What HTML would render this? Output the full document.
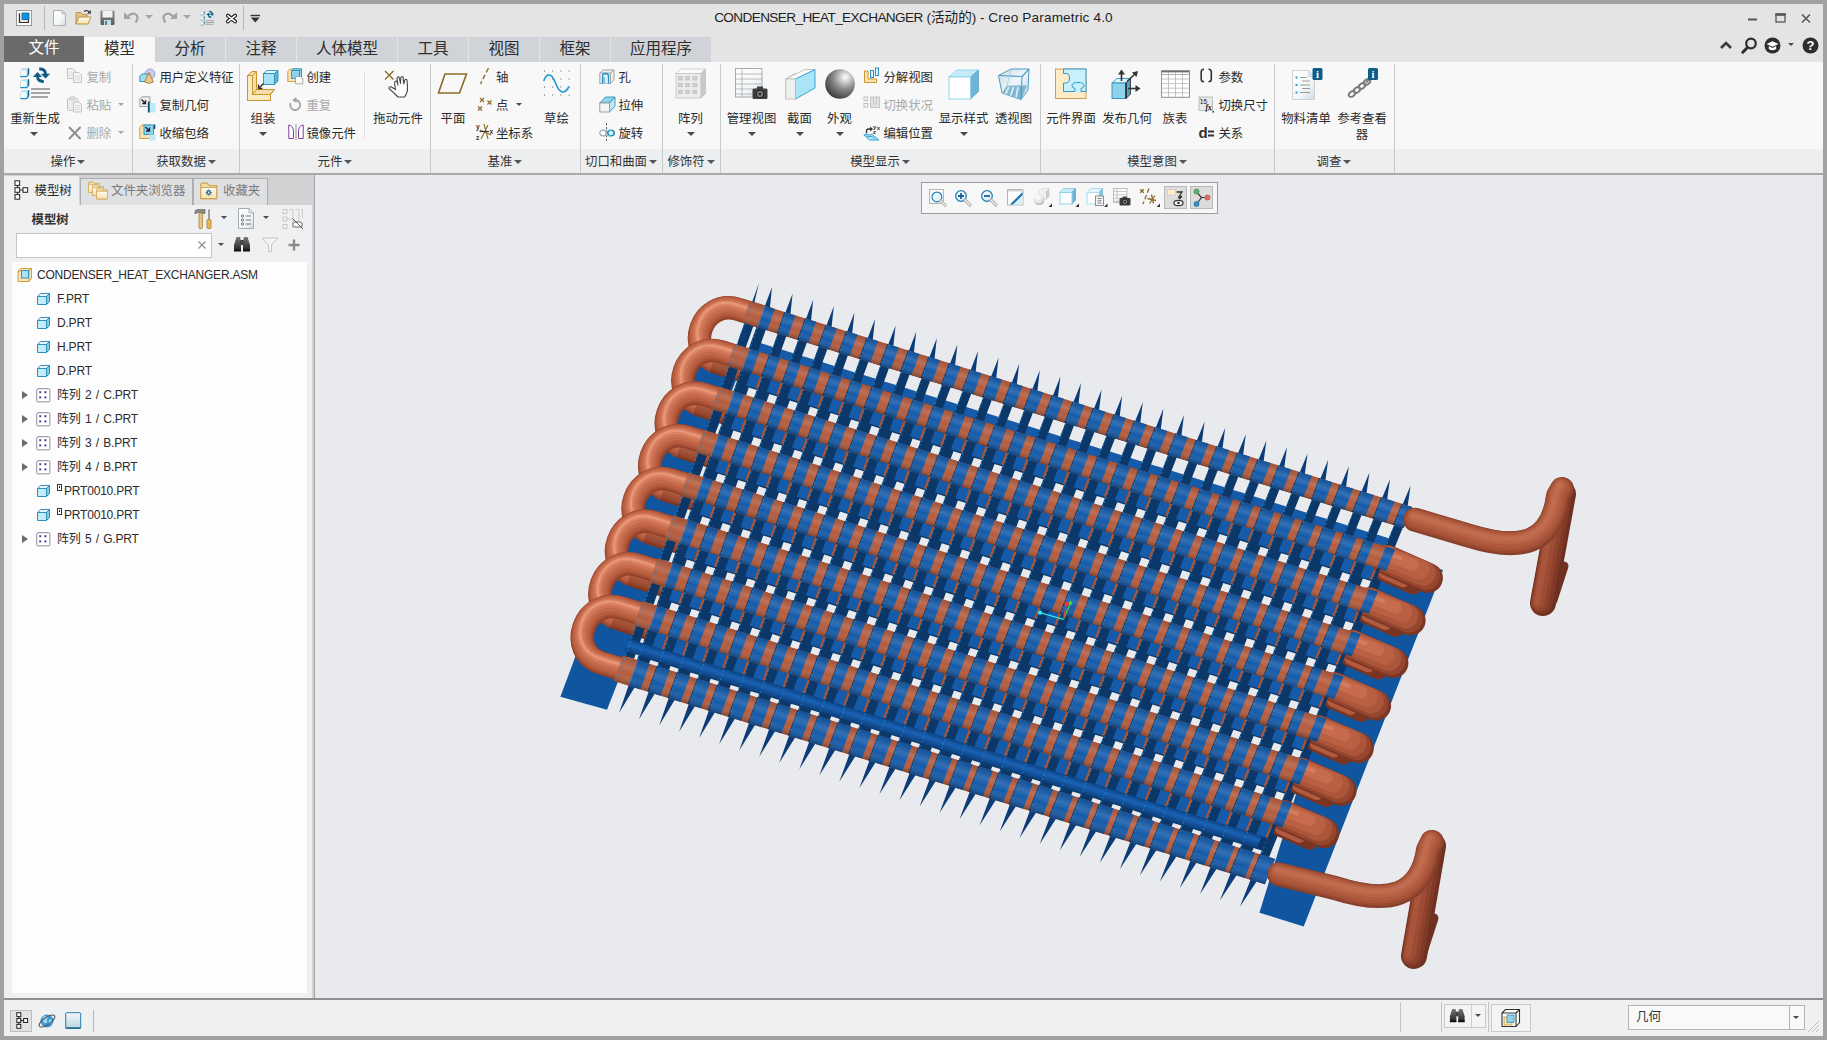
<!DOCTYPE html>
<html lang="zh"><head><meta charset="utf-8"><title>Creo Parametric</title>
<style>
*{box-sizing:border-box;margin:0;padding:0}
html,body{width:1827px;height:1040px;overflow:hidden;background:#a1a1a1}
body{font-family:"Liberation Sans","Noto Sans CJK SC",sans-serif;font-size:12px;color:#2b2b2b;position:relative}
.abs{position:absolute}
#win{position:absolute;left:4px;top:4px;width:1819px;height:1032px;background:#e4e4e4;overflow:hidden}
#title{position:absolute;left:0;top:0;width:1819px;height:32px;background:#e4e4e4}
#title .t{position:absolute;left:0;width:1819px;top:4px;text-align:center;font-size:13.6px;line-height:20px;color:#1e1e1e}
#tabs{position:absolute;left:0;top:32px;width:1819px;height:26px}
.tab{position:absolute;top:1px;height:25px;background:#d0d4d8;font-size:15.5px;color:#2d2d2d;text-align:center;line-height:23px}
.tab.file{background:#6a6a6a;color:#fff;top:0;height:26px;line-height:24px}
.tab.act{background:#f8f8f8;top:1px;height:26px}
#ribbon{position:absolute;left:0;top:58px;width:1819px;height:87px;background:#f8f8f8}
#riblab{position:absolute;left:0;top:145px;width:1819px;height:24px;background:#edeef0}
#ribline{position:absolute;left:0;top:169px;width:1819px;height:2px;background:#a9a9a9}
.gsep{position:absolute;top:60px;width:1px;height:109px;background:#c9c9c9}
.glab{position:absolute;top:149.5px;height:16px;line-height:16px;font-size:12.4px;color:#333;text-align:center;white-space:nowrap}
.glab i{display:inline-block;width:0;height:0;border-left:4px solid transparent;border-right:4px solid transparent;border-top:4px solid #555;margin-left:2px;vertical-align:2px}
.bl{position:absolute;white-space:nowrap;text-align:center;font-size:12.4px;line-height:16px;color:#2b2b2b}
.sl{position:absolute;white-space:nowrap;font-size:12.4px;line-height:16px;color:#2b2b2b}
.dis{color:#a9a9a9}
.dd{position:absolute;width:0;height:0;border-left:4px solid transparent;border-right:4px solid transparent;border-top:4px solid #4a4a4a}
.dd.g{border-top-color:#a5a5a5}
.ic{position:absolute;overflow:visible}
#left{position:absolute;left:0;top:171px;width:310px;height:823px;background:#d1d2d4}
#leftin{position:absolute;left:0;top:30px;width:308px;height:793px;background:#eff0f2}
#sash{position:absolute;left:310px;top:171px;width:1px;height:823px;background:#a4a4a4}
#gfx{position:absolute;left:311px;top:171px;width:1508px;height:823px;background:#e9eaee;overflow:hidden}
#botline{position:absolute;left:0;top:994px;width:1819px;height:2px;background:#8f8f8f}
#status{position:absolute;left:0;top:996px;width:1819px;height:36px;background:#eff0f2}
.ltab{position:absolute;top:3px;height:27px;font-size:12px;line-height:26px;color:#777;background:#dee0e2;border:1px solid #adaeb0;border-bottom:none;white-space:nowrap}
.ltab.act{background:#eff0f2;color:#2b2b2b;border:none;top:1px;height:30px}
#tree{position:absolute;left:8px;top:87px;width:295px;height:731px;background:#fdfdfd}
.tr{position:absolute;left:0;height:24px;line-height:24px;font-size:12px;color:#2b2b2b;white-space:nowrap;letter-spacing:-0.2px;word-spacing:1.2px}
.tri{position:absolute;width:0;height:0;border-top:4.5px solid transparent;border-bottom:4.5px solid transparent;border-left:6px solid #6a6a6a}
</style></head>
<body>
<div id="win">
<div id="title"><div class="t"><span style="letter-spacing:-0.62px">CONDENSER_HEAT_EXCHANGER</span> (活动的) - <span style="letter-spacing:0.15px">Creo Parametric 4.0</span></div><svg width="0" height="0" style="position:absolute"><defs>
<linearGradient id="gCube" x1="0" y1="0" x2="1" y2="1"><stop offset="0" stop-color="#e9f8fd"/><stop offset="1" stop-color="#9fdcf0"/></linearGradient>
<linearGradient id="gPaper" x1="0" y1="0" x2="1" y2="1"><stop offset="0" stop-color="#ffffff"/><stop offset="0.6" stop-color="#f4f7f9"/><stop offset="1" stop-color="#cfdde6"/></linearGradient>
<linearGradient id="gFold" x1="0" y1="0" x2="0" y2="1"><stop offset="0" stop-color="#fffdf7"/><stop offset="1" stop-color="#f7dfa8"/></linearGradient>
<linearGradient id="gSave" x1="0" y1="0" x2="0" y2="1"><stop offset="0" stop-color="#8a8a8a"/><stop offset="1" stop-color="#5c5c5c"/></linearGradient>
<radialGradient id="gBall" cx="0.68" cy="0.27" r="0.8"><stop offset="0" stop-color="#ffffff"/><stop offset="0.12" stop-color="#e4e4e4"/><stop offset="0.5" stop-color="#8a8a8a"/><stop offset="1" stop-color="#3a3a3a"/></radialGradient>
<radialGradient id="gBallW" cx="0.4" cy="0.3" r="0.8"><stop offset="0" stop-color="#ffffff"/><stop offset="0.6" stop-color="#e2e2e2"/><stop offset="1" stop-color="#9a9a9a"/></radialGradient>
<linearGradient id="gBino" x1="0" y1="0" x2="0" y2="1"><stop offset="0" stop-color="#777"/><stop offset="1" stop-color="#222"/></linearGradient>
<linearGradient id="gGlass" x1="0" y1="0" x2="1" y2="1"><stop offset="0" stop-color="#ffffff"/><stop offset="1" stop-color="#d4ecf8"/></linearGradient>
<linearGradient id="gSq" x1="0" y1="0" x2="0" y2="1"><stop offset="0" stop-color="#f4f8fb"/><stop offset="1" stop-color="#bcd4e0"/></linearGradient>
</defs></svg><svg class="ic" style="left:12px;top:6px" width="16" height="16" viewBox="0 0 16 16"><rect x="0.5" y="0.5" width="15" height="15" fill="#fff" stroke="#9a9a9a"/><path d="M3.5 3.5 V12.5 H12.5" fill="none" stroke="#333" stroke-width="1.2"/><rect x="3.5" y="9" width="9" height="3.5" fill="#e8e4dc" stroke="none"/><path d="M3.5 3.5 V12.5 H12.5 V9" fill="none" stroke="#333" stroke-width="1.2"/><rect x="6" y="3" width="7" height="6.5" fill="#0d93dc" stroke="#1a5f96" stroke-width="0.8"/></svg><div class="abs" style="left:40px;top:2px;width:1px;height:24px;background:#b5b5b5"></div><svg class="ic" style="left:49px;top:6px" width="14" height="16" viewBox="0 0 14 16"><path d="M0.5 0.5 H9 L12.5 4 V15.5 H0.5 Z" fill="url(#gPaper)" stroke="#a9b1b7"/><path d="M9 0.5 V4 H12.5 Z" fill="#cfe0ec" stroke="#a9b1b7" stroke-width="0.7"/></svg><svg class="ic" style="left:71px;top:5px" width="17" height="17" viewBox="0 0 17 17"><path d="M1 15 V4.5 Q1 3.5 2 3.5 H6 L7.5 5.5 H12 V8" fill="#e3c47f" stroke="#b8924a"/><path d="M1 15 L4 8 H16 L13 15 Z" fill="url(#gFold)" stroke="#b8924a"/><path d="M9 2.5 Q12 0.5 14.5 3" fill="none" stroke="#3a3a3a" stroke-width="1.3"/><path d="M15.8 1 V4.8 H12 Z" fill="#3a3a3a"/></svg><svg class="ic" style="left:96px;top:6px" width="15" height="16" viewBox="0 0 15 16"><rect x="0.5" y="0.5" width="14" height="14.5" rx="1" fill="url(#gSave)"/><rect x="2.5" y="0.5" width="10" height="7" fill="#f2f2f2"/><rect x="4" y="10" width="7" height="5" fill="#b9dff0"/><rect x="5" y="11" width="2" height="4" fill="#777"/></svg><svg class="ic" style="left:119px;top:7px" width="17" height="13" viewBox="0 0 17 13"><path d="M1 1 V8 H8 Z" fill="#a3a3a3"/><path d="M4 6.5 Q9 0.5 13.5 4 Q16 7 12.5 11.5" fill="none" stroke="#a3a3a3" stroke-width="2.2"/></svg><div class="dd g" style="left:141px;top:11px;border-left-width:4px;border-right-width:4px;border-top-width:4px"></div><svg class="ic" style="left:157px;top:7px" width="17" height="13" viewBox="0 0 17 13"><path d="M16 1 V8 H9 Z" fill="#a3a3a3"/><path d="M13 6.5 Q8 0.5 3.5 4 Q1 7 4.5 11.5" fill="none" stroke="#a3a3a3" stroke-width="2.2"/></svg><div class="dd g" style="left:179px;top:11px;border-left-width:4px;border-right-width:4px;border-top-width:4px"></div><svg class="ic" style="left:195px;top:6.5px" width="16" height="17" viewBox="0 0 16 17"><g transform="scale(0.46)"><g transform="translate(3 0)"><path d="M0.5 2.5 L2.5 0.5 H8.5 L6.5 2.5 Z" fill="#a8e6fa"/><path d="M6.5 2.5 L8.5 0.5 V6.5 L6.5 8.5 Z" fill="#7fbcd9"/><rect x="0.5" y="2.5" width="6" height="6" fill="#f2fcff"/><path d="M0.5 8.5 V2.5 L2.5 0.5 H8.5" fill="none" stroke="#d9cfcf" stroke-width="0.8"/><path d="M0.3 8.6 H6.5 L8.6 6.5" fill="none" stroke="#1a8fc4" stroke-width="1.2"/><path d="M8.6 0.3 V6.5" stroke="#0d5c86" stroke-width="1.2"/></g><g transform="translate(3 11)"><path d="M0.5 2.5 L2.5 0.5 H8.5 L6.5 2.5 Z" fill="#a8e6fa"/><path d="M6.5 2.5 L8.5 0.5 V6.5 L6.5 8.5 Z" fill="#7fbcd9"/><rect x="0.5" y="2.5" width="6" height="6" fill="#f2fcff"/><path d="M0.5 8.5 V2.5 L2.5 0.5 H8.5" fill="none" stroke="#d9cfcf" stroke-width="0.8"/><path d="M0.3 8.6 H6.5 L8.6 6.5" fill="none" stroke="#1a8fc4" stroke-width="1.2"/><path d="M8.6 0.3 V6.5" stroke="#0d5c86" stroke-width="1.2"/></g><g transform="translate(3 22)"><path d="M0.5 2.5 L2.5 0.5 H8.5 L6.5 2.5 Z" fill="#a8e6fa"/><path d="M6.5 2.5 L8.5 0.5 V6.5 L6.5 8.5 Z" fill="#7fbcd9"/><rect x="0.5" y="2.5" width="6" height="6" fill="#f2fcff"/><path d="M0.5 8.5 V2.5 L2.5 0.5 H8.5" fill="none" stroke="#d9cfcf" stroke-width="0.8"/><path d="M0.3 8.6 H6.5 L8.6 6.5" fill="none" stroke="#1a8fc4" stroke-width="1.2"/><path d="M8.6 0.3 V6.5" stroke="#0d5c86" stroke-width="1.2"/></g><path d="M20.5 4 L25.2 8.9 H15.8 Z" fill="#0d5c86"/><path d="M20.6 8.5 Q20.3 13.6 26.8 13.4" fill="none" stroke="#0d5c86" stroke-width="3"/><path d="M28.5 10.6 L23.8 5.7 H33.2 Z" fill="#0d5c86"/><path d="M28.4 6 Q28.7 0.9 22.2 1.1" fill="none" stroke="#0d5c86" stroke-width="3"/><g stroke="#9a9a9a" stroke-width="1.8"><path d="M14.1 21 H33"/><path d="M14.1 25 H33"/><path d="M14.1 29 H31"/></g></g></svg><svg class="ic" style="left:221px;top:9px" width="13" height="11" viewBox="0 0 13 11"><path d="M2.8 2.6 L10.2 8.6 M10.2 2.6 L2.8 8.6" stroke="#222" stroke-width="3.8" stroke-linecap="round"/><path d="M2.8 2.6 L10.2 8.6 M10.2 2.6 L2.8 8.6" stroke="#fff" stroke-width="1.5" stroke-linecap="round"/></svg><div class="abs" style="left:239px;top:2px;width:1px;height:24px;background:#b5b5b5"></div><svg class="ic" style="left:246px;top:10px" width="11" height="9" viewBox="0 0 11 9"><rect x="0.5" y="0.8" width="9.5" height="1.4" fill="#333"/><path d="M0.8 3.5 H9.7 L5.25 8.5 Z" fill="#333"/></svg><svg class="ic" style="left:1742px;top:9px" width="60" height="14" viewBox="0 0 60 14"><rect x="2" y="5.5" width="9" height="2" fill="#555"/><rect x="30" y="1" width="9" height="8" fill="none" stroke="#555" stroke-width="1.3"/><rect x="29.4" y="0.4" width="10.2" height="2.4" fill="#555"/><path d="M56 1.5 L64 9.5 M64 1.5 L56 9.5" stroke="#555" stroke-width="1.6"/></svg></div>
<div id="tabs"><div class="tab file" style="left:0px;width:80px">文件</div><div class="tab act" style="left:80px;width:71px">模型</div><div class="tab " style="left:151px;width:70px">分析</div><div class="tab " style="left:222px;width:70px">注释</div><div class="tab " style="left:293px;width:100px">人体模型</div><div class="tab " style="left:394px;width:70px">工具</div><div class="tab " style="left:465px;width:70px">视图</div><div class="tab " style="left:536px;width:70px">框架</div><div class="tab " style="left:607px;width:100px">应用程序</div><svg class="ic" style="left:1715px;top:4px" width="14" height="10" viewBox="0 0 14 10"><path d="M2 8 L7 3 L12 8" fill="none" stroke="#3a3a3a" stroke-width="2.6"/></svg><svg class="ic" style="left:1737px;top:1px" width="17" height="17" viewBox="0 0 17 17"><circle cx="10" cy="6.5" r="4.8" fill="#e4e4e4" stroke="#2d2d2d" stroke-width="2.2"/><path d="M6.5 10.5 L1.8 15.2" stroke="#2d2d2d" stroke-width="3" stroke-linecap="round"/></svg><svg class="ic" style="left:1760px;top:1px" width="17" height="17" viewBox="0 0 17 17"><circle cx="8.5" cy="8.5" r="8" fill="#2d2d2d"/><path d="M2.5 7 L8.5 4.2 L14.5 7 L8.5 9.8 Z" fill="#fff"/><path d="M4.8 9 V12 Q8.5 14.5 12.2 12 V9 L8.5 10.9 Z" fill="#fff"/></svg><div class="dd" style="left:1783.5px;top:7px;border-left-width:3.5px;border-right-width:3.5px;border-top-width:3.5px"></div><svg class="ic" style="left:1798px;top:1px" width="17" height="17" viewBox="0 0 17 17"><circle cx="8.5" cy="8.5" r="8" fill="#2d2d2d"/><text x="8.5" y="13.2" font-family="Liberation Sans,sans-serif" font-weight="bold" font-size="13" fill="#fff" text-anchor="middle">?</text></svg></div>
<div id="ribbon"></div><div id="riblab"></div><div id="ribline"></div>
<div class="gsep" style="left:128px"></div><div class="gsep" style="left:235px"></div><div class="gsep" style="left:426px"></div><div class="gsep" style="left:576px"></div><div class="gsep" style="left:658px"></div><div class="gsep" style="left:716px"></div><div class="gsep" style="left:1036px"></div><div class="gsep" style="left:1270px"></div><div class="gsep" style="left:1390px"></div>
<div class="glab" style="left:4px;width:120px">操作<i></i></div><div class="glab" style="left:122px;width:120px">获取数据<i></i></div><div class="glab" style="left:271px;width:120px">元件<i></i></div><div class="glab" style="left:441px;width:120px">基准<i></i></div><div class="glab" style="left:557px;width:120px">切口和曲面<i></i></div><div class="glab" style="left:627px;width:120px">修饰符<i></i></div><div class="glab" style="left:816px;width:120px">模型显示<i></i></div><div class="glab" style="left:1093px;width:120px">模型意图<i></i></div><div class="glab" style="left:1270px;width:120px">调查<i></i></div>
<svg class="ic" style="left:13px;top:64px" width="34" height="34" viewBox="0 0 34 34"><g transform="scale(1.0)"><g transform="translate(3 0)"><path d="M0.5 2.5 L2.5 0.5 H8.5 L6.5 2.5 Z" fill="#a8e6fa"/><path d="M6.5 2.5 L8.5 0.5 V6.5 L6.5 8.5 Z" fill="#7fbcd9"/><rect x="0.5" y="2.5" width="6" height="6" fill="#f2fcff"/><path d="M0.5 8.5 V2.5 L2.5 0.5 H8.5" fill="none" stroke="#d9cfcf" stroke-width="0.8"/><path d="M0.3 8.6 H6.5 L8.6 6.5" fill="none" stroke="#1a8fc4" stroke-width="1.2"/><path d="M8.6 0.3 V6.5" stroke="#0d5c86" stroke-width="1.2"/></g><g transform="translate(3 11)"><path d="M0.5 2.5 L2.5 0.5 H8.5 L6.5 2.5 Z" fill="#a8e6fa"/><path d="M6.5 2.5 L8.5 0.5 V6.5 L6.5 8.5 Z" fill="#7fbcd9"/><rect x="0.5" y="2.5" width="6" height="6" fill="#f2fcff"/><path d="M0.5 8.5 V2.5 L2.5 0.5 H8.5" fill="none" stroke="#d9cfcf" stroke-width="0.8"/><path d="M0.3 8.6 H6.5 L8.6 6.5" fill="none" stroke="#1a8fc4" stroke-width="1.2"/><path d="M8.6 0.3 V6.5" stroke="#0d5c86" stroke-width="1.2"/></g><g transform="translate(3 22)"><path d="M0.5 2.5 L2.5 0.5 H8.5 L6.5 2.5 Z" fill="#a8e6fa"/><path d="M6.5 2.5 L8.5 0.5 V6.5 L6.5 8.5 Z" fill="#7fbcd9"/><rect x="0.5" y="2.5" width="6" height="6" fill="#f2fcff"/><path d="M0.5 8.5 V2.5 L2.5 0.5 H8.5" fill="none" stroke="#d9cfcf" stroke-width="0.8"/><path d="M0.3 8.6 H6.5 L8.6 6.5" fill="none" stroke="#1a8fc4" stroke-width="1.2"/><path d="M8.6 0.3 V6.5" stroke="#0d5c86" stroke-width="1.2"/></g><path d="M20.5 4 L25.2 8.9 H15.8 Z" fill="#0d5c86"/><path d="M20.6 8.5 Q20.3 13.6 26.8 13.4" fill="none" stroke="#0d5c86" stroke-width="3"/><path d="M28.5 10.6 L23.8 5.7 H33.2 Z" fill="#0d5c86"/><path d="M28.4 6 Q28.7 0.9 22.2 1.1" fill="none" stroke="#0d5c86" stroke-width="3"/><g stroke="#9a9a9a" stroke-width="1.8"><path d="M14.1 21 H33"/><path d="M14.1 25 H33"/><path d="M14.1 29 H31"/></g></g></svg><div class="bl " style="left:-19px;top:106.7px;width:100px">重新生成</div><div class="dd" style="left:26px;top:128px;border-left-width:4px;border-right-width:4px;border-top-width:4px"></div><svg class="ic" style="left:63px;top:64px" width="16" height="16" viewBox="0 0 16 16"><g><path d="M0.5 0.5 H6 L8.5 3 V10.5 H0.5 Z" fill="#f4f4f4" stroke="#c4c4c4"/><path d="M2 4 H7 M2 6 H7 M2 8 H7" stroke="#d5d5d5" stroke-width="0.8"/></g><g transform="translate(6 4)"><path d="M0.5 0.5 H6 L8.5 3 V10.5 H0.5 Z" fill="#f4f4f4" stroke="#c4c4c4"/><path d="M2 4 H7 M2 6 H7 M2 8 H7" stroke="#d5d5d5" stroke-width="0.8"/></g></svg><div class="sl dis" style="left:82.4px;top:65.6px">复制</div><svg class="ic" style="left:63px;top:92px" width="16" height="17" viewBox="0 0 16 17"><rect x="0.5" y="2.5" width="10" height="12" rx="1" fill="#ececec" stroke="#c4c4c4"/><rect x="3" y="0.8" width="5" height="3" rx="1" fill="#e0e0e0" stroke="#c4c4c4" stroke-width="0.8"/><g transform="translate(6 5.5)"><path d="M0.5 0.5 H6 L8.5 3 V10.5 H0.5 Z" fill="#f4f4f4" stroke="#c4c4c4"/><path d="M2 4 H7 M2 6 H7 M2 8 H7" stroke="#d5d5d5" stroke-width="0.8"/></g></svg><div class="sl dis" style="left:82.4px;top:93.6px">粘贴</div><div class="dd g" style="left:113.5px;top:99px;border-left-width:3.5px;border-right-width:3.5px;border-top-width:3.5px"></div><svg class="ic" style="left:64px;top:122px" width="14" height="14" viewBox="0 0 14 14"><path d="M1.5 1.5 L12 12.5 M12 1.5 L1.5 12.5" stroke="#8f8f8f" stroke-width="2" stroke-linecap="round"/></svg><div class="sl dis" style="left:82.4px;top:121.6px">删除</div><div class="dd g" style="left:113.5px;top:127px;border-left-width:3.5px;border-right-width:3.5px;border-top-width:3.5px"></div><svg class="ic" style="left:135px;top:64px" width="17" height="17" viewBox="0 0 17 17"><circle cx="11" cy="6" r="5" fill="#c9cdf0" stroke="#8a8fd0" stroke-width="0.8"/><path d="M0.8 8 L3 6 H9 V11.5 L7 13.5 H0.8 Z" fill="#9fdcf0" stroke="#2a8fbd" stroke-width="0.9"/><path d="M5.5 14 L10 4.5 L14.5 14 Q10 16.5 5.5 14 Z" fill="#e8c98a" stroke="#a57c2e" stroke-width="0.9"/></svg><div class="sl " style="left:155.4px;top:65.6px">用户定义特征</div><svg class="ic" style="left:135px;top:92px" width="17" height="17" viewBox="0 0 17 17"><path d="M0.8 3 L3 0.8 H11 V8 L8.5 10.5 H0.8 Z" fill="#ededed" stroke="#9a9a9a" stroke-width="0.9"/><path d="M2.5 3.5 L6.5 7.5 M6.5 4.2 V7.5 H3.2" fill="none" stroke="#222" stroke-width="1.3"/><rect x="9" y="7" width="7.5" height="9.5" fill="#bfe9f7"/><path d="M9.8 5.5 V16.5" stroke="#0d4e6e" stroke-width="1.8"/></svg><div class="sl " style="left:155.4px;top:93.6px">复制几何</div><svg class="ic" style="left:135px;top:120px" width="17" height="17" viewBox="0 0 17 17"><path d="M0.8 3.5 L3 1 H12 V12 L10 14.5 H0.8 Z" fill="#f9e4b5" stroke="#c9952f" stroke-width="0.9"/><rect x="5" y="1" width="9.5" height="9.5" fill="#8fd3ea" stroke="#2a8fbd" stroke-width="0.9"/><path d="M15.5 0.5 V5" stroke="#0d4e6e" stroke-width="1.5"/><path d="M6.5 3 L10.5 7 M10.5 3.6 V7 H7.1" fill="none" stroke="#222" stroke-width="1.3"/><rect x="10.5" y="10.5" width="6" height="6" fill="#bfe9f7"/></svg><div class="sl " style="left:155.4px;top:121.6px">收缩包络</div><svg class="ic" style="left:243px;top:65px" width="32" height="32" viewBox="0 0 32 32"><path d="M0.5 6.5 L5 2.5 H9.5 V20.5 H27.5 L23.5 25 V31.5 H0.5 Z" fill="#f6dca6" stroke="#c9952f"/><path d="M0.5 6.5 H5.5 V25.5 H23.5 V31.5 H0.5 Z" fill="#fbe9c2" stroke="#c9952f"/><path d="M5.5 6.5 L9.5 2.5 M5.5 25.5 L9.5 20.5 M23.5 25.5 L27.5 20.5" stroke="#c9952f" fill="none"/><path d="M16.5 4.5 L20 1.5 H31 L27.5 4.5 Z" fill="#e9f8fd" stroke="#2a8fbd" stroke-width="0.9"/><path d="M27.5 4.5 L31 1.5 V12 L27.5 15.5 Z" fill="#5fb4d6" stroke="#2a8fbd" stroke-width="0.9"/><rect x="16.5" y="4.5" width="11" height="11" fill="#a9e2f5" stroke="#2a8fbd" stroke-width="0.9"/><path d="M16.5 14.5 L11.5 19.5 M11.5 15.5 V19.5 H15.5" fill="none" stroke="#333" stroke-width="1.4"/></svg><div class="bl " style="left:209px;top:106.7px;width:100px">组装</div><div class="dd" style="left:254.5px;top:128px;border-left-width:4px;border-right-width:4px;border-top-width:4px"></div><svg class="ic" style="left:283px;top:64px" width="17" height="17" viewBox="0 0 17 17"><path d="M0.8 3.5 L3 1 H10 V11 L8 13.5 H0.8 Z" fill="#f9e4b5" stroke="#c9952f" stroke-width="0.9"/><path d="M4.5 2.5 L6.5 0.8 H14.5 V8.5 L12.5 10.5 H4.5 Z" fill="#8fd3ea" stroke="#2a8fbd" stroke-width="0.9"/><path d="M4.5 2.5 H12.5 V10.5 M12.5 2.5 L14.5 0.8" fill="none" stroke="#2a8fbd" stroke-width="0.9"/><path d="M8.5 8.5 H13.5 L15.8 10.8 V15.8 H8.5 Z" fill="#fafafa" stroke="#9a9a9a" stroke-width="0.8"/></svg><div class="sl " style="left:302.4px;top:65.6px">创建</div><svg class="ic" style="left:284px;top:93px" width="14" height="15" viewBox="0 0 14 15"><path d="M7.5 3 A5 5 0 1 1 2.6 6" fill="none" stroke="#a3a3a3" stroke-width="1.8"/><path d="M8.5 0 V6 L4.2 3 Z" fill="#a3a3a3"/></svg><div class="sl dis" style="left:302.4px;top:93.6px">重复</div><svg class="ic" style="left:284px;top:120px" width="16" height="16" viewBox="0 0 16 16"><path d="M8 0 V16" stroke="#888" stroke-width="0.9"/><path d="M0.8 1 Q5.5 1.5 5.5 8 V14.5 H0.8 Z" fill="#fff" stroke="#7d3f9b" stroke-width="1"/><path d="M15.2 1 Q10.5 1.5 10.5 8 V14.5 H15.2 Z" fill="#fff" stroke="#7d3f9b" stroke-width="1"/></svg><div class="sl " style="left:302.4px;top:121.6px">镜像元件</div><div class="abs" style="left:360px;top:68px;width:1px;height:67px;background:#e0e0e0"></div><svg class="ic" style="left:380px;top:66px" width="28" height="29" viewBox="0 0 28 29"><path d="M1 1 L9.5 9.5 M9.5 1 L1 9.5" stroke="#8e6b25" stroke-width="1.4"/><path d="M10.5 13 Q11 10.5 12.8 11.3 L14 15 L13 8.5 Q13.2 6.5 15 7 L16.5 13.5 L16.8 7.8 Q17.5 6 19 7 L19.8 14 L20.8 9.8 Q22 8.5 23 10 L23.5 17 Q24 22 20.5 27 H14 Q8 21 5 18.5 Q4.8 16.5 7 16.8 L11.5 19.5 Z" fill="#fff" stroke="#444" stroke-width="1.1" stroke-linejoin="round"/></svg><div class="bl " style="left:344px;top:106.7px;width:100px">拖动元件</div><svg class="ic" style="left:433px;top:68px" width="31" height="23" viewBox="0 0 31 23"><path d="M8 2 H29.5 L22.5 21 H1.5 Z" fill="none" stroke="#8e6b25" stroke-width="1.6"/></svg><div class="bl " style="left:399px;top:106.7px;width:100px">平面</div><svg class="ic" style="left:475px;top:63px" width="11" height="18" viewBox="0 0 11 18"><path d="M9.5 1 L1.5 17" stroke="#8e6b25" stroke-width="1.4" stroke-dasharray="5 2.5"/></svg><div class="sl " style="left:491.9px;top:65.6px">轴</div><svg class="ic" style="left:472px;top:93px" width="17" height="15" viewBox="0 0 17 15"><g stroke="#8e6b25" stroke-width="1.2"><path d="M4 1 L8 5 M8 1 L4 5"/><path d="M11.5 3.5 L15.5 7.5 M15.5 3.5 L11.5 7.5"/><path d="M2 9.5 L6 13.5 M6 9.5 L2 13.5"/></g></svg><div class="sl " style="left:491.9px;top:93.6px">点</div><div class="dd" style="left:512.0px;top:99px;border-left-width:3.5px;border-right-width:3.5px;border-top-width:3.5px"></div><svg class="ic" style="left:472px;top:119px" width="18" height="18" viewBox="0 0 18 18"><path d="M8 1 L12 16 M4 7 L15 12 M12 2 L5 16" stroke="#8e6b25" stroke-width="1.1" fill="none"/><path d="M3.5 8.5 H13" stroke="#333" stroke-width="1.1"/><text x="0" y="5.5" font-size="6.5" font-family="Liberation Sans,sans-serif" font-weight="bold" fill="#333">y</text><text x="0" y="16.5" font-size="6.5" font-family="Liberation Sans,sans-serif" font-weight="bold" fill="#333">z</text><text x="13.5" y="10.5" font-size="6.5" font-family="Liberation Sans,sans-serif" font-weight="bold" fill="#333">x</text></svg><div class="sl " style="left:491.9px;top:121.6px">坐标系</div><svg class="ic" style="left:539px;top:66px" width="27" height="27" viewBox="0 0 27 27"><rect x="1.0" y="0.5" width="1" height="1" fill="#555"/><rect x="1.0" y="8.5" width="1" height="1" fill="#555"/><rect x="1.0" y="16.5" width="1" height="1" fill="#555"/><rect x="1.0" y="24.5" width="1" height="1" fill="#555"/><rect x="9.2" y="0.5" width="1" height="1" fill="#555"/><rect x="9.2" y="8.5" width="1" height="1" fill="#555"/><rect x="9.2" y="16.5" width="1" height="1" fill="#555"/><rect x="9.2" y="24.5" width="1" height="1" fill="#555"/><rect x="17.4" y="0.5" width="1" height="1" fill="#555"/><rect x="17.4" y="8.5" width="1" height="1" fill="#555"/><rect x="17.4" y="16.5" width="1" height="1" fill="#555"/><rect x="17.4" y="24.5" width="1" height="1" fill="#555"/><rect x="25.6" y="0.5" width="1" height="1" fill="#555"/><rect x="25.6" y="8.5" width="1" height="1" fill="#555"/><rect x="25.6" y="16.5" width="1" height="1" fill="#555"/><rect x="25.6" y="24.5" width="1" height="1" fill="#555"/><path d="M0.8 11 C3.5 2.5 8.5 2.5 12.5 13 S21.5 25 26 16.5" fill="none" stroke="#2b9dd4" stroke-width="1.7"/></svg><div class="bl " style="left:502.5px;top:106.7px;width:100px">草绘</div><svg class="ic" style="left:595px;top:65px" width="16" height="16" viewBox="0 0 16 16"><path d="M0.8 4 L4 1 H15 V11 L11.5 14.5 H0.8 Z" fill="#f0f0f0" stroke="#9a9a9a" stroke-width="0.9"/><path d="M0.8 4 H11.5 V14.5 M11.5 4 L15 1" fill="none" stroke="#9a9a9a" stroke-width="0.9"/><path d="M3.5 14.5 V7 Q3.5 4.5 6.5 4.5 Q9.5 4.5 9.5 7 V14.5" fill="#dff4fb" stroke="#2a8fbd" stroke-width="1.3"/><path d="M5.2 14.5 V8" stroke="#2a8fbd" stroke-width="0.9"/></svg><div class="sl " style="left:614.4px;top:65.6px">孔</div><svg class="ic" style="left:595px;top:92px" width="17" height="17" viewBox="0 0 17 17"><path d="M0.8 7 L6.5 1 H16 L10.5 7 Z" fill="#8fd3ea" stroke="#2a8fbd" stroke-width="0.9"/><path d="M10.5 7 L16 1 V10 L10.5 16 Z" fill="#bfe9f7" stroke="#2a8fbd" stroke-width="0.9"/><rect x="0.8" y="7" width="9.7" height="9" fill="#f4f4f4" stroke="#9a9a9a" stroke-width="0.9"/></svg><div class="sl " style="left:614.4px;top:93.6px">拉伸</div><svg class="ic" style="left:595px;top:119px" width="17" height="18" viewBox="0 0 17 18"><path d="M7.5 0 V18" stroke="#555" stroke-width="0.9" stroke-dasharray="2.5 1.5"/><ellipse cx="4" cy="10" rx="3.2" ry="2.8" fill="#fff" stroke="#a9a9a9" stroke-width="1.2"/><ellipse cx="12" cy="10" rx="3.2" ry="2.8" fill="#dff4fb" stroke="#2a8fbd" stroke-width="1.6"/><path d="M4 7.2 H12 M4 12.8 H12" stroke="#7fc4e0" stroke-width="0.8"/></svg><div class="sl " style="left:614.4px;top:121.6px">旋转</div><svg class="ic" style="left:671px;top:64px" width="32" height="32" viewBox="0 0 32 32"><path d="M1 5.5 L5.5 1 H30.5 L26 5.5 Z" fill="#fafafa" stroke="#c4c4c4" stroke-width="0.8"/><path d="M26 5.5 L30.5 1 V25.5 L26 30 Z" fill="#c9c9c9" stroke="#c0c0c0" stroke-width="0.8"/><rect x="1" y="5.5" width="25" height="24.5" fill="#ececec" stroke="#c4c4c4" stroke-width="0.8"/><rect x="3.5" y="8.5" width="4" height="3.5" fill="#cfcfcf" stroke="#b5b5b5" stroke-width="0.5"/><rect x="3.5" y="15.3" width="4" height="3.5" fill="#cfcfcf" stroke="#b5b5b5" stroke-width="0.5"/><rect x="3.5" y="22.1" width="4" height="3.5" fill="#cfcfcf" stroke="#b5b5b5" stroke-width="0.5"/><rect x="10.7" y="8.5" width="4" height="3.5" fill="#cfcfcf" stroke="#b5b5b5" stroke-width="0.5"/><rect x="10.7" y="15.3" width="4" height="3.5" fill="#cfcfcf" stroke="#b5b5b5" stroke-width="0.5"/><rect x="10.7" y="22.1" width="4" height="3.5" fill="#cfcfcf" stroke="#b5b5b5" stroke-width="0.5"/><rect x="17.9" y="8.5" width="4" height="3.5" fill="#cfcfcf" stroke="#b5b5b5" stroke-width="0.5"/><rect x="17.9" y="15.3" width="4" height="3.5" fill="#cfcfcf" stroke="#b5b5b5" stroke-width="0.5"/><rect x="17.9" y="22.1" width="4" height="3.5" fill="#cfcfcf" stroke="#b5b5b5" stroke-width="0.5"/></svg><div class="bl " style="left:636.5px;top:106.7px;width:100px">阵列</div><div class="dd" style="left:682.5px;top:128px;border-left-width:4px;border-right-width:4px;border-top-width:4px"></div><svg class="ic" style="left:731px;top:64px" width="34" height="32" viewBox="0 0 34 32"><rect x="0.5" y="0.5" width="26.5" height="28.5" fill="url(#gPaper)" stroke="#a0a0a0" stroke-width="0.9"/><path d="M0.5 6 H27" stroke="#a9a9a9" stroke-width="0.8"/><path d="M0.5 11 H27" stroke="#a9a9a9" stroke-width="0.8"/><path d="M0.5 16 H27" stroke="#a9a9a9" stroke-width="0.8"/><path d="M0.5 21 H27" stroke="#a9a9a9" stroke-width="0.8"/><path d="M0.5 26 H27" stroke="#a9a9a9" stroke-width="0.8"/><path d="M7 0.5 V29" stroke="#a9a9a9" stroke-width="0.8"/><rect x="17.5" y="20.5" width="15" height="10.5" rx="1.5" fill="#3c3c3c"/><rect x="22" y="18.5" width="6" height="3" fill="#3c3c3c"/><circle cx="25" cy="26" r="3.6" fill="#8a8a8a" stroke="#1e1e1e" stroke-width="1"/><circle cx="25" cy="26" r="1.6" fill="#2a2a2a"/></svg><div class="bl " style="left:697.5px;top:106.7px;width:100px">管理视图</div><div class="dd" style="left:743.5px;top:128px;border-left-width:4px;border-right-width:4px;border-top-width:4px"></div><svg class="ic" style="left:781px;top:64px" width="31" height="32" viewBox="0 0 31 32"><path d="M0.8 11 L10.5 5 V26.5 L0.8 31 Z" fill="#ededed" stroke="#b9b9b9" stroke-width="0.8"/><path d="M0.8 11 L20 1.5 L30 1.5 L10.5 11 Z" fill="#fafafa" stroke="#b9b9b9" stroke-width="0.8"/><path d="M10.5 11 L30 1.5 V20 L10.5 31 Z" fill="#a9e4f7" stroke="#3aa6d0" stroke-width="1"/><rect x="0.8" y="11" width="9.7" height="20" fill="#efefef" stroke="#b9b9b9" stroke-width="0.8"/></svg><div class="bl " style="left:745.5px;top:106.7px;width:100px">截面</div><div class="dd" style="left:791.5px;top:128px;border-left-width:4px;border-right-width:4px;border-top-width:4px"></div><svg class="ic" style="left:821px;top:65px" width="30" height="30" viewBox="0 0 30 30"><circle cx="15" cy="15" r="14.8" fill="url(#gBall)"/></svg><div class="bl " style="left:785.5px;top:106.7px;width:100px">外观</div><div class="dd" style="left:831.5px;top:128px;border-left-width:4px;border-right-width:4px;border-top-width:4px"></div><svg class="ic" style="left:859px;top:63px" width="18" height="18" viewBox="0 0 18 18"><path d="M1.5 4 V15.5 H13.5 V12 H5 V4 Z" fill="#f9e4b5" stroke="#c9952f" stroke-width="1"/><rect x="7.5" y="3.5" width="3" height="7" fill="#dff4fb" stroke="#2a8fbd" stroke-width="1"/><rect x="12.5" y="1" width="3" height="7.5" fill="#dff4fb" stroke="#2a8fbd" stroke-width="1"/></svg><div class="sl " style="left:879.4px;top:65.6px">分解视图</div><svg class="ic" style="left:859px;top:92px" width="18" height="14" viewBox="0 0 18 14"><rect x="1" y="1" width="3.6" height="3.6" fill="none" stroke="#bdbdbd"/><rect x="1" y="7.5" width="3.6" height="3.6" fill="none" stroke="#bdbdbd"/><rect x="7.5" y="1" width="9" height="10.5" fill="#e4e4e4" stroke="#c4c4c4"/><path d="M10.5 1 V8 H13.5 V1" fill="none" stroke="#c4c4c4"/></svg><div class="sl dis" style="left:879.4px;top:93.6px">切换状况</div><svg class="ic" style="left:859px;top:120px" width="18" height="17" viewBox="0 0 18 17"><path d="M3.5 9.5 V7 Q3.5 5 5.5 5 H8" fill="none" stroke="#333" stroke-width="1.3"/><path d="M7.2 2.6 L10 5 L7.2 7.4 Z" fill="#333"/><text x="10" y="4.6" font-size="6" font-weight="bold" font-family="Liberation Sans,sans-serif" fill="#333">y</text><text x="13.8" y="6" font-size="6" font-weight="bold" font-family="Liberation Sans,sans-serif" fill="#333">x</text><text x="10" y="10" font-size="6" font-weight="bold" font-family="Liberation Sans,sans-serif" fill="#333">z</text><path d="M0.8 10.8 H9.5 L15.8 16 H6.5 Z" fill="#bfe9f7" stroke="#2b9dd4" stroke-width="1"/><path d="M3.8 12.6 H9 L11.5 14.6" fill="none" stroke="#2b9dd4" stroke-width="1"/></svg><div class="sl " style="left:879.4px;top:121.6px">编辑位置</div><svg class="ic" style="left:944px;top:65px" width="32" height="31" viewBox="0 0 32 31"><path d="M1 8 L9 1 H30.5 L22.5 8 Z" fill="#c7ecf9" stroke="#7fcbe6" stroke-width="0.8"/><path d="M22.5 8 L30.5 1 V22.5 L22.5 30 Z" fill="#6fb4d6" stroke="#5fa8cc" stroke-width="0.8"/><rect x="1" y="8" width="21.5" height="22" fill="#fff" stroke="#8fd3ea" stroke-width="1"/></svg><div class="bl " style="left:909.5px;top:106.7px;width:100px">显示样式</div><div class="dd" style="left:955.5px;top:128px;border-left-width:4px;border-right-width:4px;border-top-width:4px"></div><svg class="ic" style="left:993px;top:64px" width="33" height="33" viewBox="0 0 33 33"><defs><linearGradient id="gPv" x1="0" y1="0" x2="1" y2="1"><stop offset="0" stop-color="#c9dbe4"/><stop offset="0.5" stop-color="#eef6fa"/><stop offset="1" stop-color="#b9d9e8"/></linearGradient></defs><path d="M1.5 7.5 L14 1 H32 L31 22 L24 31.5 L5 25 Z" fill="url(#gPv)" stroke="#4f9cc0" stroke-width="1"/><path d="M10 18 L30 17.5 L24 31.5 L5 25 Z" fill="#7fb6cf"/><path d="M12 19 L8.5 26 M16.5 19 L13.5 27.8 M21 19 L19 29.6" stroke="#d4ecf5" stroke-width="1.8"/><path d="M1.5 7.5 L25 8.5 L24 31.5 M25 8.5 L32 1" fill="none" stroke="#4f9cc0" stroke-width="1.1"/><path d="M14 1 L10 18 L5 25 M10 18 L30 17.5" fill="none" stroke="#9cc8dc" stroke-width="0.8"/></svg><div class="bl " style="left:959.5px;top:106.7px;width:100px">透视图</div><svg class="ic" style="left:1051px;top:64px" width="32" height="32" viewBox="0 0 32 32"><rect x="0.5" y="1" width="30.5" height="29.5" fill="#fdebc8" stroke="#c9a05a" stroke-width="1"/><path d="M8.5 1 H31 V23.5 H8.5 V15 Q14.5 16 14.5 10 Q14.5 4.5 8.5 5.5 Z" fill="#c9effb" stroke="#2b9dd4" stroke-width="1"/><path d="M20 23.5 V20.5 Q17 20 17 17.5 Q17 14.5 23 14.5 Q29 14.5 29 17.5 Q29 20 26 20.5 V23.5" fill="#c9effb" stroke="#2b9dd4" stroke-width="1"/><path d="M20.5 23.5 H25.5" stroke="#c9effb" stroke-width="1.4"/></svg><div class="bl " style="left:1017px;top:106.7px;width:100px">元件界面</div><svg class="ic" style="left:1107px;top:65px" width="31" height="31" viewBox="0 0 31 31"><path d="M1 14 L6 9.5 H19.5 L15 14 Z" fill="#dff4fb" stroke="#2a8fbd" stroke-width="0.9"/><rect x="1" y="14" width="14" height="15.5" fill="#8fd3ea" stroke="#2a8fbd" stroke-width="0.9"/><path d="M15 14 L19.5 9.5 V25 L15 29.5 Z" fill="#4fa3c6" stroke="#333" stroke-width="0.9"/><path d="M15 29.5 V14" stroke="#333" stroke-width="1.6"/><path d="M10.5 12 V2" stroke="#333" stroke-width="1.6"/><path d="M7 5.5 L10.5 0.5 L14 5.5 Z" fill="#333"/><path d="M17 19.5 H26" stroke="#333" stroke-width="1.6"/><path d="M24.5 16 L29.5 19.5 L24.5 23 Z" fill="#333"/><path d="M16 12.5 L24 5" stroke="#333" stroke-width="1.6"/><path d="M21 3.5 L27 2 L25.5 8 Z" fill="#333"/></svg><div class="bl " style="left:1073px;top:106.7px;width:100px">发布几何</div><svg class="ic" style="left:1157px;top:66px" width="30" height="29" viewBox="0 0 30 29"><rect x="0.5" y="0.8" width="28" height="26.5" fill="#fff" stroke="#8f8f8f" stroke-width="1"/><path d="M0.5 9.0 H28.5" stroke="#b5b5b5" stroke-width="0.8"/><path d="M0.5 13.6 H28.5" stroke="#b5b5b5" stroke-width="0.8"/><path d="M0.5 18.2 H28.5" stroke="#b5b5b5" stroke-width="0.8"/><path d="M0.5 22.8 H28.5" stroke="#b5b5b5" stroke-width="0.8"/><path d="M7.5 2.5 V27" stroke="#b5b5b5" stroke-width="0.8"/><path d="M14.5 2.5 V27" stroke="#b5b5b5" stroke-width="0.8"/><path d="M21.5 2.5 V27" stroke="#b5b5b5" stroke-width="0.8"/><path d="M0.5 1.5 H28.5" stroke="#6f6f6f" stroke-width="1.8"/><path d="M0.5 4.5 H28.5" stroke="#9a9a9a" stroke-width="0.8"/></svg><div class="bl " style="left:1121px;top:106.7px;width:100px">族表</div><svg class="ic" style="left:1195px;top:64px" width="16" height="16" viewBox="0 0 16 16"><path d="M5 1.2 Q2.2 1.2 2.2 4 V11 Q2.2 13.8 5 13.8 M9.5 1.2 Q12.3 1.2 12.3 4 V11 Q12.3 13.8 9.5 13.8" fill="none" stroke="#333" stroke-width="1.6"/></svg><div class="sl " style="left:1214.4px;top:65.6px">参数</div><svg class="ic" style="left:1194px;top:92px" width="18" height="18" viewBox="0 0 18 18"><rect x="1" y="1" width="13.5" height="13.5" fill="#e9e9e9" stroke="#b0b0b0" stroke-width="0.8"/><path d="M1 1 L14.5 14.5" stroke="#b0b0b0" stroke-width="0.8"/><text x="1.8" y="7.5" font-size="6.5" font-family="Liberation Sans,sans-serif" fill="#222">15</text><text x="7.5" y="14" font-size="7.5" font-style="italic" font-weight="bold" font-family="Liberation Serif,serif" fill="#222">fx</text><rect x="14.5" y="15" width="1.6" height="1.6" fill="#0d4e6e"/></svg><div class="sl " style="left:1214.4px;top:93.6px">切换尺寸</div><svg class="ic" style="left:1194px;top:120px" width="18" height="16" viewBox="0 0 18 16"><text x="0.5" y="13.5" font-size="15" font-weight="bold" font-family="Liberation Sans,sans-serif" fill="#333">d</text><path d="M10 7.5 H16 M10 11.5 H16" stroke="#333" stroke-width="1.8"/></svg><div class="sl " style="left:1214.4px;top:121.6px">关系</div><svg class="ic" style="left:1287px;top:63px" width="33" height="34" viewBox="0 0 33 34"><path d="M1.5 3.5 H17.5 L23.5 9.5 V32.5 H1.5 Z" fill="url(#gPaper)" stroke="#c9ced2" stroke-width="0.9"/><path d="M17.5 3.5 V9.5 H23.5 Z" fill="#dbe6ee" stroke="#c9ced2" stroke-width="0.7"/><g fill="#2b9dd4"><rect x="4.5" y="9.5" width="2" height="2"/><rect x="4.5" y="17" width="2" height="2"/><rect x="4.5" y="24.5" width="2" height="2"/></g><g stroke="#8f8f8f" stroke-width="0.9"><path d="M9 10.5 H16 M11 14 H19 M9 18 H19 M11 21.5 H19 M9 25.5 H19"/></g><rect x="21.5" y="1" width="10" height="12" rx="1.5" fill="#0f5e85"/><text x="26.5" y="11" font-size="10.5" font-weight="bold" font-family="Liberation Serif,serif" fill="#fff" text-anchor="middle">i</text></svg><div class="bl " style="left:1252px;top:106.7px;width:100px">物料清单</div><svg class="ic" style="left:1342px;top:63px" width="33" height="34" viewBox="0 0 33 34"><ellipse cx="6" cy="27" rx="3.6" ry="2.4" fill="none" stroke="#7a7a7a" stroke-width="1.9" transform="rotate(-38 6 27)"/><ellipse cx="11" cy="23" rx="3.6" ry="2.4" fill="none" stroke="#7a7a7a" stroke-width="1.9" transform="rotate(-38 11 23)"/><ellipse cx="16" cy="19" rx="3.6" ry="2.4" fill="none" stroke="#7a7a7a" stroke-width="1.9" transform="rotate(-38 16 19)"/><ellipse cx="21" cy="15" rx="3.6" ry="2.4" fill="none" stroke="#7a7a7a" stroke-width="1.9" transform="rotate(-38 21 15)"/><path d="M20 16 L25 10" stroke="#7a7a7a" stroke-width="1.8"/><rect x="22" y="1" width="10" height="12" rx="1.5" fill="#0f5e85"/><text x="27" y="11" font-size="10.5" font-weight="bold" font-family="Liberation Serif,serif" fill="#fff" text-anchor="middle">i</text></svg><div class="bl " style="left:1308px;top:106.7px;width:100px">参考查看</div><div class="bl " style="left:1308px;top:122.7px;width:100px">器</div><div id="left"><div id="leftin"></div><div class="ltab act" style="left:0;width:75px"></div><svg class="ic" style="left:10px;top:5px" width="16" height="21" viewBox="0 0 16 21"><g fill="#fff" stroke="#333" stroke-width="1.1"><path d="M3.5 5 V16 M3.5 10 H9" fill="none"/><rect x="1" y="0.8" width="4.6" height="4.6"/><rect x="1" y="7.7" width="4.6" height="4.6"/><rect x="1" y="14.6" width="4.6" height="4.6"/><rect x="9" y="7.7" width="4.6" height="4.6"/></g></svg><div class="abs" style="left:30.6px;top:7px;line-height:18px;font-size:12.4px;color:#2b2b2b">模型树</div><div class="ltab" style="left:76px;width:113px"></div><svg class="ic" style="left:84px;top:6px" width="22" height="19" viewBox="0 0 22 19"><g transform="translate(0 0) scale(1.0)"><path d="M0.5 11.5 V2 Q0.5 0.8 1.8 0.8 H5 L6.5 2.5 H11.5 V11.5 Z" fill="#f1dcaa" stroke="#cfa757" stroke-width="0.8"/><rect x="0.5" y="3.8" width="11" height="7.7" rx="0.8" fill="url(#gFold)" stroke="#cfa757" stroke-width="0.8"/></g><g transform="translate(4 3) scale(1.0)"><path d="M0.5 11.5 V2 Q0.5 0.8 1.8 0.8 H5 L6.5 2.5 H11.5 V11.5 Z" fill="#f1dcaa" stroke="#cfa757" stroke-width="0.8"/><rect x="0.5" y="3.8" width="11" height="7.7" rx="0.8" fill="url(#gFold)" stroke="#cfa757" stroke-width="0.8"/></g><g transform="translate(8 6.5) scale(1.0)"><path d="M0.5 11.5 V2 Q0.5 0.8 1.8 0.8 H5 L6.5 2.5 H11.5 V11.5 Z" fill="#f1dcaa" stroke="#cfa757" stroke-width="0.8"/><rect x="0.5" y="3.8" width="11" height="7.7" rx="0.8" fill="url(#gFold)" stroke="#cfa757" stroke-width="0.8"/></g></svg><div class="abs" style="left:107px;top:7px;line-height:18px;font-size:12.4px;color:#7a7a7a">文件夹浏览器</div><div class="ltab" style="left:189px;width:75px"></div><svg class="ic" style="left:196px;top:7px" width="19" height="17" viewBox="0 0 19 17"><g transform="translate(0 0) scale(1.45)"><path d="M0.5 11.5 V2 Q0.5 0.8 1.8 0.8 H5 L6.5 2.5 H11.5 V11.5 Z" fill="#f1dcaa" stroke="#cfa757" stroke-width="0.8"/><rect x="0.5" y="3.8" width="11" height="7.7" rx="0.8" fill="url(#gFold)" stroke="#cfa757" stroke-width="0.8"/></g><g stroke="#0d5c86" stroke-width="1.1"><path d="M8.7 7.5 V13.5 M5.7 10.5 H11.7 M6.6 8.4 L10.8 12.6 M10.8 8.4 L6.6 12.6"/></g><circle cx="8.7" cy="10.5" r="1" fill="#fff7e0"/></svg><div class="abs" style="left:219px;top:7px;line-height:18px;font-size:12.4px;color:#7a7a7a">收藏夹</div><div class="abs" style="left:27.5px;top:36.599999999999994px;line-height:17px;font-size:12.4px;font-weight:bold;color:#333">模型树</div><svg class="ic" style="left:190px;top:33px" width="20" height="22" viewBox="0 0 20 22"><path d="M1 4 Q1 1.5 4 1.5 H11 V5.5 H8.5 V4.5 H4 Q2.5 4.5 1 6 Z" fill="#8a8a8a" stroke="#555" stroke-width="0.6"/><rect x="5" y="5" width="3.4" height="15.5" rx="1" fill="#e8c98a" stroke="#a57c2e" stroke-width="0.8"/><rect x="14.2" y="1.5" width="1.6" height="10" fill="#8a8a8a"/><rect x="13" y="11.5" width="4" height="9" rx="1" fill="#e3b85a" stroke="#a57c2e" stroke-width="0.8"/></svg><div class="dd" style="left:216.5px;top:41px;border-left-width:3.5px;border-right-width:3.5px;border-top-width:3.5px"></div><svg class="ic" style="left:234px;top:33px" width="17" height="22" viewBox="0 0 17 22"><path d="M0.5 0.5 H11 L15.5 5 V20.5 H0.5 Z" fill="url(#gPaper)" stroke="#9aa2a8" stroke-width="0.9"/><path d="M11 0.5 V5 H15.5" fill="none" stroke="#9aa2a8" stroke-width="0.8"/><g fill="none" stroke="#555" stroke-width="0.8"><circle cx="4.5" cy="8" r="1.2"/><circle cx="4.5" cy="12" r="1.2"/><circle cx="4.5" cy="16" r="1.2"/><path d="M7.5 8 H13 M7.5 12 H13 M7.5 16 H13"/></g></svg><div class="dd" style="left:258.5px;top:41px;border-left-width:3.5px;border-right-width:3.5px;border-top-width:3.5px"></div><svg class="ic" style="left:278px;top:33px" width="22" height="23" viewBox="0 0 22 23"><g fill="none" stroke="#c9c9c9" stroke-width="1"><rect x="1" y="1.5" width="4" height="4"/><rect x="1" y="9" width="4" height="4"/><rect x="1" y="16.5" width="4" height="4"/><path d="M7.5 1.5 H11 V20 M13.5 1.5 H17 V14 M19 1.5 H20.5 V10 M5 11 H9"/></g><ellipse cx="15.5" cy="16.5" rx="4.8" ry="2.7" fill="#fff" stroke="#9a9a9a" stroke-width="1.6"/><path d="M10.5 10.5 L21 21" stroke="#444" stroke-width="0.9"/></svg><div class="abs" style="left:12px;top:58px;width:196px;height:25px;background:#fff;border:1px solid #c3c4c6"></div><svg class="ic" style="left:193px;top:65px" width="10" height="10" viewBox="0 0 10 10"><path d="M1.5 1.5 L8.5 8.5 M8.5 1.5 L1.5 8.5" stroke="#8f8f8f" stroke-width="1.2"/></svg><div class="dd" style="left:213.5px;top:68px;border-left-width:3.5px;border-right-width:3.5px;border-top-width:3.5px"></div><svg class="ic" style="left:229px;top:61px" width="19" height="17" viewBox="0 0 19 17"><g transform="scale(1.0)"><path d="M3.5 1 H7 L8 5 V15 H1 V9 Z" fill="url(#gBino)"/><path d="M14.5 1 H11 L10 5 V15 H17 V9 Z" fill="url(#gBino)"/><rect x="7.5" y="4" width="3" height="5" fill="#444"/><rect x="1" y="13.5" width="7" height="2" fill="#111"/><rect x="10" y="13.5" width="7" height="2" fill="#111"/></g></svg><svg class="ic" style="left:257px;top:62px" width="18" height="16" viewBox="0 0 18 16"><path d="M1 1 H17 L10.5 8 V14.5 H7.5 V8 Z" fill="#f4f4f4" stroke="#c4c4c4" stroke-width="1"/></svg><svg class="ic" style="left:283px;top:63px" width="14" height="14" viewBox="0 0 14 14"><path d="M7 1.5 V12.5 M1.5 7 H12.5" stroke="#8a8a8a" stroke-width="2.4"/></svg><div id="tree"><svg class="ic" style="left:5px;top:5px" width="16" height="16" viewBox="0 0 16 16"><path d="M1 4 L3.5 1.5 H14.5 V11.5 L12 14.5 H1 Z" fill="#f9e4b5" stroke="#c9952f" stroke-width="0.9"/><path d="M1 4 H12 V14.5 M12 4 L14.5 1.5" fill="none" stroke="#c9952f" stroke-width="0.9"/><rect x="4.5" y="3.5" width="7" height="7.5" fill="#a9e2f5" stroke="#2a8fbd" stroke-width="0.9"/></svg><div class="tr" style="left:25px;top:1px">CONDENSER_HEAT_EXCHANGER.ASM</div><svg class="ic" style="left:25px;top:31px" width="14" height="13" viewBox="0 0 14 13"><g transform="translate(0 0) scale(1.0)" stroke="#2a8fbd" stroke-width="1.00" stroke-linejoin="round"><path d="M0.5 3.5 L3.5 0.5 H12.5 L9.5 3.5 Z" fill="#e6f8fd"/><path d="M9.5 3.5 L12.5 0.5 V8.5 L9.5 11.5 Z" fill="#7fcbe6"/><rect x="0.5" y="3.5" width="9" height="8" fill="#c3ebf8"/></g></svg><div class="tr" style="left:45px;top:25px">F.PRT</div><svg class="ic" style="left:25px;top:55px" width="14" height="13" viewBox="0 0 14 13"><g transform="translate(0 0) scale(1.0)" stroke="#2a8fbd" stroke-width="1.00" stroke-linejoin="round"><path d="M0.5 3.5 L3.5 0.5 H12.5 L9.5 3.5 Z" fill="#e6f8fd"/><path d="M9.5 3.5 L12.5 0.5 V8.5 L9.5 11.5 Z" fill="#7fcbe6"/><rect x="0.5" y="3.5" width="9" height="8" fill="#c3ebf8"/></g></svg><div class="tr" style="left:45px;top:49px">D.PRT</div><svg class="ic" style="left:25px;top:79px" width="14" height="13" viewBox="0 0 14 13"><g transform="translate(0 0) scale(1.0)" stroke="#2a8fbd" stroke-width="1.00" stroke-linejoin="round"><path d="M0.5 3.5 L3.5 0.5 H12.5 L9.5 3.5 Z" fill="#e6f8fd"/><path d="M9.5 3.5 L12.5 0.5 V8.5 L9.5 11.5 Z" fill="#7fcbe6"/><rect x="0.5" y="3.5" width="9" height="8" fill="#c3ebf8"/></g></svg><div class="tr" style="left:45px;top:73px">H.PRT</div><svg class="ic" style="left:25px;top:103px" width="14" height="13" viewBox="0 0 14 13"><g transform="translate(0 0) scale(1.0)" stroke="#2a8fbd" stroke-width="1.00" stroke-linejoin="round"><path d="M0.5 3.5 L3.5 0.5 H12.5 L9.5 3.5 Z" fill="#e6f8fd"/><path d="M9.5 3.5 L12.5 0.5 V8.5 L9.5 11.5 Z" fill="#7fcbe6"/><rect x="0.5" y="3.5" width="9" height="8" fill="#c3ebf8"/></g></svg><div class="tr" style="left:45px;top:97px">D.PRT</div><div class="tri" style="left:10px;top:128.5px"></div><svg class="ic" style="left:24px;top:126px" width="15" height="15" viewBox="0 0 15 15"><rect x="0.7" y="0.7" width="13.2" height="13.2" rx="1.5" fill="#fff" stroke="#8a8a8a" stroke-width="1"/><rect x="3.2" y="3.2" width="2" height="2" fill="#5b3a9b"/><rect x="3.2" y="8.4" width="2" height="2" fill="#5b3a9b"/><rect x="8.4" y="3.2" width="2" height="2" fill="#5b3a9b"/><rect x="8.4" y="8.4" width="2" height="2" fill="#5b3a9b"/></svg><div class="tr" style="left:45px;top:121px">阵列 2 / C.PRT</div><div class="tri" style="left:10px;top:152.5px"></div><svg class="ic" style="left:24px;top:150px" width="15" height="15" viewBox="0 0 15 15"><rect x="0.7" y="0.7" width="13.2" height="13.2" rx="1.5" fill="#fff" stroke="#8a8a8a" stroke-width="1"/><rect x="3.2" y="3.2" width="2" height="2" fill="#5b3a9b"/><rect x="3.2" y="8.4" width="2" height="2" fill="#5b3a9b"/><rect x="8.4" y="3.2" width="2" height="2" fill="#5b3a9b"/><rect x="8.4" y="8.4" width="2" height="2" fill="#5b3a9b"/></svg><div class="tr" style="left:45px;top:145px">阵列 1 / C.PRT</div><div class="tri" style="left:10px;top:176.5px"></div><svg class="ic" style="left:24px;top:174px" width="15" height="15" viewBox="0 0 15 15"><rect x="0.7" y="0.7" width="13.2" height="13.2" rx="1.5" fill="#fff" stroke="#8a8a8a" stroke-width="1"/><rect x="3.2" y="3.2" width="2" height="2" fill="#5b3a9b"/><rect x="3.2" y="8.4" width="2" height="2" fill="#5b3a9b"/><rect x="8.4" y="3.2" width="2" height="2" fill="#5b3a9b"/><rect x="8.4" y="8.4" width="2" height="2" fill="#5b3a9b"/></svg><div class="tr" style="left:45px;top:169px">阵列 3 / B.PRT</div><div class="tri" style="left:10px;top:200.5px"></div><svg class="ic" style="left:24px;top:198px" width="15" height="15" viewBox="0 0 15 15"><rect x="0.7" y="0.7" width="13.2" height="13.2" rx="1.5" fill="#fff" stroke="#8a8a8a" stroke-width="1"/><rect x="3.2" y="3.2" width="2" height="2" fill="#5b3a9b"/><rect x="3.2" y="8.4" width="2" height="2" fill="#5b3a9b"/><rect x="8.4" y="3.2" width="2" height="2" fill="#5b3a9b"/><rect x="8.4" y="8.4" width="2" height="2" fill="#5b3a9b"/></svg><div class="tr" style="left:45px;top:193px">阵列 4 / B.PRT</div><svg class="ic" style="left:25px;top:223px" width="14" height="13" viewBox="0 0 14 13"><g transform="translate(0 0) scale(1.0)" stroke="#2a8fbd" stroke-width="1.00" stroke-linejoin="round"><path d="M0.5 3.5 L3.5 0.5 H12.5 L9.5 3.5 Z" fill="#e6f8fd"/><path d="M9.5 3.5 L12.5 0.5 V8.5 L9.5 11.5 Z" fill="#7fcbe6"/><rect x="0.5" y="3.5" width="9" height="8" fill="#c3ebf8"/></g></svg><div class="abs" style="left:45px;top:222px;width:5px;height:7px;border:1px solid #333"></div><div class="abs" style="left:47px;top:224px;width:1px;height:2px;background:#333"></div><div class="tr" style="left:52px;top:217px">PRT0010.PRT</div><svg class="ic" style="left:25px;top:247px" width="14" height="13" viewBox="0 0 14 13"><g transform="translate(0 0) scale(1.0)" stroke="#2a8fbd" stroke-width="1.00" stroke-linejoin="round"><path d="M0.5 3.5 L3.5 0.5 H12.5 L9.5 3.5 Z" fill="#e6f8fd"/><path d="M9.5 3.5 L12.5 0.5 V8.5 L9.5 11.5 Z" fill="#7fcbe6"/><rect x="0.5" y="3.5" width="9" height="8" fill="#c3ebf8"/></g></svg><div class="abs" style="left:45px;top:246px;width:5px;height:7px;border:1px solid #333"></div><div class="abs" style="left:47px;top:248px;width:1px;height:2px;background:#333"></div><div class="tr" style="left:52px;top:241px">PRT0010.PRT</div><div class="tri" style="left:10px;top:272.5px"></div><svg class="ic" style="left:24px;top:270px" width="15" height="15" viewBox="0 0 15 15"><rect x="0.7" y="0.7" width="13.2" height="13.2" rx="1.5" fill="#fff" stroke="#8a8a8a" stroke-width="1"/><rect x="3.2" y="3.2" width="2" height="2" fill="#5b3a9b"/><rect x="3.2" y="8.4" width="2" height="2" fill="#5b3a9b"/><rect x="8.4" y="3.2" width="2" height="2" fill="#5b3a9b"/><rect x="8.4" y="8.4" width="2" height="2" fill="#5b3a9b"/></svg><div class="tr" style="left:45px;top:265px">阵列 5 / G.PRT</div></div></div><div id="sash"></div>
<div id="gfx"><svg class="abs" style="left:0;top:0" width="1508" height="823" viewBox="315 175 1508 823"><defs><linearGradient id="ts0" gradientUnits="userSpaceOnUse" x1="1093.7" y1="408.0" x2="1087.0" y2="429.6"><stop offset="0" stop-color="#000" stop-opacity="0.1"/><stop offset="0.35" stop-color="#fff" stop-opacity="0.13"/><stop offset="0.6" stop-color="#fff" stop-opacity="0"/><stop offset="1" stop-color="#000" stop-opacity="0.27"/></linearGradient><linearGradient id="ts1" gradientUnits="userSpaceOnUse" x1="1077.4" y1="450.6" x2="1070.5" y2="472.6"><stop offset="0" stop-color="#000" stop-opacity="0.1"/><stop offset="0.35" stop-color="#fff" stop-opacity="0.13"/><stop offset="0.6" stop-color="#fff" stop-opacity="0"/><stop offset="1" stop-color="#000" stop-opacity="0.27"/></linearGradient><linearGradient id="ts2" gradientUnits="userSpaceOnUse" x1="1061.1" y1="493.2" x2="1054.1" y2="515.6"><stop offset="0" stop-color="#000" stop-opacity="0.1"/><stop offset="0.35" stop-color="#fff" stop-opacity="0.13"/><stop offset="0.6" stop-color="#fff" stop-opacity="0"/><stop offset="1" stop-color="#000" stop-opacity="0.27"/></linearGradient><linearGradient id="ts3" gradientUnits="userSpaceOnUse" x1="1044.8" y1="535.8" x2="1037.7" y2="558.6"><stop offset="0" stop-color="#000" stop-opacity="0.1"/><stop offset="0.35" stop-color="#fff" stop-opacity="0.13"/><stop offset="0.6" stop-color="#fff" stop-opacity="0"/><stop offset="1" stop-color="#000" stop-opacity="0.27"/></linearGradient><linearGradient id="ts4" gradientUnits="userSpaceOnUse" x1="1028.5" y1="578.3" x2="1021.2" y2="601.6"><stop offset="0" stop-color="#000" stop-opacity="0.1"/><stop offset="0.35" stop-color="#fff" stop-opacity="0.13"/><stop offset="0.6" stop-color="#fff" stop-opacity="0"/><stop offset="1" stop-color="#000" stop-opacity="0.27"/></linearGradient><linearGradient id="ts5" gradientUnits="userSpaceOnUse" x1="1012.1" y1="620.9" x2="1004.8" y2="644.6"><stop offset="0" stop-color="#000" stop-opacity="0.1"/><stop offset="0.35" stop-color="#fff" stop-opacity="0.13"/><stop offset="0.6" stop-color="#fff" stop-opacity="0"/><stop offset="1" stop-color="#000" stop-opacity="0.27"/></linearGradient><linearGradient id="ts6" gradientUnits="userSpaceOnUse" x1="995.8" y1="663.5" x2="988.3" y2="687.6"><stop offset="0" stop-color="#000" stop-opacity="0.1"/><stop offset="0.35" stop-color="#fff" stop-opacity="0.13"/><stop offset="0.6" stop-color="#fff" stop-opacity="0"/><stop offset="1" stop-color="#000" stop-opacity="0.27"/></linearGradient><linearGradient id="ts7" gradientUnits="userSpaceOnUse" x1="979.5" y1="706.1" x2="971.9" y2="730.6"><stop offset="0" stop-color="#000" stop-opacity="0.1"/><stop offset="0.35" stop-color="#fff" stop-opacity="0.13"/><stop offset="0.6" stop-color="#fff" stop-opacity="0"/><stop offset="1" stop-color="#000" stop-opacity="0.27"/></linearGradient><linearGradient id="ts8" gradientUnits="userSpaceOnUse" x1="958.8" y1="760.2" x2="950.7" y2="786.2"><stop offset="0" stop-color="#000" stop-opacity="0.1"/><stop offset="0.35" stop-color="#fff" stop-opacity="0.13"/><stop offset="0.6" stop-color="#fff" stop-opacity="0"/><stop offset="1" stop-color="#000" stop-opacity="0.27"/></linearGradient></defs><path d="M560.4 696.8 L607.0 709.8 L742.0 365.0 L690.0 349.0Z" fill="#10559f"/><path d="M1259.4 912.7 L1303.7 926.4 L1443.0 570.0 L1372.0 548.0Z" fill="#10559f"/><path d="M767.5 318.5 L738.2 309.4 C701.9 298.1 682.6 351.8 718.9 363.0 L785.7 383.8" fill="none" stroke="#934229" stroke-width="23.5" stroke-linecap="round" stroke-linejoin="round" transform="translate(0 0)" /><path d="M767.5 318.5 L738.2 309.4 C701.9 298.1 682.6 351.8 718.9 363.0 L785.7 383.8" fill="none" stroke="#a85036" stroke-width="21.2" stroke-linecap="round" stroke-linejoin="round" transform="translate(-0.5 -0.9)" /><path d="M767.5 318.5 L738.2 309.4 C701.9 298.1 682.6 351.8 718.9 363.0 L785.7 383.8" fill="none" stroke="#b85d40" stroke-width="18.3" stroke-linecap="round" stroke-linejoin="round" transform="translate(-0.9 -1.7)" /><path d="M767.5 318.5 L738.2 309.4 C701.9 298.1 682.6 351.8 718.9 363.0 L785.7 383.8" fill="none" stroke="#c4684a" stroke-width="14.1" stroke-linecap="round" stroke-linejoin="round" transform="translate(-1.3 -2.6)" /><path d="M767.5 318.5 L738.2 309.4 C701.9 298.1 682.6 351.8 718.9 363.0 L785.7 383.8" fill="none" stroke="#cf7455" stroke-width="9.4" stroke-linecap="round" stroke-linejoin="round" transform="translate(-1.7 -3.6)" /><path d="M767.5 318.5 L738.2 309.4 C701.9 298.1 682.6 351.8 718.9 363.0 L785.7 383.8" fill="none" stroke="#da8465" stroke-width="5.2" stroke-linecap="round" stroke-linejoin="round" transform="translate(-2.0 -4.4)" /><path d="M767.5 318.5 L738.2 309.4 C701.9 298.1 682.6 351.8 718.9 363.0 L785.7 383.8" fill="none" stroke="#e89878" stroke-width="2.1" stroke-linecap="round" stroke-linejoin="round" transform="translate(-2.2 -5.0)" /><path d="M713.2 361.3 L785.7 383.8" stroke="#4a1a0c" stroke-opacity="0.28" stroke-width="23.5" fill="none"/><path d="M752.1 361.5 L721.6 352.1 C685.3 340.8 666.0 394.4 702.3 405.7 L769.1 426.5" fill="none" stroke="#934229" stroke-width="23.5" stroke-linecap="round" stroke-linejoin="round" transform="translate(0 0)" /><path d="M752.1 361.5 L721.6 352.1 C685.3 340.8 666.0 394.4 702.3 405.7 L769.1 426.5" fill="none" stroke="#a85036" stroke-width="21.2" stroke-linecap="round" stroke-linejoin="round" transform="translate(-0.5 -0.9)" /><path d="M752.1 361.5 L721.6 352.1 C685.3 340.8 666.0 394.4 702.3 405.7 L769.1 426.5" fill="none" stroke="#b85d40" stroke-width="18.3" stroke-linecap="round" stroke-linejoin="round" transform="translate(-0.9 -1.7)" /><path d="M752.1 361.5 L721.6 352.1 C685.3 340.8 666.0 394.4 702.3 405.7 L769.1 426.5" fill="none" stroke="#c4684a" stroke-width="14.1" stroke-linecap="round" stroke-linejoin="round" transform="translate(-1.3 -2.6)" /><path d="M752.1 361.5 L721.6 352.1 C685.3 340.8 666.0 394.4 702.3 405.7 L769.1 426.5" fill="none" stroke="#cf7455" stroke-width="9.4" stroke-linecap="round" stroke-linejoin="round" transform="translate(-1.7 -3.6)" /><path d="M752.1 361.5 L721.6 352.1 C685.3 340.8 666.0 394.4 702.3 405.7 L769.1 426.5" fill="none" stroke="#da8465" stroke-width="5.2" stroke-linecap="round" stroke-linejoin="round" transform="translate(-2.0 -4.4)" /><path d="M752.1 361.5 L721.6 352.1 C685.3 340.8 666.0 394.4 702.3 405.7 L769.1 426.5" fill="none" stroke="#e89878" stroke-width="2.1" stroke-linecap="round" stroke-linejoin="round" transform="translate(-2.2 -5.0)" /><path d="M696.6 403.9 L769.1 426.5" stroke="#4a1a0c" stroke-opacity="0.28" stroke-width="23.5" fill="none"/><path d="M736.6 404.6 L705.0 394.7 C668.7 383.5 649.4 437.1 685.7 448.4 L752.5 469.1" fill="none" stroke="#934229" stroke-width="23.5" stroke-linecap="round" stroke-linejoin="round" transform="translate(0 0)" /><path d="M736.6 404.6 L705.0 394.7 C668.7 383.5 649.4 437.1 685.7 448.4 L752.5 469.1" fill="none" stroke="#a85036" stroke-width="21.2" stroke-linecap="round" stroke-linejoin="round" transform="translate(-0.5 -0.9)" /><path d="M736.6 404.6 L705.0 394.7 C668.7 383.5 649.4 437.1 685.7 448.4 L752.5 469.1" fill="none" stroke="#b85d40" stroke-width="18.3" stroke-linecap="round" stroke-linejoin="round" transform="translate(-0.9 -1.7)" /><path d="M736.6 404.6 L705.0 394.7 C668.7 383.5 649.4 437.1 685.7 448.4 L752.5 469.1" fill="none" stroke="#c4684a" stroke-width="14.1" stroke-linecap="round" stroke-linejoin="round" transform="translate(-1.3 -2.6)" /><path d="M736.6 404.6 L705.0 394.7 C668.7 383.5 649.4 437.1 685.7 448.4 L752.5 469.1" fill="none" stroke="#cf7455" stroke-width="9.4" stroke-linecap="round" stroke-linejoin="round" transform="translate(-1.7 -3.6)" /><path d="M736.6 404.6 L705.0 394.7 C668.7 383.5 649.4 437.1 685.7 448.4 L752.5 469.1" fill="none" stroke="#da8465" stroke-width="5.2" stroke-linecap="round" stroke-linejoin="round" transform="translate(-2.0 -4.4)" /><path d="M736.6 404.6 L705.0 394.7 C668.7 383.5 649.4 437.1 685.7 448.4 L752.5 469.1" fill="none" stroke="#e89878" stroke-width="2.1" stroke-linecap="round" stroke-linejoin="round" transform="translate(-2.2 -5.0)" /><path d="M680.0 446.6 L752.5 469.1" stroke="#4a1a0c" stroke-opacity="0.28" stroke-width="23.5" fill="none"/><path d="M721.1 447.6 L688.4 437.4 C652.1 426.1 632.8 479.8 669.1 491.0 L735.9 511.8" fill="none" stroke="#934229" stroke-width="23.5" stroke-linecap="round" stroke-linejoin="round" transform="translate(0 0)" /><path d="M721.1 447.6 L688.4 437.4 C652.1 426.1 632.8 479.8 669.1 491.0 L735.9 511.8" fill="none" stroke="#a85036" stroke-width="21.2" stroke-linecap="round" stroke-linejoin="round" transform="translate(-0.5 -0.9)" /><path d="M721.1 447.6 L688.4 437.4 C652.1 426.1 632.8 479.8 669.1 491.0 L735.9 511.8" fill="none" stroke="#b85d40" stroke-width="18.3" stroke-linecap="round" stroke-linejoin="round" transform="translate(-0.9 -1.7)" /><path d="M721.1 447.6 L688.4 437.4 C652.1 426.1 632.8 479.8 669.1 491.0 L735.9 511.8" fill="none" stroke="#c4684a" stroke-width="14.1" stroke-linecap="round" stroke-linejoin="round" transform="translate(-1.3 -2.6)" /><path d="M721.1 447.6 L688.4 437.4 C652.1 426.1 632.8 479.8 669.1 491.0 L735.9 511.8" fill="none" stroke="#cf7455" stroke-width="9.4" stroke-linecap="round" stroke-linejoin="round" transform="translate(-1.7 -3.6)" /><path d="M721.1 447.6 L688.4 437.4 C652.1 426.1 632.8 479.8 669.1 491.0 L735.9 511.8" fill="none" stroke="#da8465" stroke-width="5.2" stroke-linecap="round" stroke-linejoin="round" transform="translate(-2.0 -4.4)" /><path d="M721.1 447.6 L688.4 437.4 C652.1 426.1 632.8 479.8 669.1 491.0 L735.9 511.8" fill="none" stroke="#e89878" stroke-width="2.1" stroke-linecap="round" stroke-linejoin="round" transform="translate(-2.2 -5.0)" /><path d="M663.4 489.3 L735.9 511.8" stroke="#4a1a0c" stroke-opacity="0.28" stroke-width="23.5" fill="none"/><path d="M705.7 490.6 L671.8 480.1 C635.5 468.8 616.2 522.4 652.5 533.7 L719.3 554.5" fill="none" stroke="#934229" stroke-width="23.5" stroke-linecap="round" stroke-linejoin="round" transform="translate(0 0)" /><path d="M705.7 490.6 L671.8 480.1 C635.5 468.8 616.2 522.4 652.5 533.7 L719.3 554.5" fill="none" stroke="#a85036" stroke-width="21.2" stroke-linecap="round" stroke-linejoin="round" transform="translate(-0.5 -0.9)" /><path d="M705.7 490.6 L671.8 480.1 C635.5 468.8 616.2 522.4 652.5 533.7 L719.3 554.5" fill="none" stroke="#b85d40" stroke-width="18.3" stroke-linecap="round" stroke-linejoin="round" transform="translate(-0.9 -1.7)" /><path d="M705.7 490.6 L671.8 480.1 C635.5 468.8 616.2 522.4 652.5 533.7 L719.3 554.5" fill="none" stroke="#c4684a" stroke-width="14.1" stroke-linecap="round" stroke-linejoin="round" transform="translate(-1.3 -2.6)" /><path d="M705.7 490.6 L671.8 480.1 C635.5 468.8 616.2 522.4 652.5 533.7 L719.3 554.5" fill="none" stroke="#cf7455" stroke-width="9.4" stroke-linecap="round" stroke-linejoin="round" transform="translate(-1.7 -3.6)" /><path d="M705.7 490.6 L671.8 480.1 C635.5 468.8 616.2 522.4 652.5 533.7 L719.3 554.5" fill="none" stroke="#da8465" stroke-width="5.2" stroke-linecap="round" stroke-linejoin="round" transform="translate(-2.0 -4.4)" /><path d="M705.7 490.6 L671.8 480.1 C635.5 468.8 616.2 522.4 652.5 533.7 L719.3 554.5" fill="none" stroke="#e89878" stroke-width="2.1" stroke-linecap="round" stroke-linejoin="round" transform="translate(-2.2 -5.0)" /><path d="M646.8 531.9 L719.3 554.5" stroke="#4a1a0c" stroke-opacity="0.28" stroke-width="23.5" fill="none"/><path d="M690.2 533.6 L655.2 522.7 C618.9 511.5 599.6 565.1 635.9 576.4 L702.8 597.2" fill="none" stroke="#934229" stroke-width="23.5" stroke-linecap="round" stroke-linejoin="round" transform="translate(0 0)" /><path d="M690.2 533.6 L655.2 522.7 C618.9 511.5 599.6 565.1 635.9 576.4 L702.8 597.2" fill="none" stroke="#a85036" stroke-width="21.2" stroke-linecap="round" stroke-linejoin="round" transform="translate(-0.5 -0.9)" /><path d="M690.2 533.6 L655.2 522.7 C618.9 511.5 599.6 565.1 635.9 576.4 L702.8 597.2" fill="none" stroke="#b85d40" stroke-width="18.3" stroke-linecap="round" stroke-linejoin="round" transform="translate(-0.9 -1.7)" /><path d="M690.2 533.6 L655.2 522.7 C618.9 511.5 599.6 565.1 635.9 576.4 L702.8 597.2" fill="none" stroke="#c4684a" stroke-width="14.1" stroke-linecap="round" stroke-linejoin="round" transform="translate(-1.3 -2.6)" /><path d="M690.2 533.6 L655.2 522.7 C618.9 511.5 599.6 565.1 635.9 576.4 L702.8 597.2" fill="none" stroke="#cf7455" stroke-width="9.4" stroke-linecap="round" stroke-linejoin="round" transform="translate(-1.7 -3.6)" /><path d="M690.2 533.6 L655.2 522.7 C618.9 511.5 599.6 565.1 635.9 576.4 L702.8 597.2" fill="none" stroke="#da8465" stroke-width="5.2" stroke-linecap="round" stroke-linejoin="round" transform="translate(-2.0 -4.4)" /><path d="M690.2 533.6 L655.2 522.7 C618.9 511.5 599.6 565.1 635.9 576.4 L702.8 597.2" fill="none" stroke="#e89878" stroke-width="2.1" stroke-linecap="round" stroke-linejoin="round" transform="translate(-2.2 -5.0)" /><path d="M630.2 574.6 L702.8 597.2" stroke="#4a1a0c" stroke-opacity="0.28" stroke-width="23.5" fill="none"/><path d="M674.7 576.7 L638.6 565.4 C602.3 554.1 583.0 607.8 619.3 619.1 L686.2 639.8" fill="none" stroke="#934229" stroke-width="23.5" stroke-linecap="round" stroke-linejoin="round" transform="translate(0 0)" /><path d="M674.7 576.7 L638.6 565.4 C602.3 554.1 583.0 607.8 619.3 619.1 L686.2 639.8" fill="none" stroke="#a85036" stroke-width="21.2" stroke-linecap="round" stroke-linejoin="round" transform="translate(-0.5 -0.9)" /><path d="M674.7 576.7 L638.6 565.4 C602.3 554.1 583.0 607.8 619.3 619.1 L686.2 639.8" fill="none" stroke="#b85d40" stroke-width="18.3" stroke-linecap="round" stroke-linejoin="round" transform="translate(-0.9 -1.7)" /><path d="M674.7 576.7 L638.6 565.4 C602.3 554.1 583.0 607.8 619.3 619.1 L686.2 639.8" fill="none" stroke="#c4684a" stroke-width="14.1" stroke-linecap="round" stroke-linejoin="round" transform="translate(-1.3 -2.6)" /><path d="M674.7 576.7 L638.6 565.4 C602.3 554.1 583.0 607.8 619.3 619.1 L686.2 639.8" fill="none" stroke="#cf7455" stroke-width="9.4" stroke-linecap="round" stroke-linejoin="round" transform="translate(-1.7 -3.6)" /><path d="M674.7 576.7 L638.6 565.4 C602.3 554.1 583.0 607.8 619.3 619.1 L686.2 639.8" fill="none" stroke="#da8465" stroke-width="5.2" stroke-linecap="round" stroke-linejoin="round" transform="translate(-2.0 -4.4)" /><path d="M674.7 576.7 L638.6 565.4 C602.3 554.1 583.0 607.8 619.3 619.1 L686.2 639.8" fill="none" stroke="#e89878" stroke-width="2.1" stroke-linecap="round" stroke-linejoin="round" transform="translate(-2.2 -5.0)" /><path d="M613.6 617.3 L686.2 639.8" stroke="#4a1a0c" stroke-opacity="0.28" stroke-width="23.5" fill="none"/><path d="M659.2 619.7 L622.0 608.1 C584.7 596.5 564.8 651.6 602.2 663.2 L669.0 684.0" fill="none" stroke="#934229" stroke-width="23.5" stroke-linecap="round" stroke-linejoin="round" transform="translate(0 0)" /><path d="M659.2 619.7 L622.0 608.1 C584.7 596.5 564.8 651.6 602.2 663.2 L669.0 684.0" fill="none" stroke="#a85036" stroke-width="21.2" stroke-linecap="round" stroke-linejoin="round" transform="translate(-0.5 -0.9)" /><path d="M659.2 619.7 L622.0 608.1 C584.7 596.5 564.8 651.6 602.2 663.2 L669.0 684.0" fill="none" stroke="#b85d40" stroke-width="18.3" stroke-linecap="round" stroke-linejoin="round" transform="translate(-0.9 -1.7)" /><path d="M659.2 619.7 L622.0 608.1 C584.7 596.5 564.8 651.6 602.2 663.2 L669.0 684.0" fill="none" stroke="#c4684a" stroke-width="14.1" stroke-linecap="round" stroke-linejoin="round" transform="translate(-1.3 -2.6)" /><path d="M659.2 619.7 L622.0 608.1 C584.7 596.5 564.8 651.6 602.2 663.2 L669.0 684.0" fill="none" stroke="#cf7455" stroke-width="9.4" stroke-linecap="round" stroke-linejoin="round" transform="translate(-1.7 -3.6)" /><path d="M659.2 619.7 L622.0 608.1 C584.7 596.5 564.8 651.6 602.2 663.2 L669.0 684.0" fill="none" stroke="#da8465" stroke-width="5.2" stroke-linecap="round" stroke-linejoin="round" transform="translate(-2.0 -4.4)" /><path d="M659.2 619.7 L622.0 608.1 C584.7 596.5 564.8 651.6 602.2 663.2 L669.0 684.0" fill="none" stroke="#e89878" stroke-width="2.1" stroke-linecap="round" stroke-linejoin="round" transform="translate(-2.2 -5.0)" /><path d="M760.3 316.3 L1407.0 517.2 L1264.0 869.6 L632.4 672.6Z" fill="#0b3869"/><path d="M744.6 323.2 L753.4 326.0 L745.7 347.5 L736.9 344.8ZM729.1 366.5 L737.9 369.2 L730.3 390.3 L721.5 387.6ZM713.6 409.7 L722.4 412.4 L715.0 433.2 L706.2 430.4ZM698.1 452.9 L706.9 455.7 L699.6 476.0 L690.9 473.3ZM682.6 496.2 L691.4 498.9 L684.2 518.8 L675.5 516.1ZM667.1 539.4 L675.9 542.1 L668.9 561.6 L660.2 558.9ZM651.7 582.7 L660.3 585.4 L653.5 604.4 L644.8 601.7ZM636.2 625.9 L644.8 628.6 L634.0 658.9 L625.3 656.2Z" fill="#0b3869"/><path d="M772.0 287.0 L768.8 318.9 L761.0 316.5ZM619.0 713.0 L641.8 675.6 L633.0 672.8ZM792.6 293.4 L789.3 325.3 L781.5 322.9ZM639.0 719.2 L661.9 681.9 L653.1 679.1ZM813.2 299.8 L809.9 331.7 L802.1 329.3ZM659.1 725.5 L682.0 688.1 L673.1 685.4ZM833.8 306.2 L830.4 338.1 L822.6 335.6ZM679.1 731.8 L702.1 694.4 L693.2 691.6ZM854.4 312.6 L851.0 344.5 L843.2 342.0ZM699.1 738.0 L722.2 700.6 L713.3 697.9ZM875.0 319.0 L871.6 350.9 L863.8 348.4ZM719.1 744.2 L742.2 706.9 L733.4 704.2ZM895.6 325.4 L892.1 357.2 L884.3 354.8ZM739.2 750.5 L762.3 713.2 L753.5 710.4ZM916.2 331.8 L912.7 363.6 L904.9 361.2ZM759.2 756.8 L782.4 719.4 L773.6 716.7ZM936.8 338.2 L933.3 370.0 L925.4 367.6ZM779.2 763.0 L802.5 725.7 L793.6 722.9ZM957.4 344.6 L953.8 376.4 L946.0 374.0ZM799.3 769.2 L822.6 732.0 L813.7 729.2ZM978.0 351.0 L974.4 382.8 L966.6 380.4ZM819.3 775.5 L842.7 738.2 L833.8 735.5ZM998.6 357.4 L994.9 389.2 L987.1 386.8ZM839.3 781.8 L862.7 744.5 L853.9 741.7ZM1019.2 363.8 L1015.5 395.6 L1007.7 393.2ZM859.4 788.0 L882.8 750.8 L874.0 748.0ZM1039.8 370.2 L1036.1 402.0 L1028.2 399.5ZM879.4 794.2 L902.9 757.0 L894.1 754.3ZM1060.4 376.6 L1056.6 408.4 L1048.8 405.9ZM899.4 800.5 L923.0 763.3 L914.2 760.5ZM1081.0 383.0 L1077.2 414.8 L1069.4 412.3ZM919.5 806.8 L943.1 769.5 L934.2 766.8ZM1101.6 389.4 L1097.7 421.1 L1089.9 418.7ZM939.5 813.0 L963.2 775.8 L954.3 773.1ZM1122.2 395.8 L1118.3 427.5 L1110.5 425.1ZM959.5 819.2 L983.2 782.1 L974.4 779.3ZM1142.8 402.2 L1138.9 433.9 L1131.0 431.5ZM979.5 825.5 L1003.3 788.3 L994.5 785.6ZM1163.4 408.6 L1159.4 440.3 L1151.6 437.9ZM999.6 831.8 L1023.4 794.6 L1014.6 791.8ZM1184.0 415.0 L1180.0 446.7 L1172.2 444.3ZM1019.6 838.0 L1043.5 800.9 L1034.7 798.1ZM1204.6 421.4 L1200.5 453.1 L1192.7 450.7ZM1039.6 844.2 L1063.6 807.1 L1054.7 804.4ZM1225.2 427.8 L1221.1 459.5 L1213.3 457.0ZM1059.7 850.5 L1083.7 813.4 L1074.8 810.6ZM1245.8 434.2 L1241.7 465.9 L1233.8 463.4ZM1079.7 856.8 L1103.7 819.7 L1094.9 816.9ZM1266.4 440.6 L1262.2 472.3 L1254.4 469.8ZM1099.7 863.0 L1123.8 825.9 L1115.0 823.2ZM1287.0 447.0 L1282.8 478.6 L1275.0 476.2ZM1119.8 869.2 L1143.9 832.2 L1135.1 829.4ZM1307.6 453.4 L1303.3 485.0 L1295.5 482.6ZM1139.8 875.5 L1164.0 838.5 L1155.2 835.7ZM1328.2 459.8 L1323.9 491.4 L1316.1 489.0ZM1159.8 881.8 L1184.1 844.7 L1175.2 842.0ZM1348.8 466.2 L1344.5 497.8 L1336.6 495.4ZM1179.8 888.0 L1204.2 851.0 L1195.3 848.2ZM1369.4 472.6 L1365.0 504.2 L1357.2 501.8ZM1199.9 894.2 L1224.2 857.2 L1215.4 854.5ZM1390.0 479.0 L1385.6 510.6 L1377.8 508.2ZM1219.9 900.5 L1244.3 863.5 L1235.5 860.8ZM1410.6 485.4 L1406.1 517.0 L1398.3 514.6ZM1239.9 906.8 L1264.4 869.8 L1255.6 867.0ZM759.0 283.0 L745.0 341.3 L738.0 341.3Z" fill="#0b3c77"/><path d="M761.0 343.2 L772.9 346.9 L769.9 355.0 L758.0 351.3ZM781.5 349.5 L793.4 353.2 L790.4 361.4 L778.5 357.7ZM802.0 355.9 L813.9 359.6 L810.9 367.8 L799.0 364.1ZM822.5 362.3 L834.5 366.0 L831.5 374.2 L819.6 370.5ZM843.1 368.7 L855.0 372.4 L852.0 380.6 L840.1 376.9ZM863.6 375.1 L875.5 378.8 L872.5 386.9 L860.6 383.2ZM884.1 381.4 L896.0 385.1 L893.0 393.3 L881.1 389.6ZM904.7 387.8 L916.6 391.5 L913.5 399.7 L901.6 396.0ZM925.2 394.2 L937.1 397.9 L934.1 406.1 L922.2 402.4ZM945.7 400.6 L957.6 404.3 L954.6 412.4 L942.7 408.7ZM966.2 407.0 L978.1 410.7 L975.1 418.8 L963.2 415.1ZM986.8 413.3 L998.7 417.0 L995.6 425.2 L983.7 421.5ZM1007.3 419.7 L1019.2 423.4 L1016.1 431.6 L1004.2 427.9ZM1027.8 426.1 L1039.7 429.8 L1036.6 438.0 L1024.7 434.3ZM1048.4 432.5 L1060.3 436.2 L1057.2 444.3 L1045.3 440.6ZM1068.9 438.9 L1080.8 442.6 L1077.7 450.7 L1065.8 447.0ZM1089.4 445.3 L1101.3 449.0 L1098.2 457.1 L1086.3 453.4ZM1109.9 451.6 L1121.8 455.3 L1118.7 463.5 L1106.8 459.8ZM1130.5 458.0 L1142.4 461.7 L1139.2 469.8 L1127.3 466.1ZM1151.0 464.4 L1162.9 468.1 L1159.7 476.2 L1147.8 472.5ZM1171.5 470.8 L1183.4 474.5 L1180.3 482.6 L1168.4 478.9ZM1192.1 477.2 L1204.0 480.9 L1200.8 489.0 L1188.9 485.3ZM1212.6 483.5 L1224.5 487.2 L1221.3 495.4 L1209.4 491.7ZM1233.1 489.9 L1245.0 493.6 L1241.8 501.7 L1229.9 498.0ZM1253.6 496.3 L1265.5 500.0 L1262.3 508.1 L1250.4 504.4ZM1274.2 502.7 L1286.1 506.4 L1282.8 514.5 L1270.9 510.8ZM1294.7 509.1 L1306.6 512.8 L1303.4 520.9 L1291.5 517.2ZM1315.2 515.4 L1327.1 519.1 L1323.9 527.3 L1312.0 523.6ZM1335.8 521.8 L1347.7 525.5 L1344.4 533.6 L1332.5 529.9ZM1356.3 528.2 L1368.2 531.9 L1364.9 540.0 L1353.0 536.3ZM1376.8 534.6 L1388.7 538.3 L1385.4 546.4 L1373.5 542.7ZM750.6 373.2 L760.0 376.1 L755.6 388.3 L746.2 385.4ZM771.1 379.5 L780.5 382.5 L776.1 394.7 L766.7 391.8ZM791.6 385.9 L801.0 388.8 L796.6 401.1 L787.2 398.1ZM812.1 392.3 L821.5 395.2 L817.0 407.4 L807.6 404.5ZM832.6 398.6 L842.0 401.6 L837.5 413.8 L828.1 410.9ZM853.1 405.0 L862.5 407.9 L858.0 420.2 L848.6 417.2ZM873.6 411.4 L883.0 414.3 L878.5 426.5 L869.0 423.6ZM894.0 417.7 L903.5 420.7 L898.9 432.9 L889.5 430.0ZM914.5 424.1 L924.0 427.0 L919.4 439.3 L910.0 436.3ZM935.0 430.5 L944.4 433.4 L939.9 445.6 L930.5 442.7ZM955.5 436.9 L964.9 439.8 L960.4 452.0 L950.9 449.1ZM976.0 443.2 L985.4 446.2 L980.8 458.4 L971.4 455.4ZM996.5 449.6 L1005.9 452.5 L1001.3 464.7 L991.9 461.8ZM1017.0 456.0 L1026.4 458.9 L1021.8 471.1 L1012.3 468.2ZM1037.5 462.3 L1046.9 465.3 L1042.2 477.5 L1032.8 474.5ZM1057.9 468.7 L1067.4 471.6 L1062.7 483.8 L1053.3 480.9ZM1078.4 475.1 L1087.9 478.0 L1083.2 490.2 L1073.8 487.3ZM1098.9 481.5 L1108.4 484.4 L1103.7 496.6 L1094.2 493.6ZM1119.4 487.8 L1128.8 490.8 L1124.1 502.9 L1114.7 500.0ZM1139.9 494.2 L1149.3 497.1 L1144.6 509.3 L1135.2 506.4ZM1160.4 500.6 L1169.8 503.5 L1165.1 515.7 L1155.7 512.7ZM1180.9 506.9 L1190.3 509.9 L1185.5 522.0 L1176.1 519.1ZM1201.4 513.3 L1210.8 516.2 L1206.0 528.4 L1196.6 525.5ZM1221.9 519.7 L1231.3 522.6 L1226.5 534.8 L1217.1 531.8ZM1242.3 526.0 L1251.8 529.0 L1247.0 541.1 L1237.5 538.2ZM1262.8 532.4 L1272.3 535.3 L1267.4 547.5 L1258.0 544.6ZM1283.3 538.8 L1292.7 541.7 L1287.9 553.9 L1278.5 550.9ZM1303.8 545.2 L1313.2 548.1 L1308.4 560.2 L1299.0 557.3ZM1324.3 551.5 L1333.7 554.5 L1328.8 566.6 L1319.4 563.7ZM1344.8 557.9 L1354.2 560.8 L1349.3 573.0 L1339.9 570.0ZM1365.3 564.3 L1374.7 567.2 L1369.8 579.3 L1360.4 576.4ZM735.1 416.4 L744.5 419.3 L740.1 431.3 L730.7 428.4ZM755.5 422.7 L764.9 425.7 L760.6 437.7 L751.2 434.7ZM775.9 429.1 L785.3 432.0 L781.0 444.0 L771.6 441.1ZM796.4 435.4 L805.8 438.4 L801.4 450.4 L792.0 447.4ZM816.8 441.8 L826.2 444.7 L821.8 456.7 L812.4 453.8ZM837.2 448.2 L846.6 451.1 L842.2 463.1 L832.8 460.1ZM857.7 454.5 L867.1 457.4 L862.6 469.4 L853.2 466.5ZM878.1 460.9 L887.5 463.8 L883.0 475.8 L873.7 472.9ZM898.5 467.2 L907.9 470.1 L903.5 482.1 L894.1 479.2ZM918.9 473.6 L928.3 476.5 L923.9 488.5 L914.5 485.6ZM939.4 479.9 L948.8 482.9 L944.3 494.8 L934.9 491.9ZM959.8 486.3 L969.2 489.2 L964.7 501.2 L955.3 498.3ZM980.2 492.6 L989.6 495.6 L985.1 507.5 L975.7 504.6ZM1000.7 499.0 L1010.1 501.9 L1005.5 513.9 L996.1 511.0ZM1021.1 505.4 L1030.5 508.3 L1025.9 520.2 L1016.6 517.3ZM1041.5 511.7 L1050.9 514.6 L1046.4 526.6 L1037.0 523.7ZM1062.0 518.1 L1071.4 521.0 L1066.8 532.9 L1057.4 530.0ZM1082.4 524.4 L1091.8 527.3 L1087.2 539.3 L1077.8 536.4ZM1102.8 530.8 L1112.2 533.7 L1107.6 545.6 L1098.2 542.7ZM1123.3 537.1 L1132.6 540.1 L1128.0 552.0 L1118.6 549.1ZM1143.7 543.5 L1153.1 546.4 L1148.4 558.3 L1139.0 555.4ZM1164.1 549.8 L1173.5 552.8 L1168.8 564.7 L1159.5 561.8ZM1184.5 556.2 L1193.9 559.1 L1189.3 571.0 L1179.9 568.1ZM1205.0 562.6 L1214.4 565.5 L1209.7 577.4 L1200.3 574.5ZM1225.4 568.9 L1234.8 571.8 L1230.1 583.7 L1220.7 580.8ZM1245.8 575.3 L1255.2 578.2 L1250.5 590.1 L1241.1 587.2ZM1266.3 581.6 L1275.7 584.5 L1270.9 596.4 L1261.5 593.5ZM1286.7 588.0 L1296.1 590.9 L1291.3 602.8 L1281.9 599.9ZM1307.1 594.3 L1316.5 597.3 L1311.7 609.1 L1302.4 606.2ZM1327.6 600.7 L1337.0 603.6 L1332.2 615.5 L1322.8 612.6ZM1348.0 607.0 L1357.4 610.0 L1352.6 621.8 L1343.2 618.9ZM719.5 459.6 L728.9 462.5 L724.6 474.3 L715.3 471.4ZM739.9 465.9 L749.3 468.9 L745.0 480.6 L735.6 477.7ZM760.3 472.3 L769.6 475.2 L765.4 487.0 L756.0 484.1ZM780.6 478.6 L790.0 481.5 L785.7 493.3 L776.4 490.4ZM801.0 485.0 L810.4 487.9 L806.1 499.6 L796.7 496.7ZM821.4 491.3 L830.8 494.2 L826.4 506.0 L817.1 503.1ZM841.8 497.6 L851.1 500.6 L846.8 512.3 L837.4 509.4ZM862.1 504.0 L871.5 506.9 L867.1 518.6 L857.8 515.7ZM882.5 510.3 L891.9 513.2 L887.5 525.0 L878.1 522.1ZM902.9 516.7 L912.2 519.6 L907.9 531.3 L898.5 528.4ZM923.2 523.0 L932.6 525.9 L928.2 537.7 L918.9 534.7ZM943.6 529.3 L953.0 532.3 L948.6 544.0 L939.2 541.1ZM964.0 535.7 L973.4 538.6 L968.9 550.3 L959.6 547.4ZM984.4 542.0 L993.7 544.9 L989.3 556.7 L979.9 553.7ZM1004.7 548.4 L1014.1 551.3 L1009.6 563.0 L1000.3 560.1ZM1025.1 554.7 L1034.5 557.6 L1030.0 569.3 L1020.6 566.4ZM1045.5 561.0 L1054.9 564.0 L1050.4 575.7 L1041.0 572.8ZM1065.9 567.4 L1075.2 570.3 L1070.7 582.0 L1061.4 579.1ZM1086.2 573.7 L1095.6 576.6 L1091.1 588.3 L1081.7 585.4ZM1106.6 580.1 L1116.0 583.0 L1111.4 594.7 L1102.1 591.8ZM1127.0 586.4 L1136.3 589.3 L1131.8 601.0 L1122.4 598.1ZM1147.3 592.7 L1156.7 595.7 L1152.1 607.4 L1142.8 604.4ZM1167.7 599.1 L1177.1 602.0 L1172.5 613.7 L1163.1 610.8ZM1188.1 605.4 L1197.5 608.3 L1192.9 620.0 L1183.5 617.1ZM1208.5 611.8 L1217.8 614.7 L1213.2 626.4 L1203.8 623.4ZM1228.8 618.1 L1238.2 621.0 L1233.6 632.7 L1224.2 629.8ZM1249.2 624.4 L1258.6 627.4 L1253.9 639.0 L1244.6 636.1ZM1269.6 630.8 L1279.0 633.7 L1274.3 645.4 L1264.9 642.5ZM1290.0 637.1 L1299.3 640.0 L1294.6 651.7 L1285.3 648.8ZM1310.3 643.5 L1319.7 646.4 L1315.0 658.0 L1305.6 655.1ZM1330.7 649.8 L1340.1 652.7 L1335.4 664.4 L1326.0 661.5ZM704.0 502.8 L713.3 505.7 L709.2 517.3 L699.8 514.4ZM724.3 509.2 L733.6 512.1 L729.5 523.6 L720.1 520.7ZM744.6 515.5 L753.9 518.4 L749.8 529.9 L740.4 527.0ZM764.9 521.8 L774.3 524.7 L770.1 536.2 L760.7 533.3ZM785.2 528.1 L794.6 531.0 L790.4 542.6 L781.0 539.6ZM805.5 534.5 L814.9 537.4 L810.7 548.9 L801.3 546.0ZM825.9 540.8 L835.2 543.7 L831.0 555.2 L821.6 552.3ZM846.2 547.1 L855.5 550.0 L851.3 561.5 L841.9 558.6ZM866.5 553.4 L875.8 556.3 L871.6 567.8 L862.2 564.9ZM886.8 559.8 L896.1 562.7 L891.9 574.2 L882.5 571.3ZM907.1 566.1 L916.5 569.0 L912.2 580.5 L902.8 577.6ZM927.4 572.4 L936.8 575.3 L932.4 586.8 L923.1 583.9ZM947.7 578.7 L957.1 581.6 L952.7 593.1 L943.4 590.2ZM968.1 585.1 L977.4 588.0 L973.0 599.4 L963.7 596.5ZM988.4 591.4 L997.7 594.3 L993.3 605.8 L984.0 602.9ZM1008.7 597.7 L1018.0 600.6 L1013.6 612.1 L1004.3 609.2ZM1029.0 604.0 L1038.4 606.9 L1033.9 618.4 L1024.6 615.5ZM1049.3 610.4 L1058.7 613.3 L1054.2 624.7 L1044.9 621.8ZM1069.6 616.7 L1079.0 619.6 L1074.5 631.0 L1065.2 628.1ZM1089.9 623.0 L1099.3 625.9 L1094.8 637.4 L1085.5 634.5ZM1110.3 629.3 L1119.6 632.2 L1115.1 643.7 L1105.8 640.8ZM1130.6 635.7 L1139.9 638.6 L1135.4 650.0 L1126.1 647.1ZM1150.9 642.0 L1160.2 644.9 L1155.7 656.3 L1146.4 653.4ZM1171.2 648.3 L1180.6 651.2 L1176.0 662.7 L1166.7 659.7ZM1191.5 654.6 L1200.9 657.5 L1196.3 669.0 L1187.0 666.1ZM1211.8 661.0 L1221.2 663.9 L1216.6 675.3 L1207.3 672.4ZM1232.2 667.3 L1241.5 670.2 L1236.9 681.6 L1227.6 678.7ZM1252.5 673.6 L1261.8 676.5 L1257.2 687.9 L1247.9 685.0ZM1272.8 679.9 L1282.1 682.8 L1277.5 694.3 L1268.2 691.4ZM1293.1 686.3 L1302.4 689.2 L1297.8 700.6 L1288.5 697.7ZM1313.4 692.6 L1322.8 695.5 L1318.1 706.9 L1308.8 704.0ZM688.4 546.1 L697.7 549.0 L693.7 560.3 L684.4 557.4ZM708.7 552.4 L718.0 555.3 L713.9 566.6 L704.6 563.7ZM728.9 558.7 L738.2 561.6 L734.1 572.9 L724.8 570.0ZM749.2 565.0 L758.5 567.9 L754.4 579.2 L745.1 576.3ZM769.4 571.3 L778.8 574.2 L774.6 585.5 L765.3 582.6ZM789.7 577.6 L799.0 580.5 L794.9 591.8 L785.6 588.9ZM810.0 583.9 L819.3 586.8 L815.1 598.1 L805.8 595.2ZM830.2 590.2 L839.5 593.1 L835.4 604.4 L826.0 601.5ZM850.5 596.5 L859.8 599.4 L855.6 610.7 L846.3 607.8ZM870.7 602.8 L880.0 605.7 L875.8 617.0 L866.5 614.1ZM891.0 609.2 L900.3 612.1 L896.1 623.3 L886.8 620.4ZM911.2 615.5 L920.6 618.4 L916.3 629.6 L907.0 626.7ZM931.5 621.8 L940.8 624.7 L936.6 635.9 L927.3 633.0ZM951.8 628.1 L961.1 631.0 L956.8 642.2 L947.5 639.3ZM972.0 634.4 L981.3 637.3 L977.1 648.5 L967.7 645.6ZM992.3 640.7 L1001.6 643.6 L997.3 654.8 L988.0 651.9ZM1012.5 647.0 L1021.8 649.9 L1017.5 661.1 L1008.2 658.2ZM1032.8 653.3 L1042.1 656.2 L1037.8 667.5 L1028.5 664.6ZM1053.0 659.6 L1062.4 662.5 L1058.0 673.8 L1048.7 670.9ZM1073.3 665.9 L1082.6 668.8 L1078.3 680.1 L1068.9 677.2ZM1093.6 672.3 L1102.9 675.2 L1098.5 686.4 L1089.2 683.5ZM1113.8 678.6 L1123.1 681.5 L1118.7 692.7 L1109.4 689.8ZM1134.1 684.9 L1143.4 687.8 L1139.0 699.0 L1129.7 696.1ZM1154.3 691.2 L1163.6 694.1 L1159.2 705.3 L1149.9 702.4ZM1174.6 697.5 L1183.9 700.4 L1179.5 711.6 L1170.2 708.7ZM1194.8 703.8 L1204.2 706.7 L1199.7 717.9 L1190.4 715.0ZM1215.1 710.1 L1224.4 713.0 L1220.0 724.2 L1210.6 721.3ZM1235.4 716.4 L1244.7 719.3 L1240.2 730.5 L1230.9 727.6ZM1255.6 722.7 L1264.9 725.6 L1260.4 736.8 L1251.1 733.9ZM1275.9 729.0 L1285.2 731.9 L1280.7 743.1 L1271.4 740.2ZM1296.1 735.3 L1305.4 738.3 L1300.9 749.4 L1291.6 746.5ZM672.9 589.3 L682.2 592.2 L678.2 603.2 L668.9 600.3ZM693.1 595.6 L702.4 598.5 L698.4 609.5 L689.1 606.6ZM713.3 601.9 L722.6 604.8 L718.5 615.8 L709.3 612.9ZM733.5 608.2 L742.8 611.1 L738.7 622.1 L729.4 619.2ZM753.7 614.5 L763.0 617.4 L758.9 628.4 L749.6 625.5ZM773.9 620.8 L783.2 623.7 L779.1 634.7 L769.8 631.8ZM794.1 627.1 L803.4 629.9 L799.3 641.0 L790.0 638.1ZM814.3 633.3 L823.6 636.2 L819.5 647.3 L810.2 644.4ZM834.5 639.6 L843.8 642.5 L839.6 653.6 L830.4 650.7ZM854.7 645.9 L863.9 648.8 L859.8 659.8 L850.5 657.0ZM874.9 652.2 L884.1 655.1 L880.0 666.1 L870.7 663.2ZM895.1 658.5 L904.3 661.4 L900.2 672.4 L890.9 669.5ZM915.3 664.8 L924.5 667.7 L920.4 678.7 L911.1 675.8ZM935.5 671.1 L944.7 674.0 L940.6 685.0 L931.3 682.1ZM955.7 677.4 L964.9 680.3 L960.8 691.3 L951.5 688.4ZM975.9 683.7 L985.1 686.6 L980.9 697.6 L971.7 694.7ZM996.1 690.0 L1005.3 692.9 L1001.1 703.9 L991.8 701.0ZM1016.3 696.3 L1025.5 699.2 L1021.3 710.2 L1012.0 707.3ZM1036.4 702.6 L1045.7 705.5 L1041.5 716.5 L1032.2 713.6ZM1056.6 708.9 L1065.9 711.8 L1061.7 722.8 L1052.4 719.9ZM1076.8 715.2 L1086.1 718.1 L1081.9 729.0 L1072.6 726.2ZM1097.0 721.5 L1106.3 724.4 L1102.0 735.3 L1092.8 732.4ZM1117.2 727.8 L1126.5 730.7 L1122.2 741.6 L1112.9 738.7ZM1137.4 734.1 L1146.7 737.0 L1142.4 747.9 L1133.1 745.0ZM1157.6 740.4 L1166.9 743.2 L1162.6 754.2 L1153.3 751.3ZM1177.8 746.6 L1187.1 749.5 L1182.8 760.5 L1173.5 757.6ZM1198.0 752.9 L1207.3 755.8 L1203.0 766.8 L1193.7 763.9ZM1218.2 759.2 L1227.5 762.1 L1223.1 773.1 L1213.9 770.2ZM1238.4 765.5 L1247.7 768.4 L1243.3 779.4 L1234.0 776.5ZM1258.6 771.8 L1267.9 774.7 L1263.5 785.7 L1254.2 782.8ZM1278.8 778.1 L1288.1 781.0 L1283.7 792.0 L1274.4 789.1Z" fill="#155baa"/><path d="M760.0 376.1 L762.3 376.8 L757.9 389.0 L755.6 388.3ZM780.5 382.5 L782.8 383.2 L778.4 395.4 L776.1 394.7ZM801.0 388.8 L803.3 389.5 L798.8 401.8 L796.6 401.1ZM821.5 395.2 L823.8 395.9 L819.3 408.1 L817.0 407.4ZM842.0 401.6 L844.3 402.3 L839.8 414.5 L837.5 413.8ZM862.5 407.9 L864.7 408.6 L860.2 420.9 L858.0 420.2ZM883.0 414.3 L885.2 415.0 L880.7 427.2 L878.5 426.5ZM903.5 420.7 L905.7 421.4 L901.2 433.6 L898.9 432.9ZM924.0 427.0 L926.2 427.7 L921.7 440.0 L919.4 439.3ZM944.4 433.4 L946.7 434.1 L942.1 446.3 L939.9 445.6ZM964.9 439.8 L967.2 440.5 L962.6 452.7 L960.4 452.0ZM985.4 446.2 L987.7 446.9 L983.1 459.1 L980.8 458.4ZM1005.9 452.5 L1008.2 453.2 L1003.5 465.4 L1001.3 464.7ZM1026.4 458.9 L1028.7 459.6 L1024.0 471.8 L1021.8 471.1ZM1046.9 465.3 L1049.1 466.0 L1044.5 478.2 L1042.2 477.5ZM1067.4 471.6 L1069.6 472.3 L1065.0 484.5 L1062.7 483.8ZM1087.9 478.0 L1090.1 478.7 L1085.4 490.9 L1083.2 490.2ZM1108.4 484.4 L1110.6 485.1 L1105.9 497.3 L1103.7 496.6ZM1128.8 490.8 L1131.1 491.5 L1126.4 503.6 L1124.1 502.9ZM1149.3 497.1 L1151.6 497.8 L1146.9 510.0 L1144.6 509.3ZM1169.8 503.5 L1172.1 504.2 L1167.3 516.4 L1165.1 515.7ZM1190.3 509.9 L1192.6 510.6 L1187.8 522.7 L1185.5 522.0ZM1210.8 516.2 L1213.0 516.9 L1208.3 529.1 L1206.0 528.4ZM1231.3 522.6 L1233.5 523.3 L1228.7 535.5 L1226.5 534.8ZM1251.8 529.0 L1254.0 529.7 L1249.2 541.8 L1247.0 541.1ZM1272.3 535.3 L1274.5 536.0 L1269.7 548.2 L1267.4 547.5ZM1292.7 541.7 L1295.0 542.4 L1290.2 554.6 L1287.9 553.9ZM1313.2 548.1 L1315.5 548.8 L1310.6 560.9 L1308.4 560.2ZM1333.7 554.5 L1336.0 555.2 L1331.1 567.3 L1328.8 566.6ZM1354.2 560.8 L1356.5 561.5 L1351.6 573.7 L1349.3 573.0ZM1374.7 567.2 L1377.0 567.9 L1372.0 580.0 L1369.8 579.3ZM744.5 419.3 L746.7 420.0 L742.4 432.0 L740.1 431.3ZM764.9 425.7 L767.1 426.4 L762.8 438.4 L760.6 437.7ZM785.3 432.0 L787.6 432.7 L783.2 444.7 L781.0 444.0ZM805.8 438.4 L808.0 439.1 L803.6 451.1 L801.4 450.4ZM826.2 444.7 L828.4 445.4 L824.0 457.4 L821.8 456.7ZM846.6 451.1 L848.9 451.8 L844.5 463.8 L842.2 463.1ZM867.1 457.4 L869.3 458.1 L864.9 470.1 L862.6 469.4ZM887.5 463.8 L889.7 464.5 L885.3 476.5 L883.0 475.8ZM907.9 470.1 L910.2 470.8 L905.7 482.8 L903.5 482.1ZM928.3 476.5 L930.6 477.2 L926.1 489.2 L923.9 488.5ZM948.8 482.9 L951.0 483.6 L946.5 495.5 L944.3 494.8ZM969.2 489.2 L971.5 489.9 L966.9 501.9 L964.7 501.2ZM989.6 495.6 L991.9 496.3 L987.4 508.2 L985.1 507.5ZM1010.1 501.9 L1012.3 502.6 L1007.8 514.6 L1005.5 513.9ZM1030.5 508.3 L1032.7 509.0 L1028.2 520.9 L1025.9 520.2ZM1050.9 514.6 L1053.2 515.3 L1048.6 527.3 L1046.4 526.6ZM1071.4 521.0 L1073.6 521.7 L1069.0 533.6 L1066.8 532.9ZM1091.8 527.3 L1094.0 528.0 L1089.4 540.0 L1087.2 539.3ZM1112.2 533.7 L1114.5 534.4 L1109.8 546.3 L1107.6 545.6ZM1132.6 540.1 L1134.9 540.8 L1130.3 552.7 L1128.0 552.0ZM1153.1 546.4 L1155.3 547.1 L1150.7 559.0 L1148.4 558.3ZM1173.5 552.8 L1175.8 553.5 L1171.1 565.4 L1168.8 564.7ZM1193.9 559.1 L1196.2 559.8 L1191.5 571.7 L1189.3 571.0ZM1214.4 565.5 L1216.6 566.2 L1211.9 578.1 L1209.7 577.4ZM1234.8 571.8 L1237.0 572.5 L1232.3 584.4 L1230.1 583.7ZM1255.2 578.2 L1257.5 578.9 L1252.7 590.8 L1250.5 590.1ZM1275.7 584.5 L1277.9 585.2 L1273.2 597.1 L1270.9 596.4ZM1296.1 590.9 L1298.3 591.6 L1293.6 603.5 L1291.3 602.8ZM1316.5 597.3 L1318.8 598.0 L1314.0 609.8 L1311.7 609.1ZM1337.0 603.6 L1339.2 604.3 L1334.4 616.2 L1332.2 615.5ZM1357.4 610.0 L1359.6 610.7 L1354.8 622.5 L1352.6 621.8ZM728.9 462.5 L731.1 463.2 L726.9 475.0 L724.6 474.3ZM749.3 468.9 L751.5 469.6 L747.2 481.3 L745.0 480.6ZM769.6 475.2 L771.9 475.9 L767.6 487.7 L765.4 487.0ZM790.0 481.5 L792.3 482.2 L788.0 494.0 L785.7 493.3ZM810.4 487.9 L812.6 488.6 L808.3 500.3 L806.1 499.6ZM830.8 494.2 L833.0 494.9 L828.7 506.7 L826.4 506.0ZM851.1 500.6 L853.4 501.3 L849.0 513.0 L846.8 512.3ZM871.5 506.9 L873.7 507.6 L869.4 519.3 L867.1 518.6ZM891.9 513.2 L894.1 513.9 L889.7 525.7 L887.5 525.0ZM912.2 519.6 L914.5 520.3 L910.1 532.0 L907.9 531.3ZM932.6 525.9 L934.9 526.6 L930.5 538.4 L928.2 537.7ZM953.0 532.3 L955.2 533.0 L950.8 544.7 L948.6 544.0ZM973.4 538.6 L975.6 539.3 L971.2 551.0 L968.9 550.3ZM993.7 544.9 L996.0 545.6 L991.5 557.4 L989.3 556.7ZM1014.1 551.3 L1016.3 552.0 L1011.9 563.7 L1009.6 563.0ZM1034.5 557.6 L1036.7 558.3 L1032.2 570.0 L1030.0 569.3ZM1054.9 564.0 L1057.1 564.7 L1052.6 576.4 L1050.4 575.7ZM1075.2 570.3 L1077.5 571.0 L1073.0 582.7 L1070.7 582.0ZM1095.6 576.6 L1097.8 577.3 L1093.3 589.0 L1091.1 588.3ZM1116.0 583.0 L1118.2 583.7 L1113.7 595.4 L1111.4 594.7ZM1136.3 589.3 L1138.6 590.0 L1134.0 601.7 L1131.8 601.0ZM1156.7 595.7 L1159.0 596.4 L1154.4 608.0 L1152.1 607.4ZM1177.1 602.0 L1179.3 602.7 L1174.7 614.4 L1172.5 613.7ZM1197.5 608.3 L1199.7 609.0 L1195.1 620.7 L1192.9 620.0ZM1217.8 614.7 L1220.1 615.4 L1215.5 627.1 L1213.2 626.4ZM1238.2 621.0 L1240.4 621.7 L1235.8 633.4 L1233.6 632.7ZM1258.6 627.4 L1260.8 628.1 L1256.2 639.7 L1253.9 639.0ZM1279.0 633.7 L1281.2 634.4 L1276.5 646.1 L1274.3 645.4ZM1299.3 640.0 L1301.6 640.7 L1296.9 652.4 L1294.6 651.7ZM1319.7 646.4 L1321.9 647.1 L1317.2 658.7 L1315.0 658.0ZM1340.1 652.7 L1342.3 653.4 L1337.6 665.1 L1335.4 664.4ZM713.3 505.7 L715.5 506.4 L711.4 518.0 L709.2 517.3ZM733.6 512.1 L735.9 512.8 L731.7 524.3 L729.5 523.6ZM753.9 518.4 L756.2 519.1 L752.0 530.6 L749.8 529.9ZM774.3 524.7 L776.5 525.4 L772.3 536.9 L770.1 536.2ZM794.6 531.0 L796.8 531.7 L792.6 543.3 L790.4 542.6ZM814.9 537.4 L817.1 538.1 L812.9 549.6 L810.7 548.9ZM835.2 543.7 L837.4 544.4 L833.2 555.9 L831.0 555.2ZM855.5 550.0 L857.8 550.7 L853.5 562.2 L851.3 561.5ZM875.8 556.3 L878.1 557.0 L873.8 568.5 L871.6 567.8ZM896.1 562.7 L898.4 563.4 L894.1 574.9 L891.9 574.2ZM916.5 569.0 L918.7 569.7 L914.4 581.2 L912.2 580.5ZM936.8 575.3 L939.0 576.0 L934.7 587.5 L932.4 586.8ZM957.1 581.6 L959.3 582.3 L955.0 593.8 L952.7 593.1ZM977.4 588.0 L979.6 588.7 L975.3 600.1 L973.0 599.4ZM997.7 594.3 L1000.0 595.0 L995.6 606.5 L993.3 605.8ZM1018.0 600.6 L1020.3 601.3 L1015.9 612.8 L1013.6 612.1ZM1038.4 606.9 L1040.6 607.6 L1036.2 619.1 L1033.9 618.4ZM1058.7 613.3 L1060.9 614.0 L1056.5 625.4 L1054.2 624.7ZM1079.0 619.6 L1081.2 620.3 L1076.8 631.7 L1074.5 631.0ZM1099.3 625.9 L1101.5 626.6 L1097.1 638.1 L1094.8 637.4ZM1119.6 632.2 L1121.8 632.9 L1117.4 644.4 L1115.1 643.7ZM1139.9 638.6 L1142.2 639.3 L1137.7 650.7 L1135.4 650.0ZM1160.2 644.9 L1162.5 645.6 L1158.0 657.0 L1155.7 656.3ZM1180.6 651.2 L1182.8 651.9 L1178.3 663.3 L1176.0 662.7ZM1200.9 657.5 L1203.1 658.2 L1198.6 669.7 L1196.3 669.0ZM1221.2 663.9 L1223.4 664.6 L1218.9 676.0 L1216.6 675.3ZM1241.5 670.2 L1243.7 670.9 L1239.2 682.3 L1236.9 681.6ZM1261.8 676.5 L1264.0 677.2 L1259.5 688.6 L1257.2 687.9ZM1282.1 682.8 L1284.4 683.5 L1279.8 695.0 L1277.5 694.3ZM1302.4 689.2 L1304.7 689.9 L1300.1 701.3 L1297.8 700.6ZM1322.8 695.5 L1325.0 696.2 L1320.4 707.6 L1318.1 706.9ZM697.7 549.0 L700.0 549.7 L695.9 560.9 L693.7 560.3ZM718.0 555.3 L720.2 556.0 L716.1 567.3 L713.9 566.6ZM738.2 561.6 L740.5 562.3 L736.4 573.6 L734.1 572.9ZM758.5 567.9 L760.7 568.6 L756.6 579.9 L754.4 579.2ZM778.8 574.2 L781.0 574.9 L776.9 586.2 L774.6 585.5ZM799.0 580.5 L801.2 581.2 L797.1 592.5 L794.9 591.8ZM819.3 586.8 L821.5 587.5 L817.3 598.8 L815.1 598.1ZM839.5 593.1 L841.8 593.8 L837.6 605.1 L835.4 604.4ZM859.8 599.4 L862.0 600.1 L857.8 611.4 L855.6 610.7ZM880.0 605.7 L882.3 606.4 L878.1 617.7 L875.8 617.0ZM900.3 612.1 L902.5 612.8 L898.3 624.0 L896.1 623.3ZM920.6 618.4 L922.8 619.1 L918.6 630.3 L916.3 629.6ZM940.8 624.7 L943.0 625.4 L938.8 636.6 L936.6 635.9ZM961.1 631.0 L963.3 631.7 L959.0 642.9 L956.8 642.2ZM981.3 637.3 L983.6 638.0 L979.3 649.2 L977.1 648.5ZM1001.6 643.6 L1003.8 644.3 L999.5 655.5 L997.3 654.8ZM1021.8 649.9 L1024.1 650.6 L1019.8 661.8 L1017.5 661.1ZM1042.1 656.2 L1044.3 656.9 L1040.0 668.1 L1037.8 667.5ZM1062.4 662.5 L1064.6 663.2 L1060.2 674.5 L1058.0 673.8ZM1082.6 668.8 L1084.8 669.5 L1080.5 680.8 L1078.3 680.1ZM1102.9 675.2 L1105.1 675.8 L1100.7 687.1 L1098.5 686.4ZM1123.1 681.5 L1125.4 682.2 L1121.0 693.4 L1118.7 692.7ZM1143.4 687.8 L1145.6 688.5 L1141.2 699.7 L1139.0 699.0ZM1163.6 694.1 L1165.9 694.8 L1161.5 706.0 L1159.2 705.3ZM1183.9 700.4 L1186.1 701.1 L1181.7 712.3 L1179.5 711.6ZM1204.2 706.7 L1206.4 707.4 L1201.9 718.6 L1199.7 717.9ZM1224.4 713.0 L1226.6 713.7 L1222.2 724.9 L1220.0 724.2ZM1244.7 719.3 L1246.9 720.0 L1242.4 731.2 L1240.2 730.5ZM1264.9 725.6 L1267.2 726.3 L1262.7 737.5 L1260.4 736.8ZM1285.2 731.9 L1287.4 732.6 L1282.9 743.8 L1280.7 743.1ZM1305.4 738.3 L1307.7 738.9 L1303.1 750.1 L1300.9 749.4ZM682.2 592.2 L684.4 592.9 L680.4 603.9 L678.2 603.2ZM702.4 598.5 L704.6 599.2 L700.6 610.2 L698.4 609.5ZM722.6 604.8 L724.8 605.5 L720.8 616.5 L718.5 615.8ZM742.8 611.1 L745.0 611.8 L740.9 622.8 L738.7 622.1ZM763.0 617.4 L765.2 618.1 L761.1 629.1 L758.9 628.4ZM783.2 623.7 L785.4 624.3 L781.3 635.4 L779.1 634.7ZM803.4 629.9 L805.6 630.6 L801.5 641.7 L799.3 641.0ZM823.6 636.2 L825.8 636.9 L821.7 648.0 L819.5 647.3ZM843.8 642.5 L846.0 643.2 L841.9 654.2 L839.6 653.6ZM863.9 648.8 L866.2 649.5 L862.1 660.5 L859.8 659.8ZM884.1 655.1 L886.4 655.8 L882.2 666.8 L880.0 666.1ZM904.3 661.4 L906.6 662.1 L902.4 673.1 L900.2 672.4ZM924.5 667.7 L926.8 668.4 L922.6 679.4 L920.4 678.7ZM944.7 674.0 L947.0 674.7 L942.8 685.7 L940.6 685.0ZM964.9 680.3 L967.2 681.0 L963.0 692.0 L960.8 691.3ZM985.1 686.6 L987.4 687.3 L983.2 698.3 L980.9 697.6ZM1005.3 692.9 L1007.6 693.6 L1003.3 704.6 L1001.1 703.9ZM1025.5 699.2 L1027.8 699.9 L1023.5 710.9 L1021.3 710.2ZM1045.7 705.5 L1048.0 706.2 L1043.7 717.2 L1041.5 716.5ZM1065.9 711.8 L1068.2 712.5 L1063.9 723.4 L1061.7 722.8ZM1086.1 718.1 L1088.4 718.8 L1084.1 729.7 L1081.9 729.0ZM1106.3 724.4 L1108.6 725.1 L1104.3 736.0 L1102.0 735.3ZM1126.5 730.7 L1128.8 731.4 L1124.4 742.3 L1122.2 741.6ZM1146.7 737.0 L1149.0 737.6 L1144.6 748.6 L1142.4 747.9ZM1166.9 743.2 L1169.2 743.9 L1164.8 754.9 L1162.6 754.2ZM1187.1 749.5 L1189.4 750.2 L1185.0 761.2 L1182.8 760.5ZM1207.3 755.8 L1209.6 756.5 L1205.2 767.5 L1203.0 766.8ZM1227.5 762.1 L1229.8 762.8 L1225.4 773.8 L1223.1 773.1ZM1247.7 768.4 L1250.0 769.1 L1245.6 780.1 L1243.3 779.4ZM1267.9 774.7 L1270.2 775.4 L1265.7 786.4 L1263.5 785.7ZM1288.1 781.0 L1290.4 781.7 L1285.9 792.6 L1283.7 792.0Z" fill="#a9553a"/><path d="M765.8 329.8 L777.7 333.5 L772.9 346.9 L761.0 343.2ZM786.3 336.2 L798.2 339.9 L793.4 353.2 L781.5 349.5ZM806.9 342.6 L818.8 346.3 L813.9 359.6 L802.0 355.9ZM827.4 349.0 L839.3 352.7 L834.5 366.0 L822.5 362.3ZM847.9 355.3 L859.9 359.0 L855.0 372.4 L843.1 368.7ZM868.5 361.7 L880.4 365.4 L875.5 378.8 L863.6 375.1ZM889.0 368.1 L901.0 371.8 L896.0 385.1 L884.1 381.4ZM909.6 374.5 L921.5 378.2 L916.6 391.5 L904.7 387.8ZM930.1 380.9 L942.1 384.6 L937.1 397.9 L925.2 394.2ZM950.7 387.3 L962.6 391.0 L957.6 404.3 L945.7 400.6ZM971.2 393.7 L983.1 397.4 L978.1 410.7 L966.2 407.0ZM991.8 400.0 L1003.7 403.7 L998.7 417.0 L986.8 413.3ZM1012.3 406.4 L1024.2 410.1 L1019.2 423.4 L1007.3 419.7ZM1032.9 412.8 L1044.8 416.5 L1039.7 429.8 L1027.8 426.1ZM1053.4 419.2 L1065.3 422.9 L1060.3 436.2 L1048.4 432.5ZM1074.0 425.6 L1085.9 429.3 L1080.8 442.6 L1068.9 438.9ZM1094.5 432.0 L1106.4 435.7 L1101.3 449.0 L1089.4 445.3ZM1115.0 438.4 L1127.0 442.1 L1121.8 455.3 L1109.9 451.6ZM1135.6 444.7 L1147.5 448.4 L1142.4 461.7 L1130.5 458.0ZM1156.1 451.1 L1168.1 454.8 L1162.9 468.1 L1151.0 464.4ZM1176.7 457.5 L1188.6 461.2 L1183.4 474.5 L1171.5 470.8ZM1197.2 463.9 L1209.2 467.6 L1204.0 480.9 L1192.1 477.2ZM1217.8 470.3 L1229.7 474.0 L1224.5 487.2 L1212.6 483.5ZM1238.3 476.7 L1250.2 480.4 L1245.0 493.6 L1233.1 489.9ZM1258.9 483.1 L1270.8 486.8 L1265.5 500.0 L1253.6 496.3ZM1279.4 489.4 L1291.3 493.1 L1286.1 506.4 L1274.2 502.7ZM1300.0 495.8 L1311.9 499.5 L1306.6 512.8 L1294.7 509.1ZM1320.5 502.2 L1332.4 505.9 L1327.1 519.1 L1315.2 515.4ZM1341.1 508.6 L1353.0 512.3 L1347.7 525.5 L1335.8 521.8ZM1361.6 515.0 L1373.5 518.7 L1368.2 531.9 L1356.3 528.2ZM1382.1 521.4 L1394.1 525.1 L1388.7 538.3 L1376.8 534.6ZM748.8 387.6 L756.8 390.1 L753.9 398.1 L745.9 395.7ZM769.3 394.0 L777.3 396.5 L774.4 404.5 L766.4 402.0ZM789.8 400.4 L797.7 402.9 L794.8 410.9 L786.9 408.4ZM810.2 406.7 L818.2 409.2 L815.3 417.2 L807.3 414.8ZM830.7 413.1 L838.7 415.6 L835.8 423.6 L827.8 421.1ZM851.2 419.5 L859.2 422.0 L856.2 430.0 L848.2 427.5ZM871.6 425.8 L879.6 428.3 L876.7 436.3 L868.7 433.8ZM892.1 432.2 L900.1 434.7 L897.1 442.7 L889.2 440.2ZM912.6 438.6 L920.6 441.0 L917.6 449.0 L909.6 446.6ZM933.1 444.9 L941.0 447.4 L938.1 455.4 L930.1 452.9ZM953.5 451.3 L961.5 453.8 L958.5 461.8 L950.5 459.3ZM974.0 457.7 L982.0 460.1 L979.0 468.1 L971.0 465.7ZM994.5 464.0 L1002.5 466.5 L999.4 474.5 L991.5 472.0ZM1014.9 470.4 L1022.9 472.9 L1019.9 480.9 L1011.9 478.4ZM1035.4 476.8 L1043.4 479.2 L1040.3 487.2 L1032.4 484.7ZM1055.9 483.1 L1063.9 485.6 L1060.8 493.6 L1052.8 491.1ZM1076.3 489.5 L1084.3 492.0 L1081.3 500.0 L1073.3 497.5ZM1096.8 495.9 L1104.8 498.3 L1101.7 506.3 L1093.7 503.8ZM1117.3 502.2 L1125.3 504.7 L1122.2 512.7 L1114.2 510.2ZM1137.8 508.6 L1145.7 511.1 L1142.6 519.0 L1134.7 516.6ZM1158.2 515.0 L1166.2 517.4 L1163.1 525.4 L1155.1 522.9ZM1178.7 521.3 L1186.7 523.8 L1183.6 531.8 L1175.6 529.3ZM1199.2 527.7 L1207.2 530.2 L1204.0 538.1 L1196.0 535.6ZM1219.6 534.1 L1227.6 536.5 L1224.5 544.5 L1216.5 542.0ZM1240.1 540.4 L1248.1 542.9 L1244.9 550.9 L1237.0 548.4ZM1260.6 546.8 L1268.6 549.3 L1265.4 557.2 L1257.4 554.7ZM1281.1 553.2 L1289.0 555.6 L1285.9 563.6 L1277.9 561.1ZM1301.5 559.5 L1309.5 562.0 L1306.3 569.9 L1298.3 567.5ZM1322.0 565.9 L1330.0 568.4 L1326.8 576.3 L1318.8 573.8ZM1342.5 572.2 L1350.4 574.7 L1347.2 582.7 L1339.3 580.2ZM1362.9 578.6 L1370.9 581.1 L1367.7 589.0 L1359.7 586.6ZM733.4 430.6 L741.3 433.1 L738.5 440.9 L730.5 438.5ZM753.8 437.0 L761.7 439.5 L758.9 447.3 L750.9 444.8ZM774.2 443.3 L782.1 445.8 L779.3 453.6 L771.3 451.2ZM794.6 449.7 L802.6 452.2 L799.7 460.0 L791.7 457.5ZM815.0 456.0 L823.0 458.5 L820.1 466.3 L812.1 463.9ZM835.4 462.4 L843.4 464.9 L840.5 472.7 L832.5 470.2ZM855.8 468.7 L863.8 471.2 L860.9 479.0 L852.9 476.6ZM876.2 475.1 L884.2 477.6 L881.3 485.4 L873.3 482.9ZM896.7 481.4 L904.6 483.9 L901.7 491.7 L893.7 489.3ZM917.1 487.8 L925.0 490.3 L922.1 498.1 L914.1 495.6ZM937.5 494.1 L945.4 496.6 L942.5 504.4 L934.5 502.0ZM957.9 500.5 L965.9 503.0 L962.9 510.8 L955.0 508.3ZM978.3 506.8 L986.3 509.3 L983.3 517.1 L975.4 514.6ZM998.7 513.2 L1006.7 515.7 L1003.7 523.5 L995.8 521.0ZM1019.1 519.5 L1027.1 522.0 L1024.1 529.8 L1016.2 527.3ZM1039.5 525.9 L1047.5 528.4 L1044.5 536.2 L1036.6 533.7ZM1060.0 532.2 L1067.9 534.7 L1064.9 542.5 L1057.0 540.0ZM1080.4 538.6 L1088.3 541.1 L1085.3 548.9 L1077.4 546.4ZM1100.8 544.9 L1108.7 547.4 L1105.7 555.2 L1097.8 552.7ZM1121.2 551.3 L1129.2 553.8 L1126.1 561.6 L1118.2 559.1ZM1141.6 557.6 L1149.6 560.1 L1146.5 567.9 L1138.6 565.4ZM1162.0 564.0 L1170.0 566.5 L1166.9 574.3 L1159.0 571.8ZM1182.4 570.3 L1190.4 572.8 L1187.3 580.6 L1179.4 578.1ZM1202.8 576.7 L1210.8 579.2 L1207.7 587.0 L1199.8 584.5ZM1223.3 583.0 L1231.2 585.5 L1228.1 593.3 L1220.2 590.8ZM1243.7 589.4 L1251.6 591.9 L1248.5 599.6 L1240.6 597.2ZM1264.1 595.7 L1272.0 598.2 L1268.9 606.0 L1261.0 603.5ZM1284.5 602.1 L1292.5 604.6 L1289.3 612.3 L1281.4 609.9ZM1304.9 608.4 L1312.9 610.9 L1309.7 618.7 L1301.8 616.2ZM1325.3 614.8 L1333.3 617.3 L1330.1 625.0 L1322.2 622.6ZM1345.7 621.1 L1353.7 623.6 L1350.5 631.4 L1342.6 628.9ZM717.9 473.6 L725.8 476.1 L723.0 483.8 L715.1 481.3ZM738.2 479.9 L746.2 482.4 L743.4 490.1 L735.5 487.6ZM758.6 486.3 L766.5 488.8 L763.7 496.4 L755.8 493.9ZM778.9 492.6 L786.9 495.1 L784.1 502.8 L776.2 500.3ZM799.3 499.0 L807.2 501.4 L804.4 509.1 L796.5 506.6ZM819.7 505.3 L827.6 507.8 L824.8 515.4 L816.8 512.9ZM840.0 511.6 L847.9 514.1 L845.1 521.7 L837.2 519.3ZM860.4 518.0 L868.3 520.4 L865.5 528.1 L857.5 525.6ZM880.7 524.3 L888.7 526.8 L885.8 534.4 L877.9 531.9ZM901.1 530.6 L909.0 533.1 L906.2 540.7 L898.2 538.3ZM921.4 537.0 L929.4 539.4 L926.5 547.1 L918.6 544.6ZM941.8 543.3 L949.7 545.8 L946.8 553.4 L938.9 550.9ZM962.1 549.6 L970.1 552.1 L967.2 559.7 L959.3 557.3ZM982.5 556.0 L990.4 558.4 L987.5 566.1 L979.6 563.6ZM1002.9 562.3 L1010.8 564.8 L1007.9 572.4 L999.9 569.9ZM1023.2 568.6 L1031.1 571.1 L1028.2 578.7 L1020.3 576.3ZM1043.6 575.0 L1051.5 577.4 L1048.6 585.1 L1040.6 582.6ZM1063.9 581.3 L1071.9 583.8 L1068.9 591.4 L1061.0 588.9ZM1084.3 587.6 L1092.2 590.1 L1089.3 597.7 L1081.3 595.3ZM1104.6 594.0 L1112.6 596.5 L1109.6 604.1 L1101.7 601.6ZM1125.0 600.3 L1132.9 602.8 L1129.9 610.4 L1122.0 607.9ZM1145.3 606.7 L1153.3 609.1 L1150.3 616.7 L1142.4 614.3ZM1165.7 613.0 L1173.6 615.5 L1170.6 623.1 L1162.7 620.6ZM1186.0 619.3 L1194.0 621.8 L1191.0 629.4 L1183.0 626.9ZM1206.4 625.7 L1214.3 628.1 L1211.3 635.7 L1203.4 633.3ZM1226.8 632.0 L1234.7 634.5 L1231.7 642.1 L1223.7 639.6ZM1247.1 638.3 L1255.1 640.8 L1252.0 648.4 L1244.1 645.9ZM1267.5 644.7 L1275.4 647.1 L1272.4 654.7 L1264.4 652.3ZM1287.8 651.0 L1295.8 653.5 L1292.7 661.1 L1284.8 658.6ZM1308.2 657.3 L1316.1 659.8 L1313.1 667.4 L1305.1 664.9ZM1328.5 663.7 L1336.5 666.1 L1333.4 673.7 L1325.5 671.3ZM702.4 516.6 L710.3 519.1 L707.6 526.6 L699.7 524.1ZM722.7 522.9 L730.6 525.4 L727.9 532.9 L720.0 530.4ZM743.0 529.2 L750.9 531.7 L748.2 539.2 L740.3 536.7ZM763.3 535.6 L771.2 538.0 L768.5 545.5 L760.6 543.0ZM783.6 541.9 L791.5 544.3 L788.8 551.8 L780.9 549.4ZM803.9 548.2 L811.8 550.7 L809.1 558.1 L801.1 555.7ZM824.2 554.5 L832.1 557.0 L829.3 564.5 L821.4 562.0ZM844.5 560.8 L852.4 563.3 L849.6 570.8 L841.7 568.3ZM864.8 567.2 L872.7 569.6 L869.9 577.1 L862.0 574.6ZM885.1 573.5 L893.0 575.9 L890.2 583.4 L882.3 581.0ZM905.4 579.8 L913.3 582.3 L910.5 589.7 L902.6 587.3ZM925.7 586.1 L933.6 588.6 L930.8 596.1 L922.9 593.6ZM946.0 592.4 L953.9 594.9 L951.1 602.4 L943.2 599.9ZM966.3 598.8 L974.2 601.2 L971.4 608.7 L963.4 606.2ZM986.6 605.1 L994.5 607.5 L991.6 615.0 L983.7 612.5ZM1006.9 611.4 L1014.8 613.9 L1011.9 621.3 L1004.0 618.9ZM1027.2 617.7 L1035.1 620.2 L1032.2 627.6 L1024.3 625.2ZM1047.5 624.0 L1055.4 626.5 L1052.5 634.0 L1044.6 631.5ZM1067.8 630.4 L1075.7 632.8 L1072.8 640.3 L1064.9 637.8ZM1088.1 636.7 L1096.0 639.1 L1093.1 646.6 L1085.2 644.1ZM1108.4 643.0 L1116.3 645.5 L1113.4 652.9 L1105.5 650.4ZM1128.7 649.3 L1136.6 651.8 L1133.7 659.2 L1125.7 656.8ZM1149.0 655.6 L1156.9 658.1 L1153.9 665.5 L1146.0 663.1ZM1169.2 662.0 L1177.2 664.4 L1174.2 671.9 L1166.3 669.4ZM1189.5 668.3 L1197.5 670.7 L1194.5 678.2 L1186.6 675.7ZM1209.8 674.6 L1217.8 677.1 L1214.8 684.5 L1206.9 682.0ZM1230.1 680.9 L1238.1 683.4 L1235.1 690.8 L1227.2 688.4ZM1250.4 687.2 L1258.4 689.7 L1255.4 697.1 L1247.5 694.7ZM1270.7 693.6 L1278.7 696.0 L1275.7 703.5 L1267.8 701.0ZM1291.0 699.9 L1299.0 702.3 L1296.0 709.8 L1288.0 707.3ZM1311.3 706.2 L1319.2 708.7 L1316.2 716.1 L1308.3 713.6ZM686.9 559.6 L694.8 562.0 L692.2 569.4 L684.3 566.9ZM707.2 565.9 L715.1 568.3 L712.4 575.7 L704.5 573.2ZM727.4 572.2 L735.3 574.6 L732.6 582.0 L724.8 579.5ZM747.7 578.5 L755.5 581.0 L752.9 588.3 L745.0 585.8ZM767.9 584.8 L775.8 587.3 L773.1 594.6 L765.2 592.1ZM788.1 591.1 L796.0 593.6 L793.3 600.9 L785.4 598.4ZM808.4 597.4 L816.3 599.9 L813.6 607.2 L805.7 604.7ZM828.6 603.7 L836.5 606.2 L833.8 613.5 L825.9 611.0ZM848.9 610.0 L856.7 612.5 L854.0 619.8 L846.1 617.3ZM869.1 616.3 L877.0 618.8 L874.3 626.1 L866.4 623.6ZM889.3 622.6 L897.2 625.1 L894.5 632.4 L886.6 629.9ZM909.6 628.9 L917.5 631.4 L914.7 638.7 L906.8 636.2ZM929.8 635.2 L937.7 637.7 L934.9 645.0 L927.1 642.5ZM950.1 641.5 L957.9 644.0 L955.2 651.3 L947.3 648.8ZM970.3 647.9 L978.2 650.3 L975.4 657.6 L967.5 655.1ZM990.5 654.2 L998.4 656.6 L995.6 663.9 L987.7 661.4ZM1010.8 660.5 L1018.7 662.9 L1015.9 670.2 L1008.0 667.7ZM1031.0 666.8 L1038.9 669.2 L1036.1 676.5 L1028.2 674.0ZM1051.3 673.1 L1059.1 675.5 L1056.3 682.8 L1048.4 680.4ZM1071.5 679.4 L1079.4 681.8 L1076.6 689.1 L1068.7 686.7ZM1091.7 685.7 L1099.6 688.1 L1096.8 695.4 L1088.9 693.0ZM1112.0 692.0 L1119.9 694.4 L1117.0 701.7 L1109.1 699.3ZM1132.2 698.3 L1140.1 700.8 L1137.2 708.0 L1129.4 705.6ZM1152.5 704.6 L1160.3 707.1 L1157.5 714.3 L1149.6 711.9ZM1172.7 710.9 L1180.6 713.4 L1177.7 720.6 L1169.8 718.2ZM1192.9 717.2 L1200.8 719.7 L1197.9 726.9 L1190.1 724.5ZM1213.2 723.5 L1221.1 726.0 L1218.2 733.2 L1210.3 730.8ZM1233.4 729.8 L1241.3 732.3 L1238.4 739.5 L1230.5 737.1ZM1253.7 736.1 L1261.5 738.6 L1258.6 745.8 L1250.7 743.4ZM1273.9 742.4 L1281.8 744.9 L1278.9 752.1 L1271.0 749.7ZM1294.1 748.7 L1302.0 751.2 L1299.1 758.4 L1291.2 756.0ZM671.5 602.6 L679.3 605.0 L676.7 612.2 L668.9 609.7ZM691.6 608.9 L699.5 611.3 L696.9 618.5 L689.1 616.0ZM711.8 615.1 L719.7 617.6 L717.1 624.7 L709.2 622.3ZM732.0 621.4 L739.9 623.9 L737.3 631.0 L729.4 628.6ZM752.2 627.7 L760.1 630.2 L757.4 637.3 L749.6 634.9ZM772.4 634.0 L780.2 636.5 L777.6 643.6 L769.7 641.2ZM792.6 640.3 L800.4 642.8 L797.8 649.9 L789.9 647.4ZM812.7 646.6 L820.6 649.0 L818.0 656.2 L810.1 653.7ZM832.9 652.9 L840.8 655.3 L838.1 662.5 L830.3 660.0ZM853.1 659.2 L861.0 661.6 L858.3 668.8 L850.4 666.3ZM873.3 665.5 L881.2 667.9 L878.5 675.0 L870.6 672.6ZM893.5 671.8 L901.3 674.2 L898.7 681.3 L890.8 678.9ZM913.6 678.0 L921.5 680.5 L918.8 687.6 L911.0 685.2ZM933.8 684.3 L941.7 686.8 L939.0 693.9 L931.1 691.5ZM954.0 690.6 L961.9 693.1 L959.2 700.2 L951.3 697.7ZM974.2 696.9 L982.1 699.4 L979.3 706.5 L971.5 704.0ZM994.4 703.2 L1002.2 705.7 L999.5 712.8 L991.6 710.3ZM1014.6 709.5 L1022.4 711.9 L1019.7 719.1 L1011.8 716.6ZM1034.7 715.8 L1042.6 718.2 L1039.9 725.3 L1032.0 722.9ZM1054.9 722.1 L1062.8 724.5 L1060.0 731.6 L1052.2 729.2ZM1075.1 728.4 L1083.0 730.8 L1080.2 737.9 L1072.3 735.5ZM1095.3 734.7 L1103.2 737.1 L1100.4 744.2 L1092.5 741.8ZM1115.5 740.9 L1123.3 743.4 L1120.6 750.5 L1112.7 748.0ZM1135.7 747.2 L1143.5 749.7 L1140.7 756.8 L1132.9 754.3ZM1155.8 753.5 L1163.7 756.0 L1160.9 763.1 L1153.0 760.6ZM1176.0 759.8 L1183.9 762.3 L1181.1 769.4 L1173.2 766.9ZM1196.2 766.1 L1204.1 768.6 L1201.2 775.6 L1193.4 773.2ZM1216.4 772.4 L1224.3 774.8 L1221.4 781.9 L1213.6 779.5ZM1236.6 778.7 L1244.4 781.1 L1241.6 788.2 L1233.7 785.8ZM1256.8 785.0 L1264.6 787.4 L1261.8 794.5 L1253.9 792.1ZM1276.9 791.3 L1284.8 793.7 L1281.9 800.8 L1274.1 798.3Z" fill="#e9eaee"/><path d="M657.3 632.5 L666.6 635.4 L661.7 649.0 L652.4 646.1ZM677.5 638.8 L686.7 641.7 L681.8 655.3 L672.5 652.4ZM697.6 645.1 L706.9 648.0 L701.9 661.6 L692.7 658.7ZM717.7 651.3 L727.0 654.2 L722.0 667.8 L712.8 665.0ZM737.9 657.6 L747.1 660.5 L742.2 674.1 L732.9 671.2ZM758.0 663.9 L767.3 666.8 L762.3 680.4 L753.0 677.5ZM778.2 670.2 L787.4 673.1 L782.4 686.7 L773.2 683.8ZM798.3 676.5 L807.6 679.4 L802.5 692.9 L793.3 690.1ZM818.4 682.7 L827.7 685.6 L822.7 699.2 L813.4 696.3ZM838.6 689.0 L847.9 691.9 L842.8 705.5 L833.5 702.6ZM858.7 695.3 L868.0 698.2 L862.9 711.8 L853.6 708.9ZM878.9 701.6 L888.1 704.5 L883.0 718.0 L873.8 715.2ZM899.0 707.9 L908.3 710.8 L903.1 724.3 L893.9 721.4ZM919.2 714.1 L928.4 717.0 L923.3 730.6 L914.0 727.7ZM939.3 720.4 L948.6 723.3 L943.4 736.9 L934.1 734.0ZM959.4 726.7 L968.7 729.6 L963.5 743.1 L954.3 740.3ZM979.6 733.0 L988.8 735.9 L983.6 749.4 L974.4 746.5ZM999.7 739.3 L1009.0 742.1 L1003.8 755.7 L994.5 752.8ZM1019.9 745.5 L1029.1 748.4 L1023.9 762.0 L1014.6 759.1ZM1040.0 751.8 L1049.3 754.7 L1044.0 768.2 L1034.7 765.4ZM1060.1 758.1 L1069.4 761.0 L1064.1 774.5 L1054.9 771.6ZM1080.3 764.4 L1089.5 767.3 L1084.3 780.8 L1075.0 777.9ZM1100.4 770.7 L1109.7 773.5 L1104.4 787.1 L1095.1 784.2ZM1120.6 776.9 L1129.8 779.8 L1124.5 793.3 L1115.2 790.5ZM1140.7 783.2 L1150.0 786.1 L1144.6 799.6 L1135.4 796.7ZM1160.8 789.5 L1170.1 792.4 L1164.7 805.9 L1155.5 803.0ZM1181.0 795.8 L1190.3 798.7 L1184.9 812.2 L1175.6 809.3ZM1201.1 802.1 L1210.4 804.9 L1205.0 818.4 L1195.7 815.5ZM1221.3 808.3 L1230.5 811.2 L1225.1 824.7 L1215.9 821.8ZM1241.4 814.6 L1250.7 817.5 L1245.2 831.0 L1236.0 828.1ZM1261.6 820.9 L1270.8 823.8 L1265.4 837.3 L1256.1 834.4Z" fill="#155baa"/><path d="M666.6 635.4 L668.8 636.1 L663.9 649.7 L661.7 649.0ZM686.7 641.7 L688.9 642.4 L684.0 656.0 L681.8 655.3ZM706.9 648.0 L709.1 648.6 L704.1 662.3 L701.9 661.6ZM727.0 654.2 L729.2 654.9 L724.3 668.5 L722.0 667.8ZM747.1 660.5 L749.4 661.2 L744.4 674.8 L742.2 674.1ZM767.3 666.8 L769.5 667.5 L764.5 681.1 L762.3 680.4ZM787.4 673.1 L789.6 673.8 L784.6 687.4 L782.4 686.7ZM807.6 679.4 L809.8 680.0 L804.7 693.6 L802.5 692.9ZM827.7 685.6 L829.9 686.3 L824.9 699.9 L822.7 699.2ZM847.9 691.9 L850.1 692.6 L845.0 706.2 L842.8 705.5ZM868.0 698.2 L870.2 698.9 L865.1 712.5 L862.9 711.8ZM888.1 704.5 L890.3 705.2 L885.2 718.7 L883.0 718.0ZM908.3 710.8 L910.5 711.4 L905.4 725.0 L903.1 724.3ZM928.4 717.0 L930.6 717.7 L925.5 731.3 L923.3 730.6ZM948.6 723.3 L950.8 724.0 L945.6 737.6 L943.4 736.9ZM968.7 729.6 L970.9 730.3 L965.7 743.8 L963.5 743.1ZM988.8 735.9 L991.1 736.6 L985.9 750.1 L983.6 749.4ZM1009.0 742.1 L1011.2 742.8 L1006.0 756.4 L1003.8 755.7ZM1029.1 748.4 L1031.3 749.1 L1026.1 762.7 L1023.9 762.0ZM1049.3 754.7 L1051.5 755.4 L1046.2 768.9 L1044.0 768.2ZM1069.4 761.0 L1071.6 761.7 L1066.3 775.2 L1064.1 774.5ZM1089.5 767.3 L1091.8 768.0 L1086.5 781.5 L1084.3 780.8ZM1109.7 773.5 L1111.9 774.2 L1106.6 787.8 L1104.4 787.1ZM1129.8 779.8 L1132.0 780.5 L1126.7 794.0 L1124.5 793.3ZM1150.0 786.1 L1152.2 786.8 L1146.8 800.3 L1144.6 799.6ZM1170.1 792.4 L1172.3 793.1 L1167.0 806.6 L1164.7 805.9ZM1190.3 798.7 L1192.5 799.4 L1187.1 812.9 L1184.9 812.2ZM1210.4 804.9 L1212.6 805.6 L1207.2 819.1 L1205.0 818.4ZM1230.5 811.2 L1232.7 811.9 L1227.3 825.4 L1225.1 824.7ZM1250.7 817.5 L1252.9 818.2 L1247.4 831.7 L1245.2 831.0ZM1270.8 823.8 L1273.0 824.5 L1267.6 837.9 L1265.4 837.3Z" fill="#a9553a"/><path d="M650.4 659.9 L658.6 662.4 L656.7 667.9 L648.4 665.3ZM670.5 666.1 L678.7 668.7 L676.8 674.1 L668.5 671.6ZM690.6 672.4 L698.8 675.0 L696.9 680.4 L688.6 677.8ZM710.7 678.7 L718.9 681.2 L717.0 686.7 L708.7 684.1ZM730.8 684.9 L739.1 687.5 L737.1 692.9 L728.8 690.4ZM750.9 691.2 L759.2 693.8 L757.2 699.2 L748.9 696.6ZM771.0 697.5 L779.3 700.0 L777.3 705.5 L769.0 702.9ZM791.1 703.7 L799.4 706.3 L797.4 711.8 L789.1 709.2ZM811.2 710.0 L819.5 712.6 L817.4 718.0 L809.2 715.5ZM831.3 716.3 L839.6 718.9 L837.5 724.3 L829.3 721.7ZM851.4 722.5 L859.7 725.1 L857.6 730.6 L849.4 728.0ZM871.5 728.8 L879.8 731.4 L877.7 736.8 L869.5 734.3ZM891.7 735.1 L899.9 737.7 L897.8 743.1 L889.6 740.5ZM911.8 741.4 L920.0 743.9 L917.9 749.4 L909.7 746.8ZM931.9 747.6 L940.1 750.2 L938.0 755.6 L929.8 753.1ZM952.0 753.9 L960.2 756.5 L958.1 761.9 L949.9 759.3ZM972.1 760.2 L980.3 762.7 L978.2 768.2 L970.0 765.6ZM992.2 766.4 L1000.4 769.0 L998.3 774.4 L990.1 771.9ZM1012.3 772.7 L1020.5 775.3 L1018.4 780.7 L1010.2 778.1ZM1032.4 779.0 L1040.6 781.5 L1038.5 787.0 L1030.3 784.4ZM1052.5 785.2 L1060.7 787.8 L1058.6 793.2 L1050.4 790.7ZM1072.6 791.5 L1080.8 794.1 L1078.7 799.5 L1070.5 796.9ZM1092.7 797.8 L1101.0 800.4 L1098.8 805.8 L1090.6 803.2ZM1112.8 804.1 L1121.1 806.6 L1118.9 812.0 L1110.7 809.5ZM1132.9 810.3 L1141.2 812.9 L1139.0 818.3 L1130.8 815.7ZM1153.0 816.6 L1161.3 819.2 L1159.1 824.6 L1150.9 822.0ZM1173.1 822.9 L1181.4 825.4 L1179.2 830.8 L1171.0 828.3ZM1193.2 829.1 L1201.5 831.7 L1199.3 837.1 L1191.1 834.5ZM1213.3 835.4 L1221.6 838.0 L1219.4 843.4 L1211.2 840.8ZM1233.5 841.7 L1241.7 844.2 L1239.5 849.6 L1231.3 847.1ZM1253.6 847.9 L1261.8 850.5 L1259.6 855.9 L1251.4 853.3Z" fill="#e9eaee"/><path d="M749.8 301.2 L1412.3 507.0 L1403.7 528.1 L742.1 322.5Z" fill="#b45c3e"/><path d="M765.2 306.0 L774.9 309.0 L767.2 330.2 L757.5 327.2ZM785.8 312.4 L795.5 315.4 L787.8 336.7 L778.1 333.6ZM806.3 318.8 L816.2 321.8 L808.5 343.1 L798.6 340.0ZM826.9 325.2 L836.8 328.2 L829.1 349.5 L819.2 346.4ZM847.5 331.5 L857.5 334.6 L849.7 355.9 L839.7 352.8ZM868.1 337.9 L878.1 341.1 L870.3 362.3 L860.3 359.2ZM888.6 344.3 L898.8 347.5 L891.0 368.7 L880.8 365.6ZM909.2 350.7 L919.4 353.9 L911.6 375.1 L901.4 371.9ZM929.8 357.1 L940.1 360.3 L932.2 381.5 L921.9 378.3ZM950.4 363.5 L960.7 366.7 L952.8 387.9 L942.5 384.7ZM970.9 369.9 L981.4 373.2 L973.5 394.3 L963.0 391.1ZM991.5 376.3 L1002.1 379.6 L994.1 400.8 L983.6 397.5ZM1012.1 382.7 L1022.7 386.0 L1014.7 407.2 L1004.1 403.9ZM1032.7 389.1 L1043.4 392.4 L1035.3 413.6 L1024.6 410.3ZM1053.2 395.5 L1064.0 398.8 L1056.0 420.0 L1045.2 416.6ZM1073.8 401.9 L1084.7 405.2 L1076.6 426.4 L1065.7 423.0ZM1094.4 408.3 L1105.3 411.7 L1097.2 432.8 L1086.3 429.4ZM1115.0 414.7 L1126.0 418.1 L1117.8 439.2 L1106.8 435.8ZM1135.5 421.1 L1146.6 424.5 L1138.5 445.6 L1127.4 442.2ZM1156.1 427.4 L1167.3 430.9 L1159.1 452.0 L1147.9 448.6ZM1176.7 433.8 L1187.9 437.3 L1179.7 458.5 L1168.5 455.0ZM1197.3 440.2 L1208.6 443.8 L1200.3 464.9 L1189.0 461.3ZM1217.8 446.6 L1229.3 450.2 L1221.0 471.3 L1209.6 467.7ZM1238.4 453.0 L1249.9 456.6 L1241.6 477.7 L1230.1 474.1ZM1259.0 459.4 L1270.6 463.0 L1262.2 484.1 L1250.7 480.5ZM1279.6 465.8 L1291.2 469.4 L1282.8 490.5 L1271.2 486.9ZM1300.1 472.2 L1311.9 475.8 L1303.5 496.9 L1291.7 493.3ZM1320.7 478.6 L1332.5 482.3 L1324.1 503.3 L1312.3 499.7ZM1341.3 485.0 L1353.2 488.7 L1344.7 509.7 L1332.8 506.0ZM1361.9 491.4 L1373.8 495.1 L1365.3 516.2 L1353.4 512.4ZM1382.4 497.8 L1394.5 501.5 L1386.0 522.6 L1373.9 518.8ZM1403.0 504.2 L1412.3 507.0 L1403.7 528.1 L1394.5 525.2Z" fill="#155baa"/><path d="M784.3 311.9 L785.8 312.4 L778.1 333.6 L776.7 333.2ZM804.9 318.3 L806.3 318.8 L798.6 340.0 L797.2 339.6ZM825.5 324.7 L826.9 325.2 L819.2 346.4 L817.7 346.0ZM846.0 331.1 L847.5 331.5 L839.7 352.8 L838.3 352.3ZM866.6 337.5 L868.1 337.9 L860.3 359.2 L858.8 358.7ZM887.2 343.9 L888.6 344.3 L880.8 365.6 L879.4 365.1ZM907.8 350.3 L909.2 350.7 L901.4 371.9 L899.9 371.5ZM928.3 356.7 L929.8 357.1 L921.9 378.3 L920.5 377.9ZM948.9 363.1 L950.4 363.5 L942.5 384.7 L941.0 384.3ZM969.5 369.5 L970.9 369.9 L963.0 391.1 L961.6 390.7ZM990.1 375.9 L991.5 376.3 L983.6 397.5 L982.1 397.0ZM1010.6 382.2 L1012.1 382.7 L1004.1 403.9 L1002.7 403.4ZM1031.2 388.6 L1032.7 389.1 L1024.6 410.3 L1023.2 409.8ZM1051.8 395.0 L1053.2 395.5 L1045.2 416.6 L1043.8 416.2ZM1072.4 401.4 L1073.8 401.9 L1065.7 423.0 L1064.3 422.6ZM1092.9 407.8 L1094.4 408.3 L1086.3 429.4 L1084.8 429.0ZM1113.5 414.2 L1115.0 414.7 L1106.8 435.8 L1105.4 435.4ZM1134.1 420.6 L1135.5 421.1 L1127.4 442.2 L1125.9 441.7ZM1154.7 427.0 L1156.1 427.4 L1147.9 448.6 L1146.5 448.1ZM1175.2 433.4 L1176.7 433.8 L1168.5 455.0 L1167.0 454.5ZM1195.8 439.8 L1197.3 440.2 L1189.0 461.3 L1187.6 460.9ZM1216.4 446.2 L1217.8 446.6 L1209.6 467.7 L1208.1 467.3ZM1237.0 452.6 L1238.4 453.0 L1230.1 474.1 L1228.7 473.7ZM1257.5 459.0 L1259.0 459.4 L1250.7 480.5 L1249.2 480.1ZM1278.1 465.4 L1279.6 465.8 L1271.2 486.9 L1269.8 486.4ZM1298.7 471.7 L1300.1 472.2 L1291.7 493.3 L1290.3 492.8ZM1319.3 478.1 L1320.7 478.6 L1312.3 499.7 L1310.9 499.2ZM1339.8 484.5 L1341.3 485.0 L1332.8 506.0 L1331.4 505.6ZM1360.4 490.9 L1361.9 491.4 L1353.4 512.4 L1351.9 512.0ZM1381.0 497.3 L1382.4 497.8 L1373.9 518.8 L1372.5 518.4ZM1401.6 503.7 L1403.0 504.2 L1394.5 525.2 L1393.0 524.8Z" fill="#0c3d74"/><path d="M749.8 301.2 L1412.3 507.0 L1403.7 528.1 L742.1 322.5Z" fill="url(#ts0)"/><path d="M734.4 344.0 L1395.1 549.4 L1386.4 570.8 L726.7 365.7Z" fill="#b45c3e"/><path d="M749.8 348.8 L759.5 351.8 L751.6 373.5 L742.0 370.5ZM770.3 355.2 L780.0 358.2 L772.2 379.9 L762.5 376.8ZM790.8 361.5 L800.6 364.6 L792.8 386.3 L783.0 383.2ZM811.4 367.9 L821.2 371.0 L813.4 392.7 L803.5 389.6ZM831.9 374.3 L841.8 377.4 L833.9 399.1 L824.0 396.0ZM852.4 380.7 L862.4 383.8 L854.5 405.4 L844.5 402.3ZM872.9 387.1 L883.0 390.2 L875.1 411.8 L864.9 408.7ZM893.4 393.4 L903.6 396.6 L895.6 418.2 L885.4 415.1ZM913.9 399.8 L924.2 403.0 L916.2 424.6 L905.9 421.4ZM934.5 406.2 L944.8 409.4 L936.8 431.0 L926.4 427.8ZM955.0 412.6 L965.4 415.8 L957.3 437.4 L946.9 434.2ZM975.5 419.0 L986.0 422.2 L977.9 443.8 L967.4 440.6ZM996.0 425.3 L1006.6 428.6 L998.5 450.2 L987.9 446.9ZM1016.5 431.7 L1027.2 435.0 L1019.0 456.6 L1008.4 453.3ZM1037.1 438.1 L1047.8 441.4 L1039.6 463.0 L1028.9 459.7ZM1057.6 444.5 L1068.4 447.8 L1060.2 469.4 L1049.3 466.0ZM1078.1 450.8 L1089.0 454.2 L1080.7 475.8 L1069.8 472.4ZM1098.6 457.2 L1109.6 460.6 L1101.3 482.2 L1090.3 478.8ZM1119.1 463.6 L1130.2 467.0 L1121.9 488.6 L1110.8 485.1ZM1139.6 470.0 L1150.8 473.4 L1142.4 495.0 L1131.3 491.5ZM1160.2 476.4 L1171.4 479.8 L1163.0 501.4 L1151.8 497.9ZM1180.7 482.7 L1192.0 486.2 L1183.6 507.8 L1172.3 504.3ZM1201.2 489.1 L1212.6 492.7 L1204.1 514.2 L1192.8 510.6ZM1221.7 495.5 L1233.2 499.1 L1224.7 520.6 L1213.3 517.0ZM1242.2 501.9 L1253.8 505.5 L1245.3 527.0 L1233.7 523.4ZM1262.7 508.2 L1274.4 511.9 L1265.8 533.4 L1254.2 529.7ZM1283.3 514.6 L1295.0 518.3 L1286.4 539.7 L1274.7 536.1ZM1303.8 521.0 L1315.6 524.7 L1307.0 546.1 L1295.2 542.5ZM1324.3 527.4 L1336.2 531.1 L1327.5 552.5 L1315.7 548.9ZM1344.8 533.8 L1356.8 537.5 L1348.1 558.9 L1336.2 555.2ZM1365.3 540.1 L1377.4 543.9 L1368.7 565.3 L1356.7 561.6ZM1385.8 546.5 L1395.1 549.4 L1386.4 570.8 L1377.2 568.0Z" fill="#155baa"/><path d="M768.9 354.7 L770.3 355.2 L762.5 376.8 L761.1 376.4ZM789.4 361.1 L790.8 361.5 L783.0 383.2 L781.6 382.8ZM809.9 367.5 L811.4 367.9 L803.5 389.6 L802.0 389.1ZM830.4 373.9 L831.9 374.3 L824.0 396.0 L822.5 395.5ZM851.0 380.2 L852.4 380.7 L844.5 402.3 L843.0 401.9ZM871.5 386.6 L872.9 387.1 L864.9 408.7 L863.5 408.3ZM892.0 393.0 L893.4 393.4 L885.4 415.1 L884.0 414.6ZM912.5 399.4 L913.9 399.8 L905.9 421.4 L904.5 421.0ZM933.0 405.7 L934.5 406.2 L926.4 427.8 L925.0 427.4ZM953.5 412.1 L955.0 412.6 L946.9 434.2 L945.5 433.7ZM974.1 418.5 L975.5 419.0 L967.4 440.6 L966.0 440.1ZM994.6 424.9 L996.0 425.3 L987.9 446.9 L986.4 446.5ZM1015.1 431.3 L1016.5 431.7 L1008.4 453.3 L1006.9 452.8ZM1035.6 437.6 L1037.1 438.1 L1028.9 459.7 L1027.4 459.2ZM1056.1 444.0 L1057.6 444.5 L1049.3 466.0 L1047.9 465.6ZM1076.6 450.4 L1078.1 450.8 L1069.8 472.4 L1068.4 472.0ZM1097.2 456.8 L1098.6 457.2 L1090.3 478.8 L1088.9 478.3ZM1117.7 463.2 L1119.1 463.6 L1110.8 485.1 L1109.4 484.7ZM1138.2 469.5 L1139.6 470.0 L1131.3 491.5 L1129.9 491.1ZM1158.7 475.9 L1160.2 476.4 L1151.8 497.9 L1150.4 497.4ZM1179.2 482.3 L1180.7 482.7 L1172.3 504.3 L1170.8 503.8ZM1199.8 488.7 L1201.2 489.1 L1192.8 510.6 L1191.3 510.2ZM1220.3 495.0 L1221.7 495.5 L1213.3 517.0 L1211.8 516.6ZM1240.8 501.4 L1242.2 501.9 L1233.7 523.4 L1232.3 522.9ZM1261.3 507.8 L1262.7 508.2 L1254.2 529.7 L1252.8 529.3ZM1281.8 514.2 L1283.3 514.6 L1274.7 536.1 L1273.3 535.7ZM1302.3 520.6 L1303.8 521.0 L1295.2 542.5 L1293.8 542.0ZM1322.9 526.9 L1324.3 527.4 L1315.7 548.9 L1314.3 548.4ZM1343.4 533.3 L1344.8 533.8 L1336.2 555.2 L1334.7 554.8ZM1363.9 539.7 L1365.3 540.1 L1356.7 561.6 L1355.2 561.1ZM1384.4 546.1 L1385.8 546.5 L1377.2 568.0 L1375.7 567.5Z" fill="#0c3d74"/><path d="M734.4 344.0 L1395.1 549.4 L1386.4 570.8 L726.7 365.7Z" fill="url(#ts1)"/><path d="M719.1 386.8 L1377.9 591.7 L1369.0 613.6 L711.2 408.9Z" fill="#b45c3e"/><path d="M734.4 391.6 L744.0 394.6 L736.1 416.7 L726.5 413.7ZM754.9 398.0 L764.6 401.0 L756.6 423.1 L746.9 420.1ZM775.3 404.3 L785.1 407.4 L777.1 429.5 L767.4 426.4ZM795.8 410.7 L805.7 413.8 L797.6 435.8 L787.8 432.8ZM816.3 417.1 L826.2 420.2 L818.1 442.2 L808.2 439.1ZM836.7 423.4 L846.7 426.5 L838.6 448.6 L828.6 445.5ZM857.2 429.8 L867.3 432.9 L859.2 455.0 L849.1 451.8ZM877.6 436.2 L887.8 439.3 L879.7 461.4 L869.5 458.2ZM898.1 442.5 L908.4 445.7 L900.2 467.7 L889.9 464.6ZM918.6 448.9 L928.9 452.1 L920.7 474.1 L910.4 470.9ZM939.0 455.2 L949.4 458.5 L941.2 480.5 L930.8 477.3ZM959.5 461.6 L970.0 464.9 L961.7 486.9 L951.2 483.6ZM979.9 468.0 L990.5 471.3 L982.2 493.3 L971.7 490.0ZM1000.4 474.3 L1011.1 477.6 L1002.7 499.6 L992.1 496.3ZM1020.9 480.7 L1031.6 484.0 L1023.2 506.0 L1012.5 502.7ZM1041.3 487.1 L1052.1 490.4 L1043.7 512.4 L1032.9 509.0ZM1061.8 493.4 L1072.7 496.8 L1064.2 518.8 L1053.4 515.4ZM1082.2 499.8 L1093.2 503.2 L1084.8 525.2 L1073.8 521.8ZM1102.7 506.1 L1113.8 509.6 L1105.3 531.5 L1094.2 528.1ZM1123.2 512.5 L1134.3 516.0 L1125.8 537.9 L1114.7 534.5ZM1143.6 518.9 L1154.8 522.4 L1146.3 544.3 L1135.1 540.8ZM1164.1 525.2 L1175.4 528.7 L1166.8 550.7 L1155.5 547.2ZM1184.5 531.6 L1195.9 535.1 L1187.3 557.1 L1176.0 553.5ZM1205.0 538.0 L1216.4 541.5 L1207.8 563.4 L1196.4 559.9ZM1225.5 544.3 L1237.0 547.9 L1228.3 569.8 L1216.8 566.2ZM1245.9 550.7 L1257.5 554.3 L1248.8 576.2 L1237.3 572.6ZM1266.4 557.1 L1278.1 560.7 L1269.3 582.6 L1257.7 578.9ZM1286.8 563.4 L1298.6 567.1 L1289.9 589.0 L1278.1 585.3ZM1307.3 569.8 L1319.1 573.5 L1310.4 595.3 L1298.5 591.7ZM1327.8 576.1 L1339.7 579.8 L1330.9 601.7 L1319.0 598.0ZM1348.2 582.5 L1360.2 586.2 L1351.4 608.1 L1339.4 604.4ZM1368.7 588.9 L1377.9 591.7 L1369.0 613.6 L1359.8 610.7Z" fill="#155baa"/><path d="M753.5 397.5 L754.9 398.0 L746.9 420.1 L745.5 419.6ZM773.9 403.9 L775.3 404.3 L767.4 426.4 L765.9 426.0ZM794.4 410.3 L795.8 410.7 L787.8 432.8 L786.4 432.3ZM814.8 416.6 L816.3 417.1 L808.2 439.1 L806.8 438.7ZM835.3 423.0 L836.7 423.4 L828.6 445.5 L827.2 445.0ZM855.8 429.3 L857.2 429.8 L849.1 451.8 L847.6 451.4ZM876.2 435.7 L877.6 436.2 L869.5 458.2 L868.1 457.8ZM896.7 442.1 L898.1 442.5 L889.9 464.6 L888.5 464.1ZM917.1 448.4 L918.6 448.9 L910.4 470.9 L908.9 470.5ZM937.6 454.8 L939.0 455.2 L930.8 477.3 L929.4 476.8ZM958.1 461.2 L959.5 461.6 L951.2 483.6 L949.8 483.2ZM978.5 467.5 L979.9 468.0 L971.7 490.0 L970.2 489.5ZM999.0 473.9 L1000.4 474.3 L992.1 496.3 L990.7 495.9ZM1019.4 480.2 L1020.9 480.7 L1012.5 502.7 L1011.1 502.2ZM1039.9 486.6 L1041.3 487.1 L1032.9 509.0 L1031.5 508.6ZM1060.4 493.0 L1061.8 493.4 L1053.4 515.4 L1051.9 515.0ZM1080.8 499.3 L1082.2 499.8 L1073.8 521.8 L1072.4 521.3ZM1101.3 505.7 L1102.7 506.1 L1094.2 528.1 L1092.8 527.7ZM1121.7 512.1 L1123.2 512.5 L1114.7 534.5 L1113.2 534.0ZM1142.2 518.4 L1143.6 518.9 L1135.1 540.8 L1133.7 540.4ZM1162.7 524.8 L1164.1 525.2 L1155.5 547.2 L1154.1 546.7ZM1183.1 531.2 L1184.5 531.6 L1176.0 553.5 L1174.5 553.1ZM1203.6 537.5 L1205.0 538.0 L1196.4 559.9 L1195.0 559.4ZM1224.0 543.9 L1225.5 544.3 L1216.8 566.2 L1215.4 565.8ZM1244.5 550.2 L1245.9 550.7 L1237.3 572.6 L1235.8 572.1ZM1265.0 556.6 L1266.4 557.1 L1257.7 578.9 L1256.3 578.5ZM1285.4 563.0 L1286.8 563.4 L1278.1 585.3 L1276.7 584.9ZM1305.9 569.3 L1307.3 569.8 L1298.5 591.7 L1297.1 591.2ZM1326.3 575.7 L1327.8 576.1 L1319.0 598.0 L1317.5 597.6ZM1346.8 582.1 L1348.2 582.5 L1339.4 604.4 L1338.0 603.9ZM1367.3 588.4 L1368.7 588.9 L1359.8 610.7 L1358.4 610.3Z" fill="#0c3d74"/><path d="M719.1 386.8 L1377.9 591.7 L1369.0 613.6 L711.2 408.9Z" fill="url(#ts2)"/><path d="M703.7 429.7 L1360.7 634.1 L1351.7 656.3 L695.7 452.2Z" fill="#b45c3e"/><path d="M719.1 434.4 L728.6 437.4 L720.5 459.9 L711.0 456.9ZM739.5 440.8 L749.1 443.8 L741.0 466.3 L731.3 463.3ZM759.9 447.1 L769.6 450.2 L761.4 472.7 L751.7 469.6ZM780.3 453.5 L790.1 456.5 L781.9 479.0 L772.1 476.0ZM800.7 459.8 L810.6 462.9 L802.3 485.4 L792.5 482.3ZM821.1 466.2 L831.0 469.3 L822.8 491.7 L812.8 488.6ZM841.5 472.5 L851.5 475.6 L843.2 498.1 L833.2 495.0ZM861.9 478.9 L872.0 482.0 L863.7 504.5 L853.6 501.3ZM882.3 485.2 L892.5 488.4 L884.2 510.8 L873.9 507.7ZM902.7 491.6 L913.0 494.8 L904.6 517.2 L894.3 514.0ZM923.1 497.9 L933.5 501.1 L925.1 523.6 L914.7 520.3ZM943.5 504.3 L953.9 507.5 L945.5 529.9 L935.1 526.7ZM963.9 510.6 L974.4 513.9 L966.0 536.3 L955.4 533.0ZM984.3 517.0 L994.9 520.3 L986.4 542.7 L975.8 539.4ZM1004.7 523.3 L1015.4 526.6 L1006.9 549.0 L996.2 545.7ZM1025.1 529.6 L1035.9 533.0 L1027.3 555.4 L1016.6 552.0ZM1045.5 536.0 L1056.3 539.4 L1047.8 561.8 L1036.9 558.4ZM1065.9 542.3 L1076.8 545.7 L1068.2 568.1 L1057.3 564.7ZM1086.3 548.7 L1097.3 552.1 L1088.7 574.5 L1077.7 571.1ZM1106.7 555.0 L1117.8 558.5 L1109.1 580.9 L1098.0 577.4ZM1127.1 561.4 L1138.3 564.9 L1129.6 587.2 L1118.4 583.7ZM1147.5 567.7 L1158.8 571.2 L1150.0 593.6 L1138.8 590.1ZM1167.9 574.1 L1179.2 577.6 L1170.5 599.9 L1159.2 596.4ZM1188.3 580.4 L1199.7 584.0 L1190.9 606.3 L1179.5 602.8ZM1208.7 586.8 L1220.2 590.4 L1211.4 612.7 L1199.9 609.1ZM1229.1 593.1 L1240.7 596.7 L1231.8 619.0 L1220.3 615.4ZM1249.5 599.5 L1261.2 603.1 L1252.3 625.4 L1240.7 621.8ZM1269.9 605.8 L1281.6 609.5 L1272.7 631.8 L1261.0 628.1ZM1290.3 612.2 L1302.1 615.8 L1293.2 638.1 L1281.4 634.5ZM1310.7 618.5 L1322.6 622.2 L1313.6 644.5 L1301.8 640.8ZM1331.1 624.9 L1343.1 628.6 L1334.1 650.9 L1322.1 647.1ZM1351.5 631.2 L1360.7 634.1 L1351.7 656.3 L1342.5 653.5Z" fill="#155baa"/><path d="M738.0 440.3 L739.5 440.8 L731.3 463.3 L729.9 462.8ZM758.4 446.7 L759.9 447.1 L751.7 469.6 L750.3 469.2ZM778.8 453.0 L780.3 453.5 L772.1 476.0 L770.7 475.5ZM799.2 459.4 L800.7 459.8 L792.5 482.3 L791.0 481.9ZM819.6 465.7 L821.1 466.2 L812.8 488.6 L811.4 488.2ZM840.0 472.1 L841.5 472.5 L833.2 495.0 L831.8 494.5ZM860.4 478.4 L861.9 478.9 L853.6 501.3 L852.1 500.9ZM880.8 484.8 L882.3 485.2 L873.9 507.7 L872.5 507.2ZM901.2 491.1 L902.7 491.6 L894.3 514.0 L892.9 513.6ZM921.6 497.5 L923.1 497.9 L914.7 520.3 L913.3 519.9ZM942.1 503.8 L943.5 504.3 L935.1 526.7 L933.6 526.2ZM962.5 510.2 L963.9 510.6 L955.4 533.0 L954.0 532.6ZM982.9 516.5 L984.3 517.0 L975.8 539.4 L974.4 538.9ZM1003.3 522.9 L1004.7 523.3 L996.2 545.7 L994.8 545.3ZM1023.7 529.2 L1025.1 529.6 L1016.6 552.0 L1015.1 551.6ZM1044.1 535.6 L1045.5 536.0 L1036.9 558.4 L1035.5 557.9ZM1064.5 541.9 L1065.9 542.3 L1057.3 564.7 L1055.9 564.3ZM1084.9 548.2 L1086.3 548.7 L1077.7 571.1 L1076.2 570.6ZM1105.3 554.6 L1106.7 555.0 L1098.0 577.4 L1096.6 577.0ZM1125.7 560.9 L1127.1 561.4 L1118.4 583.7 L1117.0 583.3ZM1146.1 567.3 L1147.5 567.7 L1138.8 590.1 L1137.4 589.6ZM1166.5 573.6 L1167.9 574.1 L1159.2 596.4 L1157.7 596.0ZM1186.9 580.0 L1188.3 580.4 L1179.5 602.8 L1178.1 602.3ZM1207.3 586.3 L1208.7 586.8 L1199.9 609.1 L1198.5 608.7ZM1227.7 592.7 L1229.1 593.1 L1220.3 615.4 L1218.9 615.0ZM1248.1 599.0 L1249.5 599.5 L1240.7 621.8 L1239.2 621.3ZM1268.5 605.4 L1269.9 605.8 L1261.0 628.1 L1259.6 627.7ZM1288.9 611.7 L1290.3 612.2 L1281.4 634.5 L1280.0 634.0ZM1309.3 618.1 L1310.7 618.5 L1301.8 640.8 L1300.3 640.4ZM1329.7 624.4 L1331.1 624.9 L1322.1 647.1 L1320.7 646.7ZM1350.1 630.8 L1351.5 631.2 L1342.5 653.5 L1341.1 653.0Z" fill="#0c3d74"/><path d="M703.7 429.7 L1360.7 634.1 L1351.7 656.3 L695.7 452.2Z" fill="url(#ts3)"/><path d="M688.4 472.5 L1343.5 676.4 L1334.3 699.1 L680.2 495.4Z" fill="#b45c3e"/><path d="M703.7 477.2 L713.2 480.2 L705.0 503.1 L695.4 500.2ZM724.0 483.6 L733.7 486.6 L725.4 509.5 L715.8 506.5ZM744.4 489.9 L754.1 492.9 L745.8 515.8 L736.1 512.8ZM764.7 496.2 L774.5 499.3 L766.2 522.2 L756.4 519.1ZM785.1 502.6 L794.9 505.7 L786.6 528.5 L776.7 525.5ZM805.4 508.9 L815.4 512.0 L807.0 534.9 L797.0 531.8ZM825.7 515.2 L835.8 518.4 L827.3 541.2 L817.3 538.1ZM846.1 521.6 L856.2 524.7 L847.7 547.6 L837.6 544.4ZM866.4 527.9 L876.6 531.1 L868.1 553.9 L858.0 550.8ZM886.8 534.2 L897.1 537.4 L888.5 560.3 L878.3 557.1ZM907.1 540.6 L917.5 543.8 L908.9 566.6 L898.6 563.4ZM927.5 546.9 L937.9 550.2 L929.3 573.0 L918.9 569.7ZM947.8 553.2 L958.3 556.5 L949.7 579.3 L939.2 576.1ZM968.2 559.6 L978.7 562.9 L970.1 585.7 L959.5 582.4ZM988.5 565.9 L999.2 569.2 L990.5 592.0 L979.8 588.7ZM1008.9 572.2 L1019.6 575.6 L1010.9 598.4 L1000.2 595.0ZM1029.2 578.6 L1040.0 581.9 L1031.3 604.7 L1020.5 601.4ZM1049.5 584.9 L1060.4 588.3 L1051.7 611.1 L1040.8 607.7ZM1069.9 591.2 L1080.9 594.7 L1072.1 617.4 L1061.1 614.0ZM1090.2 597.6 L1101.3 601.0 L1092.5 623.8 L1081.4 620.3ZM1110.6 603.9 L1121.7 607.4 L1112.9 630.1 L1101.7 626.7ZM1130.9 610.2 L1142.1 613.7 L1133.2 636.5 L1122.0 633.0ZM1151.3 616.6 L1162.6 620.1 L1153.6 642.8 L1142.4 639.3ZM1171.6 622.9 L1183.0 626.4 L1174.0 649.2 L1162.7 645.6ZM1192.0 629.2 L1203.4 632.8 L1194.4 655.5 L1183.0 652.0ZM1212.3 635.6 L1223.8 639.2 L1214.8 661.9 L1203.3 658.3ZM1232.7 641.9 L1244.3 645.5 L1235.2 668.2 L1223.6 664.6ZM1253.0 648.2 L1264.7 651.9 L1255.6 674.6 L1243.9 670.9ZM1273.3 654.6 L1285.1 658.2 L1276.0 680.9 L1264.3 677.3ZM1293.7 660.9 L1305.5 664.6 L1296.4 687.3 L1284.6 683.6ZM1314.0 667.2 L1326.0 670.9 L1316.8 693.6 L1304.9 689.9ZM1334.4 673.6 L1343.5 676.4 L1334.3 699.1 L1325.2 696.2Z" fill="#155baa"/><path d="M722.6 483.1 L724.0 483.6 L715.8 506.5 L714.3 506.1ZM742.9 489.5 L744.4 489.9 L736.1 512.8 L734.6 512.4ZM763.3 495.8 L764.7 496.2 L756.4 519.1 L755.0 518.7ZM783.6 502.1 L785.1 502.6 L776.7 525.5 L775.3 525.0ZM804.0 508.5 L805.4 508.9 L797.0 531.8 L795.6 531.4ZM824.3 514.8 L825.7 515.2 L817.3 538.1 L815.9 537.7ZM844.7 521.1 L846.1 521.6 L837.6 544.4 L836.2 544.0ZM865.0 527.5 L866.4 527.9 L858.0 550.8 L856.5 550.3ZM885.4 533.8 L886.8 534.2 L878.3 557.1 L876.8 556.7ZM905.7 540.1 L907.1 540.6 L898.6 563.4 L897.2 563.0ZM926.0 546.5 L927.5 546.9 L918.9 569.7 L917.5 569.3ZM946.4 552.8 L947.8 553.2 L939.2 576.1 L937.8 575.6ZM966.7 559.1 L968.2 559.6 L959.5 582.4 L958.1 582.0ZM987.1 565.5 L988.5 565.9 L979.8 588.7 L978.4 588.3ZM1007.4 571.8 L1008.9 572.2 L1000.2 595.0 L998.7 594.6ZM1027.8 578.1 L1029.2 578.6 L1020.5 601.4 L1019.1 600.9ZM1048.1 584.5 L1049.5 584.9 L1040.8 607.7 L1039.4 607.3ZM1068.5 590.8 L1069.9 591.2 L1061.1 614.0 L1059.7 613.6ZM1088.8 597.1 L1090.2 597.6 L1081.4 620.3 L1080.0 619.9ZM1109.2 603.5 L1110.6 603.9 L1101.7 626.7 L1100.3 626.2ZM1129.5 609.8 L1130.9 610.2 L1122.0 633.0 L1120.6 632.6ZM1149.8 616.1 L1151.3 616.6 L1142.4 639.3 L1140.9 638.9ZM1170.2 622.5 L1171.6 622.9 L1162.7 645.6 L1161.3 645.2ZM1190.5 628.8 L1192.0 629.2 L1183.0 652.0 L1181.6 651.5ZM1210.9 635.1 L1212.3 635.6 L1203.3 658.3 L1201.9 657.9ZM1231.2 641.5 L1232.7 641.9 L1223.6 664.6 L1222.2 664.2ZM1251.6 647.8 L1253.0 648.2 L1243.9 670.9 L1242.5 670.5ZM1271.9 654.1 L1273.3 654.6 L1264.3 677.3 L1262.8 676.8ZM1292.3 660.5 L1293.7 660.9 L1284.6 683.6 L1283.1 683.2ZM1312.6 666.8 L1314.0 667.2 L1304.9 689.9 L1303.5 689.5ZM1333.0 673.1 L1334.4 673.6 L1325.2 696.2 L1323.8 695.8Z" fill="#0c3d74"/><path d="M688.4 472.5 L1343.5 676.4 L1334.3 699.1 L680.2 495.4Z" fill="url(#ts4)"/><path d="M673.1 515.3 L1326.4 718.8 L1317.0 741.8 L664.7 538.7Z" fill="#b45c3e"/><path d="M688.3 520.1 L697.8 523.0 L689.4 546.4 L679.9 543.4ZM708.6 526.4 L718.2 529.4 L709.8 552.7 L700.2 549.7ZM728.9 532.7 L738.6 535.7 L730.1 559.0 L720.4 556.0ZM749.2 539.0 L758.9 542.1 L750.4 565.4 L740.7 562.3ZM769.4 545.3 L779.3 548.4 L770.8 571.7 L760.9 568.6ZM789.7 551.7 L799.7 554.7 L791.1 578.0 L781.2 575.0ZM810.0 558.0 L820.0 561.1 L811.4 584.4 L801.5 581.3ZM830.3 564.3 L840.4 567.4 L831.8 590.7 L821.7 587.6ZM850.6 570.6 L860.8 573.8 L852.1 597.0 L842.0 593.9ZM870.9 576.9 L881.1 580.1 L872.4 603.4 L862.2 600.2ZM891.2 583.2 L901.5 586.5 L892.8 609.7 L882.5 606.5ZM911.5 589.6 L921.9 592.8 L913.1 616.0 L902.7 612.8ZM931.8 595.9 L942.2 599.1 L933.5 622.4 L923.0 619.1ZM952.0 602.2 L962.6 605.5 L953.8 628.7 L943.2 625.4ZM972.3 608.5 L983.0 611.8 L974.1 635.1 L963.5 631.7ZM992.6 614.8 L1003.3 618.2 L994.5 641.4 L983.8 638.1ZM1012.9 621.2 L1023.7 624.5 L1014.8 647.7 L1004.0 644.4ZM1033.2 627.5 L1044.1 630.9 L1035.1 654.1 L1024.3 650.7ZM1053.5 633.8 L1064.4 637.2 L1055.5 660.4 L1044.5 657.0ZM1073.8 640.1 L1084.8 643.5 L1075.8 666.7 L1064.8 663.3ZM1094.1 646.4 L1105.2 649.9 L1096.1 673.1 L1085.0 669.6ZM1114.3 652.7 L1125.5 656.2 L1116.5 679.4 L1105.3 675.9ZM1134.6 659.1 L1145.9 662.6 L1136.8 685.7 L1125.6 682.2ZM1154.9 665.4 L1166.3 668.9 L1157.1 692.1 L1145.8 688.5ZM1175.2 671.7 L1186.6 675.3 L1177.5 698.4 L1166.1 694.8ZM1195.5 678.0 L1207.0 681.6 L1197.8 704.7 L1186.3 701.2ZM1215.8 684.3 L1227.4 687.9 L1218.1 711.1 L1206.6 707.5ZM1236.1 690.7 L1247.7 694.3 L1238.5 717.4 L1226.8 713.8ZM1256.4 697.0 L1268.1 700.6 L1258.8 723.7 L1247.1 720.1ZM1276.6 703.3 L1288.5 707.0 L1279.2 730.1 L1267.4 726.4ZM1296.9 709.6 L1308.8 713.3 L1299.5 736.4 L1287.6 732.7ZM1317.2 715.9 L1326.4 718.8 L1317.0 741.8 L1307.9 739.0Z" fill="#155baa"/><path d="M707.2 525.9 L708.6 526.4 L700.2 549.7 L698.7 549.3ZM727.4 532.3 L728.9 532.7 L720.4 556.0 L719.0 555.6ZM747.7 538.6 L749.2 539.0 L740.7 562.3 L739.3 561.9ZM768.0 544.9 L769.4 545.3 L760.9 568.6 L759.5 568.2ZM788.3 551.2 L789.7 551.7 L781.2 575.0 L779.8 574.5ZM808.6 557.5 L810.0 558.0 L801.5 581.3 L800.0 580.8ZM828.9 563.8 L830.3 564.3 L821.7 587.6 L820.3 587.1ZM849.2 570.2 L850.6 570.6 L842.0 593.9 L840.5 593.4ZM869.5 576.5 L870.9 576.9 L862.2 600.2 L860.8 599.8ZM889.8 582.8 L891.2 583.2 L882.5 606.5 L881.1 606.1ZM910.0 589.1 L911.5 589.6 L902.7 612.8 L901.3 612.4ZM930.3 595.4 L931.8 595.9 L923.0 619.1 L921.6 618.7ZM950.6 601.8 L952.0 602.2 L943.2 625.4 L941.8 625.0ZM970.9 608.1 L972.3 608.5 L963.5 631.7 L962.1 631.3ZM991.2 614.4 L992.6 614.8 L983.8 638.1 L982.3 637.6ZM1011.5 620.7 L1012.9 621.2 L1004.0 644.4 L1002.6 643.9ZM1031.8 627.0 L1033.2 627.5 L1024.3 650.7 L1022.9 650.2ZM1052.1 633.3 L1053.5 633.8 L1044.5 657.0 L1043.1 656.5ZM1072.3 639.7 L1073.8 640.1 L1064.8 663.3 L1063.4 662.9ZM1092.6 646.0 L1094.1 646.4 L1085.0 669.6 L1083.6 669.2ZM1112.9 652.3 L1114.3 652.7 L1105.3 675.9 L1103.9 675.5ZM1133.2 658.6 L1134.6 659.1 L1125.6 682.2 L1124.1 681.8ZM1153.5 664.9 L1154.9 665.4 L1145.8 688.5 L1144.4 688.1ZM1173.8 671.3 L1175.2 671.7 L1166.1 694.8 L1164.7 694.4ZM1194.1 677.6 L1195.5 678.0 L1186.3 701.2 L1184.9 700.7ZM1214.4 683.9 L1215.8 684.3 L1206.6 707.5 L1205.2 707.0ZM1234.7 690.2 L1236.1 690.7 L1226.8 713.8 L1225.4 713.3ZM1254.9 696.5 L1256.4 697.0 L1247.1 720.1 L1245.7 719.6ZM1275.2 702.8 L1276.6 703.3 L1267.4 726.4 L1265.9 725.9ZM1295.5 709.2 L1296.9 709.6 L1287.6 732.7 L1286.2 732.3ZM1315.8 715.5 L1317.2 715.9 L1307.9 739.0 L1306.5 738.6Z" fill="#0c3d74"/><path d="M673.1 515.3 L1326.4 718.8 L1317.0 741.8 L664.7 538.7Z" fill="url(#ts5)"/><path d="M657.7 558.2 L1309.2 761.1 L1299.6 784.6 L649.2 581.9Z" fill="#b45c3e"/><path d="M672.9 562.9 L682.4 565.8 L673.9 589.6 L664.4 586.6ZM693.1 569.2 L702.7 572.2 L694.2 595.9 L684.6 592.9ZM713.4 575.5 L723.0 578.5 L714.4 602.2 L704.8 599.2ZM733.6 581.8 L743.4 584.8 L734.7 608.6 L725.0 605.5ZM753.8 588.1 L763.7 591.2 L755.0 614.9 L745.2 611.8ZM774.1 594.4 L784.0 597.5 L775.3 621.2 L765.4 618.1ZM794.3 600.7 L804.3 603.8 L795.5 627.5 L785.6 624.4ZM814.5 607.0 L824.6 610.1 L815.8 633.8 L805.8 630.7ZM834.8 613.3 L844.9 616.5 L836.1 640.2 L826.0 637.0ZM855.0 619.6 L865.2 622.8 L856.4 646.5 L846.2 643.3ZM875.2 625.9 L885.5 629.1 L876.6 652.8 L866.4 649.6ZM895.5 632.2 L905.8 635.4 L896.9 659.1 L886.6 655.9ZM915.7 638.5 L926.1 641.8 L917.2 665.4 L906.8 662.2ZM935.9 644.8 L946.4 648.1 L937.5 671.7 L927.0 668.5ZM956.1 651.1 L966.8 654.4 L957.8 678.1 L947.2 674.8ZM976.4 657.4 L987.1 660.8 L978.0 684.4 L967.4 681.1ZM996.6 663.7 L1007.4 667.1 L998.3 690.7 L987.6 687.4ZM1016.8 670.0 L1027.7 673.4 L1018.6 697.0 L1007.8 693.6ZM1037.1 676.3 L1048.0 679.7 L1038.9 703.3 L1028.0 699.9ZM1057.3 682.6 L1068.3 686.1 L1059.1 709.7 L1048.2 706.2ZM1077.5 688.9 L1088.6 692.4 L1079.4 716.0 L1068.4 712.5ZM1097.8 695.2 L1108.9 698.7 L1099.7 722.3 L1088.6 718.8ZM1118.0 701.5 L1129.2 705.0 L1120.0 728.6 L1108.8 725.1ZM1138.2 707.9 L1149.5 711.4 L1140.3 734.9 L1129.0 731.4ZM1158.5 714.2 L1169.8 717.7 L1160.5 741.3 L1149.2 737.7ZM1178.7 720.5 L1190.2 724.0 L1180.8 747.6 L1169.4 744.0ZM1198.9 726.8 L1210.5 730.4 L1201.1 753.9 L1189.6 750.3ZM1219.1 733.1 L1230.8 736.7 L1221.4 760.2 L1209.8 756.6ZM1239.4 739.4 L1251.1 743.0 L1241.6 766.5 L1230.0 762.9ZM1259.6 745.7 L1271.4 749.3 L1261.9 772.8 L1250.2 769.2ZM1279.8 752.0 L1291.7 755.7 L1282.2 779.2 L1270.4 775.5ZM1300.1 758.3 L1309.2 761.1 L1299.6 784.6 L1290.6 781.8Z" fill="#155baa"/><path d="M691.7 568.7 L693.1 569.2 L684.6 592.9 L683.2 592.5ZM712.0 575.0 L713.4 575.5 L704.8 599.2 L703.4 598.8ZM732.2 581.4 L733.6 581.8 L725.0 605.5 L723.6 605.1ZM752.4 587.7 L753.8 588.1 L745.2 611.8 L743.8 611.4ZM772.7 594.0 L774.1 594.4 L765.4 618.1 L764.0 617.7ZM792.9 600.3 L794.3 600.7 L785.6 624.4 L784.2 624.0ZM813.1 606.6 L814.5 607.0 L805.8 630.7 L804.4 630.3ZM833.3 612.9 L834.8 613.3 L826.0 637.0 L824.6 636.6ZM853.6 619.2 L855.0 619.6 L846.2 643.3 L844.8 642.9ZM873.8 625.5 L875.2 625.9 L866.4 649.6 L865.0 649.1ZM894.0 631.8 L895.5 632.2 L886.6 655.9 L885.2 655.4ZM914.3 638.1 L915.7 638.5 L906.8 662.2 L905.4 661.7ZM934.5 644.4 L935.9 644.8 L927.0 668.5 L925.6 668.0ZM954.7 650.7 L956.1 651.1 L947.2 674.8 L945.8 674.3ZM975.0 657.0 L976.4 657.4 L967.4 681.1 L966.0 680.6ZM995.2 663.3 L996.6 663.7 L987.6 687.4 L986.2 686.9ZM1015.4 669.6 L1016.8 670.0 L1007.8 693.6 L1006.4 693.2ZM1035.7 675.9 L1037.1 676.3 L1028.0 699.9 L1026.6 699.5ZM1055.9 682.2 L1057.3 682.6 L1048.2 706.2 L1046.8 705.8ZM1076.1 688.5 L1077.5 688.9 L1068.4 712.5 L1066.9 712.1ZM1096.3 694.8 L1097.8 695.2 L1088.6 718.8 L1087.1 718.4ZM1116.6 701.1 L1118.0 701.5 L1108.8 725.1 L1107.3 724.7ZM1136.8 707.4 L1138.2 707.9 L1129.0 731.4 L1127.5 731.0ZM1157.0 713.7 L1158.5 714.2 L1149.2 737.7 L1147.7 737.3ZM1177.3 720.0 L1178.7 720.5 L1169.4 744.0 L1167.9 743.6ZM1197.5 726.3 L1198.9 726.8 L1189.6 750.3 L1188.1 749.9ZM1217.7 732.6 L1219.1 733.1 L1209.8 756.6 L1208.3 756.2ZM1238.0 738.9 L1239.4 739.4 L1230.0 762.9 L1228.5 762.4ZM1258.2 745.2 L1259.6 745.7 L1250.2 769.2 L1248.7 768.7ZM1278.4 751.5 L1279.8 752.0 L1270.4 775.5 L1268.9 775.0ZM1298.7 757.8 L1300.1 758.3 L1290.6 781.8 L1289.1 781.3Z" fill="#0c3d74"/><path d="M657.7 558.2 L1309.2 761.1 L1299.6 784.6 L649.2 581.9Z" fill="url(#ts6)"/><path d="M642.4 601.0 L1292.0 803.5 L1282.3 827.4 L633.7 625.2Z" fill="#b45c3e"/><path d="M657.5 605.7 L667.0 608.7 L658.3 632.8 L648.9 629.9ZM677.7 612.0 L687.3 615.0 L678.5 639.1 L669.0 636.2ZM697.9 618.3 L707.5 621.3 L698.8 645.4 L689.1 642.4ZM718.1 624.6 L727.8 627.6 L719.0 651.7 L709.3 648.7ZM738.2 630.9 L748.0 633.9 L739.2 658.0 L729.4 655.0ZM758.4 637.1 L768.3 640.2 L759.4 664.3 L749.6 661.3ZM778.6 643.4 L788.5 646.5 L779.6 670.6 L769.7 667.5ZM798.8 649.7 L808.8 652.8 L799.9 677.0 L789.8 673.8ZM818.9 656.0 L829.0 659.2 L820.1 683.3 L810.0 680.1ZM839.1 662.3 L849.3 665.5 L840.3 689.6 L830.1 686.4ZM859.3 668.6 L869.5 671.8 L860.5 695.9 L850.3 692.7ZM879.4 674.9 L889.8 678.1 L880.7 702.2 L870.4 698.9ZM899.6 681.2 L910.0 684.4 L901.0 708.5 L890.5 705.2ZM919.8 687.4 L930.3 690.7 L921.2 714.8 L910.7 711.5ZM940.0 693.7 L950.5 697.0 L941.4 721.1 L930.8 717.8ZM960.1 700.0 L970.8 703.3 L961.6 727.4 L951.0 724.1ZM980.3 706.3 L991.0 709.7 L981.8 733.7 L971.1 730.3ZM1000.5 712.6 L1011.3 716.0 L1002.0 740.0 L991.3 736.6ZM1020.7 718.9 L1031.5 722.3 L1022.3 746.3 L1011.4 742.9ZM1040.8 725.2 L1051.8 728.6 L1042.5 752.6 L1031.5 749.2ZM1061.0 731.5 L1072.1 734.9 L1062.7 758.9 L1051.7 755.5ZM1081.2 737.7 L1092.3 741.2 L1082.9 765.2 L1071.8 761.7ZM1101.4 744.0 L1112.6 747.5 L1103.1 771.5 L1092.0 768.0ZM1121.5 750.3 L1132.8 753.8 L1123.4 777.8 L1112.1 774.3ZM1141.7 756.6 L1153.1 760.1 L1143.6 784.1 L1132.2 780.6ZM1161.9 762.9 L1173.3 766.5 L1163.8 790.4 L1152.4 786.9ZM1182.0 769.2 L1193.6 772.8 L1184.0 796.7 L1172.5 793.1ZM1202.2 775.5 L1213.8 779.1 L1204.2 803.0 L1192.7 799.4ZM1222.4 781.8 L1234.1 785.4 L1224.5 809.3 L1212.8 805.7ZM1242.6 788.0 L1254.3 791.7 L1244.7 815.6 L1233.0 812.0ZM1262.7 794.3 L1274.6 798.0 L1264.9 821.9 L1253.1 818.3ZM1282.9 800.6 L1292.0 803.5 L1282.3 827.4 L1273.2 824.5Z" fill="#155baa"/><path d="M676.3 611.6 L677.7 612.0 L669.0 636.2 L667.6 635.7ZM696.5 617.8 L697.9 618.3 L689.1 642.4 L687.7 642.0ZM716.6 624.1 L718.1 624.6 L709.3 648.7 L707.9 648.3ZM736.8 630.4 L738.2 630.9 L729.4 655.0 L728.0 654.6ZM757.0 636.7 L758.4 637.1 L749.6 661.3 L748.2 660.8ZM777.2 643.0 L778.6 643.4 L769.7 667.5 L768.3 667.1ZM797.3 649.3 L798.8 649.7 L789.8 673.8 L788.4 673.4ZM817.5 655.6 L818.9 656.0 L810.0 680.1 L808.6 679.7ZM837.7 661.9 L839.1 662.3 L830.1 686.4 L828.7 685.9ZM857.9 668.1 L859.3 668.6 L850.3 692.7 L848.9 692.2ZM878.0 674.4 L879.4 674.9 L870.4 698.9 L869.0 698.5ZM898.2 680.7 L899.6 681.2 L890.5 705.2 L889.1 704.8ZM918.4 687.0 L919.8 687.4 L910.7 711.5 L909.3 711.1ZM938.6 693.3 L940.0 693.7 L930.8 717.8 L929.4 717.3ZM958.7 699.6 L960.1 700.0 L951.0 724.1 L949.6 723.6ZM978.9 705.9 L980.3 706.3 L971.1 730.3 L969.7 729.9ZM999.1 712.2 L1000.5 712.6 L991.3 736.6 L989.8 736.2ZM1019.2 718.4 L1020.7 718.9 L1011.4 742.9 L1010.0 742.5ZM1039.4 724.7 L1040.8 725.2 L1031.5 749.2 L1030.1 748.7ZM1059.6 731.0 L1061.0 731.5 L1051.7 755.5 L1050.3 755.0ZM1079.8 737.3 L1081.2 737.7 L1071.8 761.7 L1070.4 761.3ZM1099.9 743.6 L1101.4 744.0 L1092.0 768.0 L1090.6 767.6ZM1120.1 749.9 L1121.5 750.3 L1112.1 774.3 L1110.7 773.9ZM1140.3 756.2 L1141.7 756.6 L1132.2 780.6 L1130.8 780.1ZM1160.5 762.5 L1161.9 762.9 L1152.4 786.9 L1151.0 786.4ZM1180.6 768.7 L1182.0 769.2 L1172.5 793.1 L1171.1 792.7ZM1200.8 775.0 L1202.2 775.5 L1192.7 799.4 L1191.3 799.0ZM1221.0 781.3 L1222.4 781.8 L1212.8 805.7 L1211.4 805.3ZM1241.2 787.6 L1242.6 788.0 L1233.0 812.0 L1231.5 811.5ZM1261.3 793.9 L1262.7 794.3 L1253.1 818.3 L1251.7 817.8ZM1281.5 800.2 L1282.9 800.6 L1273.2 824.5 L1271.8 824.1Z" fill="#0c3d74"/><path d="M642.4 601.0 L1292.0 803.5 L1282.3 827.4 L633.7 625.2Z" fill="url(#ts7)"/><path d="M622.9 655.5 L1275.2 858.9 L1264.9 884.2 L613.7 681.1Z" fill="#b45c3e"/><path d="M638.0 660.2 L649.6 663.8 L640.4 689.4 L628.8 685.8ZM658.1 666.4 L669.8 670.1 L660.6 695.7 L648.9 692.0ZM678.2 672.7 L690.0 676.4 L680.7 702.0 L668.9 698.3ZM698.3 679.0 L710.2 682.7 L700.9 708.2 L689.0 704.5ZM718.4 685.2 L730.4 689.0 L721.0 714.5 L709.1 710.8ZM738.5 691.5 L750.5 695.3 L741.1 720.8 L729.1 717.1ZM758.6 697.8 L770.7 701.5 L761.3 727.1 L749.2 723.3ZM778.7 704.0 L790.9 707.8 L781.4 733.4 L769.2 729.6ZM798.8 710.3 L811.1 714.1 L801.6 739.7 L789.3 735.8ZM818.9 716.6 L831.2 720.4 L821.7 745.9 L809.4 742.1ZM839.0 722.8 L851.4 726.7 L841.9 752.2 L829.4 748.4ZM859.1 729.1 L871.6 733.0 L862.0 758.5 L849.5 754.6ZM879.2 735.4 L891.8 739.3 L882.2 764.8 L869.6 760.9ZM899.3 741.6 L912.0 745.6 L902.3 771.1 L889.6 767.1ZM919.4 747.9 L932.1 751.9 L922.4 777.4 L909.7 773.4ZM939.5 754.2 L952.3 758.2 L942.6 783.6 L929.8 779.7ZM959.6 760.5 L972.5 764.5 L962.7 789.9 L949.8 785.9ZM979.7 766.7 L992.7 770.8 L982.9 796.2 L969.9 792.2ZM999.8 773.0 L1012.9 777.1 L1003.0 802.5 L990.0 798.4ZM1019.9 779.3 L1033.0 783.4 L1023.2 808.8 L1010.0 804.7ZM1040.0 785.5 L1053.2 789.6 L1043.3 815.1 L1030.1 810.9ZM1060.1 791.8 L1073.4 795.9 L1063.4 821.3 L1050.2 817.2ZM1080.2 798.1 L1093.6 802.2 L1083.6 827.6 L1070.2 823.5ZM1100.3 804.3 L1113.7 808.5 L1103.7 833.9 L1090.3 829.7ZM1120.4 810.6 L1133.9 814.8 L1123.9 840.2 L1110.4 836.0ZM1140.5 816.9 L1154.1 821.1 L1144.0 846.5 L1130.4 842.2ZM1160.6 823.1 L1174.3 827.4 L1164.2 852.8 L1150.5 848.5ZM1180.7 829.4 L1194.5 833.7 L1184.3 859.1 L1170.6 854.8ZM1200.8 835.7 L1214.6 840.0 L1204.5 865.3 L1190.6 861.0ZM1220.9 841.9 L1234.8 846.3 L1224.6 871.6 L1210.7 867.3ZM1241.0 848.2 L1255.0 852.6 L1244.7 877.9 L1230.8 873.5ZM1261.1 854.5 L1275.2 858.9 L1264.9 884.2 L1250.8 879.8Z" fill="#155baa"/><path d="M656.7 666.0 L658.1 666.4 L648.9 692.0 L647.4 691.6ZM676.8 672.3 L678.2 672.7 L668.9 698.3 L667.5 697.8ZM696.9 678.5 L698.3 679.0 L689.0 704.5 L687.6 704.1ZM717.0 684.8 L718.4 685.2 L709.1 710.8 L707.6 710.4ZM737.1 691.1 L738.5 691.5 L729.1 717.1 L727.7 716.6ZM757.2 697.3 L758.6 697.8 L749.2 723.3 L747.8 722.9ZM777.3 703.6 L778.7 704.0 L769.2 729.6 L767.8 729.1ZM797.4 709.9 L798.8 710.3 L789.3 735.8 L787.9 735.4ZM817.5 716.1 L818.9 716.6 L809.4 742.1 L808.0 741.7ZM837.6 722.4 L839.0 722.8 L829.4 748.4 L828.0 747.9ZM857.7 728.7 L859.1 729.1 L849.5 754.6 L848.1 754.2ZM877.8 734.9 L879.2 735.4 L869.6 760.9 L868.2 760.4ZM897.9 741.2 L899.3 741.6 L889.6 767.1 L888.2 766.7ZM918.0 747.5 L919.4 747.9 L909.7 773.4 L908.3 773.0ZM938.1 753.7 L939.5 754.2 L929.8 779.7 L928.4 779.2ZM958.2 760.0 L959.6 760.5 L949.8 785.9 L948.4 785.5ZM978.3 766.3 L979.7 766.7 L969.9 792.2 L968.5 791.7ZM998.4 772.6 L999.8 773.0 L990.0 798.4 L988.6 798.0ZM1018.5 778.8 L1019.9 779.3 L1010.0 804.7 L1008.6 804.3ZM1038.6 785.1 L1040.0 785.5 L1030.1 810.9 L1028.7 810.5ZM1058.7 791.4 L1060.1 791.8 L1050.2 817.2 L1048.8 816.8ZM1078.8 797.6 L1080.2 798.1 L1070.2 823.5 L1068.8 823.0ZM1098.9 803.9 L1100.3 804.3 L1090.3 829.7 L1088.9 829.3ZM1119.0 810.2 L1120.4 810.6 L1110.4 836.0 L1109.0 835.5ZM1139.1 816.4 L1140.5 816.9 L1130.4 842.2 L1129.0 841.8ZM1159.2 822.7 L1160.6 823.1 L1150.5 848.5 L1149.1 848.1ZM1179.3 829.0 L1180.7 829.4 L1170.6 854.8 L1169.2 854.3ZM1199.4 835.2 L1200.8 835.7 L1190.6 861.0 L1189.2 860.6ZM1219.5 841.5 L1220.9 841.9 L1210.7 867.3 L1209.3 866.8ZM1239.6 847.8 L1241.0 848.2 L1230.8 873.5 L1229.4 873.1ZM1259.7 854.0 L1261.1 854.5 L1250.8 879.8 L1249.4 879.4Z" fill="#0c3d74"/><path d="M622.9 655.5 L1275.2 858.9 L1264.9 884.2 L613.7 681.1Z" fill="url(#ts8)"/><linearGradient id="rg" gradientUnits="userSpaceOnUse" x1="965.5" y1="743.8" x2="961.7" y2="756.0"><stop offset="0" stop-color="#0d4588"/><stop offset="0.4" stop-color="#1a62b4"/><stop offset="1" stop-color="#0c3f7d"/></linearGradient><path d="M628.9 638.8 L1261.7 836.1 L1256.9 848.0 L624.6 650.8Z" fill="url(#rg)"/><path d="M752.1 302.3 L617.1 679.3M765.0 306.4 L629.7 683.2M785.6 312.8 L649.8 689.5M806.2 319.2 L669.8 695.7M826.8 325.5 L689.9 702.0M847.3 331.9 L710.0 708.2M867.9 338.3 L730.1 714.5M888.5 344.7 L750.1 720.8M909.1 351.1 L770.2 727.0M929.6 357.5 L790.3 733.3M950.2 363.9 L810.3 739.5M970.8 370.3 L830.4 745.8M991.4 376.7 L850.5 752.1M1011.9 383.1 L870.5 758.3M1032.5 389.5 L890.6 764.6M1053.1 395.9 L910.7 770.8M1073.7 402.3 L930.8 777.1M1094.2 408.7 L950.8 783.4M1114.8 415.1 L970.9 789.6M1135.4 421.4 L991.0 795.9M1156.0 427.8 L1011.0 802.1M1176.5 434.2 L1031.1 808.4M1197.1 440.6 L1051.2 814.7M1217.7 447.0 L1071.2 820.9M1238.2 453.4 L1091.3 827.2M1258.8 459.8 L1111.4 833.4M1279.4 466.2 L1131.5 839.7M1300.0 472.6 L1151.5 846.0M1320.5 479.0 L1171.6 852.2M1341.1 485.4 L1191.7 858.5M1361.7 491.8 L1211.7 864.8M1382.3 498.2 L1231.8 871.0M1402.8 504.6 L1251.9 877.3" stroke="#1f8fd6" stroke-width="0.9" stroke-dasharray="2 2.5" fill="none" opacity="0.85"/><path d="M1384.7 572.3 L1413.1 584.8" stroke="#7a3422" stroke-width="19" stroke-linecap="round"/><path d="M1384.7 573.3 L1403.0 581.3" stroke="#b05a3f" stroke-width="12" stroke-linecap="round"/><path d="M1386.7 559.8 L1427.9 577.9" stroke="#7c3624" stroke-width="30" stroke-linecap="round"/><path d="M1386.7 559.0 L1426.0 576.0" stroke="#96462f" stroke-width="28" stroke-linecap="round"/><path d="M1386.7 558.0 L1423.2 573.3" stroke="#ab553b" stroke-width="25" stroke-linecap="round"/><path d="M1386.7 556.8 L1419.6 569.7" stroke="#b95f43" stroke-width="20" stroke-linecap="round"/><path d="M1386.7 554.8 L1413.2 564.9" stroke="#c66b4d" stroke-width="12" stroke-linecap="round"/><path d="M1386.7 553.3 L1400.3 558.2" stroke="#d37c5e" stroke-width="4" stroke-linecap="round"/><path d="M1373.5 542.7 L1385.8 546.5 L1377.2 568.0 L1364.9 564.1Z" fill="#b45c3e"/><path d="M1385.8 546.5 L1395.1 549.4 L1386.4 570.8 L1377.2 568.0Z" fill="#155baa"/><path d="M1373.5 542.7 L1395.1 549.4 L1386.4 570.8 L1364.9 564.1Z" fill="url(#ts1)"/><path d="M1377.2 568.0 L1380.2 568.9 L1371.4 590.8 L1368.3 589.9Z" fill="#0b3869"/><path d="M1367.4 614.8 L1395.8 627.3" stroke="#7a3422" stroke-width="19" stroke-linecap="round"/><path d="M1367.4 615.8 L1385.7 623.9" stroke="#b05a3f" stroke-width="12" stroke-linecap="round"/><path d="M1369.4 602.3 L1410.6 620.5" stroke="#7c3624" stroke-width="30" stroke-linecap="round"/><path d="M1369.4 601.5 L1408.7 618.6" stroke="#96462f" stroke-width="28" stroke-linecap="round"/><path d="M1369.4 600.5 L1406.0 615.9" stroke="#ab553b" stroke-width="25" stroke-linecap="round"/><path d="M1369.4 599.3 L1402.3 612.3" stroke="#b95f43" stroke-width="20" stroke-linecap="round"/><path d="M1369.4 597.3 L1395.9 607.4" stroke="#c66b4d" stroke-width="12" stroke-linecap="round"/><path d="M1369.4 595.8 L1383.1 600.8" stroke="#d37c5e" stroke-width="4" stroke-linecap="round"/><path d="M1356.4 585.0 L1368.7 588.9 L1359.8 610.7 L1347.6 606.9Z" fill="#b45c3e"/><path d="M1368.7 588.9 L1377.9 591.7 L1369.0 613.6 L1359.8 610.7Z" fill="#155baa"/><path d="M1356.4 585.0 L1377.9 591.7 L1369.0 613.6 L1347.6 606.9Z" fill="url(#ts2)"/><path d="M1359.8 610.7 L1362.9 611.7 L1354.0 633.6 L1351.0 632.6Z" fill="#0b3869"/><path d="M1350.2 657.4 L1378.5 669.9" stroke="#7a3422" stroke-width="19" stroke-linecap="round"/><path d="M1350.2 658.4 L1368.5 666.5" stroke="#b05a3f" stroke-width="12" stroke-linecap="round"/><path d="M1352.2 644.9 L1393.4 663.0" stroke="#7c3624" stroke-width="30" stroke-linecap="round"/><path d="M1352.2 644.1 L1391.5 661.1" stroke="#96462f" stroke-width="28" stroke-linecap="round"/><path d="M1352.2 643.1 L1388.7 658.4" stroke="#ab553b" stroke-width="25" stroke-linecap="round"/><path d="M1352.2 641.9 L1385.0 654.8" stroke="#b95f43" stroke-width="20" stroke-linecap="round"/><path d="M1352.2 639.9 L1378.6 650.0" stroke="#c66b4d" stroke-width="12" stroke-linecap="round"/><path d="M1352.2 638.4 L1365.8 643.3" stroke="#d37c5e" stroke-width="4" stroke-linecap="round"/><path d="M1339.3 627.4 L1351.5 631.2 L1342.5 653.5 L1330.3 649.7Z" fill="#b45c3e"/><path d="M1351.5 631.2 L1360.7 634.1 L1351.7 656.3 L1342.5 653.5Z" fill="#155baa"/><path d="M1339.3 627.4 L1360.7 634.1 L1351.7 656.3 L1330.3 649.7Z" fill="url(#ts3)"/><path d="M1342.5 653.5 L1345.6 654.4 L1336.7 676.3 L1333.6 675.4Z" fill="#0b3869"/><path d="M1332.9 699.9 L1361.3 712.4" stroke="#7a3422" stroke-width="19" stroke-linecap="round"/><path d="M1332.9 700.9 L1351.2 709.0" stroke="#b05a3f" stroke-width="12" stroke-linecap="round"/><path d="M1334.9 687.4 L1376.1 705.6" stroke="#7c3624" stroke-width="30" stroke-linecap="round"/><path d="M1334.9 686.6 L1374.2 703.7" stroke="#96462f" stroke-width="28" stroke-linecap="round"/><path d="M1334.9 685.6 L1371.4 701.0" stroke="#ab553b" stroke-width="25" stroke-linecap="round"/><path d="M1334.9 684.4 L1367.8 697.4" stroke="#b95f43" stroke-width="20" stroke-linecap="round"/><path d="M1334.9 682.4 L1361.4 692.5" stroke="#c66b4d" stroke-width="12" stroke-linecap="round"/><path d="M1334.9 680.9 L1348.6 685.9" stroke="#d37c5e" stroke-width="4" stroke-linecap="round"/><path d="M1322.2 669.8 L1334.4 673.6 L1325.2 696.2 L1313.0 692.5Z" fill="#b45c3e"/><path d="M1334.4 673.6 L1343.5 676.4 L1334.3 699.1 L1325.2 696.2Z" fill="#155baa"/><path d="M1322.2 669.8 L1343.5 676.4 L1334.3 699.1 L1313.0 692.5Z" fill="url(#ts4)"/><path d="M1325.2 696.2 L1328.2 697.2 L1319.4 719.1 L1316.3 718.2Z" fill="#0b3869"/><path d="M1315.7 742.5 L1344.0 755.0" stroke="#7a3422" stroke-width="19" stroke-linecap="round"/><path d="M1315.7 743.5 L1334.0 751.6" stroke="#b05a3f" stroke-width="12" stroke-linecap="round"/><path d="M1317.7 730.0 L1358.8 748.1" stroke="#7c3624" stroke-width="30" stroke-linecap="round"/><path d="M1317.7 729.2 L1357.0 746.2" stroke="#96462f" stroke-width="28" stroke-linecap="round"/><path d="M1317.7 728.2 L1354.2 743.5" stroke="#ab553b" stroke-width="25" stroke-linecap="round"/><path d="M1317.7 727.0 L1350.5 739.9" stroke="#b95f43" stroke-width="20" stroke-linecap="round"/><path d="M1317.7 725.0 L1344.1 735.1" stroke="#c66b4d" stroke-width="12" stroke-linecap="round"/><path d="M1317.7 723.5 L1331.3 728.4" stroke="#d37c5e" stroke-width="4" stroke-linecap="round"/><path d="M1305.1 712.1 L1317.2 715.9 L1307.9 739.0 L1295.7 735.2Z" fill="#b45c3e"/><path d="M1317.2 715.9 L1326.4 718.8 L1317.0 741.8 L1307.9 739.0Z" fill="#155baa"/><path d="M1305.1 712.1 L1326.4 718.8 L1317.0 741.8 L1295.7 735.2Z" fill="url(#ts5)"/><path d="M1307.9 739.0 L1310.9 740.0 L1302.0 761.9 L1299.0 760.9Z" fill="#0b3869"/><path d="M1298.4 785.0 L1326.8 797.5" stroke="#7a3422" stroke-width="19" stroke-linecap="round"/><path d="M1298.4 786.0 L1316.7 794.1" stroke="#b05a3f" stroke-width="12" stroke-linecap="round"/><path d="M1300.4 772.5 L1341.6 790.7" stroke="#7c3624" stroke-width="30" stroke-linecap="round"/><path d="M1300.4 771.7 L1339.7 788.8" stroke="#96462f" stroke-width="28" stroke-linecap="round"/><path d="M1300.4 770.7 L1336.9 786.1" stroke="#ab553b" stroke-width="25" stroke-linecap="round"/><path d="M1300.4 769.5 L1333.3 782.5" stroke="#b95f43" stroke-width="20" stroke-linecap="round"/><path d="M1300.4 767.5 L1326.8 777.6" stroke="#c66b4d" stroke-width="12" stroke-linecap="round"/><path d="M1300.4 766.0 L1314.0 771.0" stroke="#d37c5e" stroke-width="4" stroke-linecap="round"/><path d="M1287.9 754.5 L1300.1 758.3 L1290.6 781.8 L1278.4 778.0Z" fill="#b45c3e"/><path d="M1300.1 758.3 L1309.2 761.1 L1299.6 784.6 L1290.6 781.8Z" fill="#155baa"/><path d="M1287.9 754.5 L1309.2 761.1 L1299.6 784.6 L1278.4 778.0Z" fill="url(#ts6)"/><path d="M1290.6 781.8 L1293.6 782.7 L1284.7 804.6 L1281.7 803.7Z" fill="#0b3869"/><path d="M1281.1 827.6 L1309.5 840.1" stroke="#7a3422" stroke-width="19" stroke-linecap="round"/><path d="M1281.1 828.6 L1299.4 836.7" stroke="#b05a3f" stroke-width="12" stroke-linecap="round"/><path d="M1283.1 815.1 L1324.3 833.2" stroke="#7c3624" stroke-width="30" stroke-linecap="round"/><path d="M1283.1 814.3 L1322.4 831.3" stroke="#96462f" stroke-width="28" stroke-linecap="round"/><path d="M1283.1 813.3 L1319.7 828.6" stroke="#ab553b" stroke-width="25" stroke-linecap="round"/><path d="M1283.1 812.1 L1316.0 825.0" stroke="#b95f43" stroke-width="20" stroke-linecap="round"/><path d="M1283.1 810.1 L1309.6 820.2" stroke="#c66b4d" stroke-width="12" stroke-linecap="round"/><path d="M1283.1 808.6 L1296.8 813.5" stroke="#d37c5e" stroke-width="4" stroke-linecap="round"/><path d="M1270.8 796.9 L1282.9 800.6 L1273.2 824.5 L1261.1 820.8Z" fill="#b45c3e"/><path d="M1282.9 800.6 L1292.0 803.5 L1282.3 827.4 L1273.2 824.5Z" fill="#155baa"/><path d="M1270.8 796.9 L1292.0 803.5 L1282.3 827.4 L1261.1 820.8Z" fill="url(#ts7)"/><path d="M1273.2 824.5 L1276.3 825.5 L1267.4 847.4 L1264.4 846.4Z" fill="#0b3869"/><path d="M1564 566 L1553 600" stroke="#6e3020" stroke-width="9" stroke-linecap="round"/><path d="M1563 494 L1543 603" stroke="#6e3020" stroke-width="26" stroke-linecap="round"/><path d="M1561.5 494 L1541.5 603" stroke="#7f3926" stroke-width="22" stroke-linecap="round"/><path d="M1560 493.7 L1540 602.7" stroke="#8f432d" stroke-width="17" stroke-linecap="round"/><path d="M1558.5 493.5 L1538.5 602.5" stroke="#9d4c34" stroke-width="12" stroke-linecap="round"/><path d="M1557 493.2 L1537 602.2" stroke="#a8553b" stroke-width="6" stroke-linecap="round"/><path d="M1415.2 519.8 L1470 536 C1522 552 1552 543 1558 496 L1562 489" fill="none" stroke="#86402b" stroke-width="24.0" stroke-linecap="round" stroke-linejoin="round" transform="translate(0 0)" /><path d="M1415.2 519.8 L1470 536 C1522 552 1552 543 1558 496 L1562 489" fill="none" stroke="#98492f" stroke-width="21.6" stroke-linecap="round" stroke-linejoin="round" transform="translate(-0.5 -0.9)" /><path d="M1415.2 519.8 L1470 536 C1522 552 1552 543 1558 496 L1562 489" fill="none" stroke="#a65339" stroke-width="18.7" stroke-linecap="round" stroke-linejoin="round" transform="translate(-0.9 -1.7)" /><path d="M1415.2 519.8 L1470 536 C1522 552 1552 543 1558 496 L1562 489" fill="none" stroke="#b05b40" stroke-width="14.4" stroke-linecap="round" stroke-linejoin="round" transform="translate(-1.3 -2.6)" /><path d="M1415.2 519.8 L1470 536 C1522 552 1552 543 1558 496 L1562 489" fill="none" stroke="#b96347" stroke-width="9.6" stroke-linecap="round" stroke-linejoin="round" transform="translate(-1.7 -3.6)" /><path d="M1415.2 519.8 L1470 536 C1522 552 1552 543 1558 496 L1562 489" fill="none" stroke="#c26c4f" stroke-width="4.8" stroke-linecap="round" stroke-linejoin="round" transform="translate(-2.0 -4.4)" /><path d="M1434 918 L1423 952" stroke="#6e3020" stroke-width="9" stroke-linecap="round"/><path d="M1433 846 L1414 956" stroke="#6e3020" stroke-width="26" stroke-linecap="round"/><path d="M1431.5 846 L1412.5 956" stroke="#7f3926" stroke-width="22" stroke-linecap="round"/><path d="M1430 845.7 L1411 955.7" stroke="#8f432d" stroke-width="17" stroke-linecap="round"/><path d="M1428.5 845.5 L1409.5 955.5" stroke="#9d4c34" stroke-width="12" stroke-linecap="round"/><path d="M1427 845.2 L1408 955.2" stroke="#a8553b" stroke-width="6" stroke-linecap="round"/><path d="M1279.1 874.3 L1335 888 C1388 905 1421 897 1428 850 L1432 842" fill="none" stroke="#86402b" stroke-width="24.0" stroke-linecap="round" stroke-linejoin="round" transform="translate(0 0)" /><path d="M1279.1 874.3 L1335 888 C1388 905 1421 897 1428 850 L1432 842" fill="none" stroke="#98492f" stroke-width="21.6" stroke-linecap="round" stroke-linejoin="round" transform="translate(-0.5 -0.9)" /><path d="M1279.1 874.3 L1335 888 C1388 905 1421 897 1428 850 L1432 842" fill="none" stroke="#a65339" stroke-width="18.7" stroke-linecap="round" stroke-linejoin="round" transform="translate(-0.9 -1.7)" /><path d="M1279.1 874.3 L1335 888 C1388 905 1421 897 1428 850 L1432 842" fill="none" stroke="#b05b40" stroke-width="14.4" stroke-linecap="round" stroke-linejoin="round" transform="translate(-1.3 -2.6)" /><path d="M1279.1 874.3 L1335 888 C1388 905 1421 897 1428 850 L1432 842" fill="none" stroke="#b96347" stroke-width="9.6" stroke-linecap="round" stroke-linejoin="round" transform="translate(-1.7 -3.6)" /><path d="M1279.1 874.3 L1335 888 C1388 905 1421 897 1428 850 L1432 842" fill="none" stroke="#c26c4f" stroke-width="4.8" stroke-linecap="round" stroke-linejoin="round" transform="translate(-2.0 -4.4)" /><path d="M1040 612.6 L1063.3 619.4" stroke="#2ee8f2" stroke-width="1.3"/><path d="M1063.3 619.4 L1070.5 603" stroke="#30e030" stroke-width="1.2"/><path d="M1063.3 619.4 L1066.6 603.8" stroke="#ff3030" stroke-width="1.2"/><circle cx="1070.5" cy="603" r="1.9" fill="#30e030"/><circle cx="1066.6" cy="603.8" r="2.3" fill="#ff3030"/><circle cx="1040" cy="612.6" r="2.2" fill="#2ee8f2"/></svg><div class="abs" style="left:606px;top:7px;width:297px;height:32px;background:#f7f7f7;border:1px solid #9c9c9c"></div><svg class="ic" style="left:614px;top:14px" width="18" height="18" viewBox="0 0 18 18"><rect x="0.5" y="0.5" width="14" height="14" fill="#fafafa" stroke="#b5b5b5"/><g transform="translate(1.5 1.5) scale(0.92)"><circle cx="7" cy="7" r="5.3" fill="url(#gGlass)" stroke="#1f7fb5" stroke-width="1.3"/><path d="M11 11 L16 16" stroke="#b0b0b0" stroke-width="3.2" stroke-linecap="round"/><path d="M11 11 L16 16" stroke="#e9e9e9" stroke-width="1.4" stroke-linecap="round"/></g></svg><svg class="ic" style="left:639px;top:14px" width="18" height="18" viewBox="0 0 18 18"><circle cx="7" cy="7" r="5.3" fill="url(#gGlass)" stroke="#1f7fb5" stroke-width="1.3"/><path d="M11 11 L16 16" stroke="#b0b0b0" stroke-width="3.2" stroke-linecap="round"/><path d="M11 11 L16 16" stroke="#e9e9e9" stroke-width="1.4" stroke-linecap="round"/><path d="M4 7 H10 M7 4 V10" stroke="#1b5f96" stroke-width="1.8"/></svg><svg class="ic" style="left:665px;top:14px" width="18" height="18" viewBox="0 0 18 18"><circle cx="7" cy="7" r="5.3" fill="url(#gGlass)" stroke="#1f7fb5" stroke-width="1.3"/><path d="M11 11 L16 16" stroke="#b0b0b0" stroke-width="3.2" stroke-linecap="round"/><path d="M11 11 L16 16" stroke="#e9e9e9" stroke-width="1.4" stroke-linecap="round"/><path d="M4 7 H10" stroke="#1b5f96" stroke-width="1.8"/></svg><svg class="ic" style="left:692px;top:14px" width="17" height="17" viewBox="0 0 17 17"><rect x="0.5" y="0.5" width="15.5" height="15.5" fill="#fff" stroke="#b5b5b5"/><path d="M1 2.5 H15.5 V1 H1 Z" fill="#d5d5d5"/><path d="M3 15.5 H15.5 V3 Z" fill="#d9eff9"/><path d="M3 15.5 L15.5 3 V6 L6 15.5 Z" fill="#1b6fa8"/></svg><svg class="ic" style="left:717px;top:12px" width="22" height="22" viewBox="0 0 22 22"><path d="M7 4 L10 1.5 H17 V9.5 L14 12.5 H7 Z" fill="#f0f0f0" stroke="#d0d0d0" stroke-width="0.6"/><path d="M14 4.5 L17 1.5 V9.5 L14 12.5 Z" fill="#c9c9c9"/><circle cx="7" cy="12.5" r="5.5" fill="url(#gBallW)"/><path d="M20 20 v-3.5 l-3.5 3.5 Z" fill="#333"/></svg><svg class="ic" style="left:744px;top:12px" width="22" height="22" viewBox="0 0 22 22"><path d="M1 5.5 L4.5 1.5 H16.5 L13 5.5 Z" fill="#c7ecf9" stroke="#7fcbe6" stroke-width="0.8"/><path d="M13 5.5 L16.5 1.5 V13 L13 17 Z" fill="#6fb4d6" stroke="#5fa8cc" stroke-width="0.8"/><rect x="1" y="5.5" width="12" height="11.5" fill="#fff" stroke="#8fd3ea" stroke-width="1"/><path d="M20 20 v-3.5 l-3.5 3.5 Z" fill="#333"/></svg><svg class="ic" style="left:771px;top:12px" width="22" height="22" viewBox="0 0 22 22"><path d="M1 5.5 L4.5 1.5 H16.5 L13 5.5 Z" fill="#e4f5fb" stroke="#9fd6ea" stroke-width="0.8"/><path d="M13 5.5 L16.5 1.5 V13 L13 17 Z" fill="#8cc6e0" stroke="#7fbcd8" stroke-width="0.8"/><rect x="1" y="5.5" width="12" height="11.5" fill="#fff" stroke="#a9dcee" stroke-width="1"/><rect x="9.5" y="9" width="8" height="9.5" fill="#f4f4f4" stroke="#777" stroke-width="0.8"/><path d="M11.5 11.5 H15.5 M11.5 13.8 H15.5 M11.5 16 H15.5" stroke="#666" stroke-width="0.8"/><path d="M21.5 20 v-3.5 l-3.5 3.5 Z" fill="#333"/></svg><svg class="ic" style="left:798px;top:13px" width="20" height="19" viewBox="0 0 20 19"><rect x="0.5" y="0.5" width="13.5" height="14" fill="#fbfbfb" stroke="#b0b0b0" stroke-width="0.8"/><path d="M0.5 3.5 H14" stroke="#b5b5b5" stroke-width="0.7"/><path d="M0.5 6.8 H14" stroke="#b5b5b5" stroke-width="0.7"/><path d="M0.5 10.1 H14" stroke="#b5b5b5" stroke-width="0.7"/><path d="M0.5 13.4 H14" stroke="#b5b5b5" stroke-width="0.7"/><path d="M4 0.5 V14.5" stroke="#b5b5b5" stroke-width="0.7"/><rect x="6.5" y="10" width="11" height="7.5" rx="1" fill="#3a3a3a"/><rect x="9.5" y="8.6" width="4.5" height="2" fill="#3a3a3a"/><circle cx="12" cy="13.8" r="2.6" fill="#8a8a8a" stroke="#1e1e1e" stroke-width="0.8"/><circle cx="12" cy="13.8" r="1.1" fill="#222"/></svg><svg class="ic" style="left:824px;top:12px" width="22" height="22" viewBox="0 0 22 22"><g stroke="#8e6b25" stroke-width="1.3" fill="none"><path d="M1.2 2.2 L4.8 5.8 M4.8 2.2 L1.2 5.8"/><path d="M10 1.5 L4 17" stroke-dasharray="4.5 2.5"/><path d="M12.5 7.5 L14.5 16.5 M8.5 11.5 L17 13.5 M16 8.5 L10.5 16.5"/></g><path d="M21 20 v-3.5 l-3.5 3.5 Z" fill="#333"/></svg><div class="abs" style="left:849px;top:11px;width:23px;height:23px;background:#dcdcdc;border:1px solid #b9b9b9"></div><svg class="ic" style="left:852px;top:14px" width="18" height="18" viewBox="0 0 18 18"><rect x="0.5" y="0.5" width="8" height="5.5" fill="#fbeec8" stroke="#c9c9c9" stroke-width="0.7"/><path d="M9.5 3 H15 L12 7.5 H15" fill="none" stroke="#333" stroke-width="1.3"/><path d="M10.5 8.5 L13 10.5 L15.5 7.5 Z" fill="#333"/><ellipse cx="11.5" cy="14" rx="4.6" ry="2.6" fill="#fff" stroke="#333" stroke-width="1.2"/><circle cx="11.5" cy="14" r="1.3" fill="#333"/></svg><div class="abs" style="left:875px;top:11px;width:23px;height:23px;background:#dcdcdc;border:1px solid #b9b9b9"></div><svg class="ic" style="left:878px;top:13px" width="19" height="20" viewBox="0 0 19 20"><path d="M3.5 4 L8.5 9.5 L3.5 16 M8.5 9.5 H14" fill="none" stroke="#333" stroke-width="1.2"/><circle cx="3.5" cy="3.5" r="2.6" fill="#5cae6a" stroke="#3a8548" stroke-width="0.6"/><circle cx="14.5" cy="9.5" r="2.6" fill="#e36a5c" stroke="#b54638" stroke-width="0.6"/><circle cx="3.5" cy="16" r="2.6" fill="#3a8fc2" stroke="#1f6c9c" stroke-width="0.6"/></svg></div>
<div id="botline"></div><div id="status"><div class="abs" style="left:6px;top:10px;width:22px;height:22px;background:#e2e2e2;border:1px solid #bdbdbd"></div><svg class="ic" style="left:12px;top:12px" width="14" height="18" viewBox="0 0 14 18"><g transform="scale(0.85)"><g fill="#fff" stroke="#222" stroke-width="1.2"><path d="M3.5 5 V16 M3.5 10 H9" fill="none"/><rect x="1" y="0.8" width="4.6" height="4.6"/><rect x="1" y="7.7" width="4.6" height="4.6"/><rect x="1" y="14.6" width="4.6" height="4.6"/><rect x="9" y="7.7" width="4.6" height="4.6"/></g></g></svg><svg class="ic" style="left:34px;top:11px" width="18" height="19" viewBox="0 0 18 19"><circle cx="9" cy="10" r="6.5" fill="#3a9ad6"/><path d="M5 6 Q8 4 10 6.5 Q8 9 9.5 11 Q7 13.5 5.5 11 Q3.5 9 5 6 Z M11.5 8 Q14 8.5 14.5 11 Q13 14 11 13 Q10.5 10 11.5 8 Z" fill="#9fd8f5"/><ellipse cx="9" cy="10" rx="9.2" ry="3.6" fill="none" stroke="#555" stroke-width="1.1" transform="rotate(-35 9 10)"/></svg><svg class="ic" style="left:61px;top:12px" width="17" height="18" viewBox="0 0 17 18"><rect x="0.7" y="0.7" width="15" height="15.6" rx="1" fill="url(#gSq)" stroke="#2a7fa8" stroke-width="1"/><path d="M0.7 16 H15.7" stroke="#1b5f86" stroke-width="1.4"/></svg><div class="abs" style="left:89px;top:10px;width:1px;height:22px;background:#b5b5b5"></div><div class="abs" style="left:1396px;top:2px;width:1px;height:30px;background:#c4c4c4"></div><div class="abs" style="left:1437px;top:2px;width:1px;height:30px;background:#c4c4c4"></div><div class="abs" style="left:1440px;top:4px;width:42px;height:24px;background:#f4f4f4;border:1px solid #c9c9c9"></div><div class="abs" style="left:1467px;top:5px;width:1px;height:22px;background:#d0d0d0"></div><svg class="ic" style="left:1445px;top:8px" width="17" height="16" viewBox="0 0 17 16"><g transform="scale(0.92)"><path d="M3.5 1 H7 L8 5 V15 H1 V9 Z" fill="url(#gBino)"/><path d="M14.5 1 H11 L10 5 V15 H17 V9 Z" fill="url(#gBino)"/><rect x="7.5" y="4" width="3" height="5" fill="#444"/><rect x="1" y="13.5" width="7" height="2" fill="#111"/><rect x="10" y="13.5" width="7" height="2" fill="#111"/></g></svg><div class="dd" style="left:1471.0px;top:14px;border-left-width:3.5px;border-right-width:3.5px;border-top-width:3.5px"></div><div class="abs" style="left:1484px;top:2px;width:1px;height:30px;background:#c4c4c4"></div><div class="abs" style="left:1487px;top:4px;width:40px;height:28px;background:#f4f4f4;border:1px solid #c9c9c9"></div><svg class="ic" style="left:1497px;top:8px" width="20" height="20" viewBox="0 0 20 20"><path d="M1 5 L4.5 1.5 H18.5 V14.5 L15 18.5 H1 Z M1 5 H15 V18.5 M15 5 L18.5 1.5" fill="#fff" stroke="#333" stroke-width="1.1"/><rect x="3" y="9" width="8" height="8" fill="#f9e4b5" stroke="#c9952f" stroke-width="0.8"/><rect x="6" y="7" width="7" height="7.5" fill="#8fd3ea" stroke="#2a8fbd" stroke-width="0.8"/></svg><div class="abs" style="left:1624px;top:5px;width:177px;height:25px;background:#f9f9f9;border:1px solid #b3b4b6"></div><div class="abs" style="left:1785px;top:6px;width:1px;height:23px;background:#b3b4b6"></div><div class="abs" style="left:1632px;top:9px;line-height:17px;font-size:12.5px;color:#333">几何</div><div class="dd" style="left:1789.0px;top:16px;border-left-width:3.5px;border-right-width:3.5px;border-top-width:3.5px"></div><svg class="ic" style="left:1803px;top:20px" width="13" height="13" viewBox="0 0 13 13"><path d="M12 1 L1 12 M12 5 L5 12 M12 9 L9 12" stroke="#c0c0c0" stroke-width="1"/></svg></div>
</div>
</body></html>
